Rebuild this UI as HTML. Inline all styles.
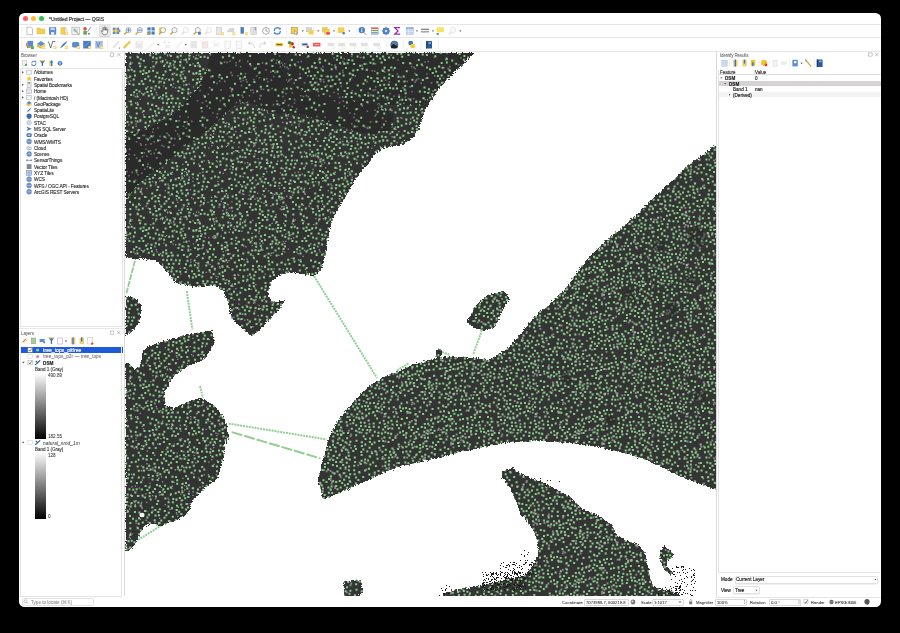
<!DOCTYPE html>
<html><head><meta charset="utf-8">
<style>
*{margin:0;padding:0;box-sizing:border-box}
html,body{width:900px;height:633px;background:#000;overflow:hidden;font-family:"Liberation Sans",sans-serif;color:#222}
.a{position:absolute}
.map,.icons{position:absolute;left:0;top:0}
.t{position:absolute;white-space:nowrap;line-height:1;-webkit-text-stroke:0.15px currentColor;will-change:transform}
</style></head><body>
<div class="a" style="left:19px;top:12.8px;width:862px;height:594.6px;background:#fff;border-radius:5.5px"></div>
<div class="a" style="left:22.7px;top:16.1px;width:5.2px;height:5.2px;background:#fe5f57;border-radius:50%"></div>
<div class="a" style="left:30.699999999999996px;top:16.1px;width:5.2px;height:5.2px;background:#febc2e;border-radius:50%"></div>
<div class="a" style="left:38.699999999999996px;top:16.1px;width:5.2px;height:5.2px;background:#28c840;border-radius:50%"></div>
<div class="t" style="left:49px;top:16.98px;font-size:5px;color:#3a3a3a;-webkit-text-stroke:0.2px #3a3a3a;letter-spacing:-0.05px">*Untitled Project — QGIS</div>
<div class="a" style="left:19px;top:24px;width:862px;height:0.8px;background:#e6e6e6;"></div>
<div class="a" style="left:19px;top:37px;width:862px;height:0.8px;background:#e6e6e6;"></div>
<div class="a" style="left:19px;top:51px;width:862px;height:0.8px;background:#e6e6e6;"></div>
<div class="a" style="left:99px;top:25.6px;width:11.3px;height:11px;background:#e8e8e8;border-radius:1.5px;border:0.5px solid #d6d6d6"></div>
<div class="a" style="left:124px;top:51px;width:0.8px;height:545px;background:#dcdcdc;"></div>
<div class="a" style="left:716px;top:51px;width:0.8px;height:546px;background:#dcdcdc;"></div>
<div class="t" style="left:21px;top:54.37px;font-size:4.5px;color:#555;letter-spacing:-0.1px;-webkit-text-stroke:0.02px #555">Browser</div>
<div class="a" style="left:20.3px;top:68.3px;width:102.7px;height:259px;background:#fff;border:0.6px solid #e4e4e4"></div>
<div class="t" style="left:34.2px;top:71.47px;font-size:4.8px;color:#262626;letter-spacing:-0.12px;-webkit-text-stroke:0.1px #262626">/Volumes</div>
<div class="t" style="left:34.2px;top:77.75px;font-size:4.8px;color:#262626;letter-spacing:-0.12px;-webkit-text-stroke:0.1px #262626">Favorites</div>
<div class="t" style="left:34.2px;top:84.04px;font-size:4.8px;color:#262626;letter-spacing:-0.12px;-webkit-text-stroke:0.1px #262626">Spatial Bookmarks</div>
<div class="t" style="left:34.2px;top:90.33px;font-size:4.8px;color:#262626;letter-spacing:-0.12px;-webkit-text-stroke:0.1px #262626">Home</div>
<div class="t" style="left:34.2px;top:96.61px;font-size:4.8px;color:#262626;letter-spacing:-0.12px;-webkit-text-stroke:0.1px #262626">/ (Macintosh HD)</div>
<div class="t" style="left:34.2px;top:102.89px;font-size:4.8px;color:#262626;letter-spacing:-0.12px;-webkit-text-stroke:0.1px #262626">GeoPackage</div>
<div class="t" style="left:34.2px;top:109.18px;font-size:4.8px;color:#262626;letter-spacing:-0.12px;-webkit-text-stroke:0.1px #262626">SpatiaLite</div>
<div class="t" style="left:34.2px;top:115.47px;font-size:4.8px;color:#262626;letter-spacing:-0.12px;-webkit-text-stroke:0.1px #262626">PostgreSQL</div>
<div class="t" style="left:34.2px;top:121.75px;font-size:4.8px;color:#262626;letter-spacing:-0.12px;-webkit-text-stroke:0.1px #262626">STAC</div>
<div class="t" style="left:34.2px;top:128.03px;font-size:4.8px;color:#262626;letter-spacing:-0.12px;-webkit-text-stroke:0.1px #262626">MS SQL Server</div>
<div class="t" style="left:34.2px;top:134.32px;font-size:4.8px;color:#262626;letter-spacing:-0.12px;-webkit-text-stroke:0.1px #262626">Oracle</div>
<div class="t" style="left:34.2px;top:140.60px;font-size:4.8px;color:#262626;letter-spacing:-0.12px;-webkit-text-stroke:0.1px #262626">WMS/WMTS</div>
<div class="t" style="left:34.2px;top:146.89px;font-size:4.8px;color:#262626;letter-spacing:-0.12px;-webkit-text-stroke:0.1px #262626">Cloud</div>
<div class="t" style="left:34.2px;top:153.17px;font-size:4.8px;color:#262626;letter-spacing:-0.12px;-webkit-text-stroke:0.1px #262626">Scenes</div>
<div class="t" style="left:34.2px;top:159.46px;font-size:4.8px;color:#262626;letter-spacing:-0.12px;-webkit-text-stroke:0.1px #262626">SensorThings</div>
<div class="t" style="left:34.2px;top:165.74px;font-size:4.8px;color:#262626;letter-spacing:-0.12px;-webkit-text-stroke:0.1px #262626">Vector Tiles</div>
<div class="t" style="left:34.2px;top:172.03px;font-size:4.8px;color:#262626;letter-spacing:-0.12px;-webkit-text-stroke:0.1px #262626">XYZ Tiles</div>
<div class="t" style="left:34.2px;top:178.31px;font-size:4.8px;color:#262626;letter-spacing:-0.12px;-webkit-text-stroke:0.1px #262626">WCS</div>
<div class="t" style="left:34.2px;top:184.60px;font-size:4.8px;color:#262626;letter-spacing:-0.12px;-webkit-text-stroke:0.1px #262626">WFS / OGC API - Features</div>
<div class="t" style="left:34.2px;top:190.88px;font-size:4.8px;color:#262626;letter-spacing:-0.12px;-webkit-text-stroke:0.1px #262626">ArcGIS REST Servers</div>
<div class="a" style="left:19px;top:327.5px;width:105px;height:0.6px;background:#e8e8e8;"></div>
<div class="t" style="left:21px;top:332.27px;font-size:4.5px;color:#555;letter-spacing:-0.1px;-webkit-text-stroke:0.02px #555">Layers</div>
<div class="a" style="left:19.6px;top:346.9px;width:103px;height:6.2px;background:#1f5bd9;"></div>
<div class="t" style="left:43.1px;top:348.38px;font-size:5.0px;color:#fff;letter-spacing:0.05px"><u>tree_tops_pitfree</u></div>
<div class="t" style="left:43.1px;top:355.27px;font-size:4.7px;color:#8a8a8a;letter-spacing:0.1px">tree_tops_p2r — tree_tops</div>
<div class="t" style="left:43.1px;top:361.87px;font-size:4.7px;color:#222;font-weight:bold">DSM</div>
<div class="t" style="left:35px;top:368.17px;font-size:4.6px;color:#2a2a2a;-webkit-text-stroke:0.08px #2a2a2a;letter-spacing:-0.05px">Band 1 (Gray)</div>
<div class="a" style="left:35px;top:372.5px;width:11px;height:66.3px;background:linear-gradient(#fff,#000);"></div>
<div class="t" style="left:48px;top:373.77px;font-size:4.6px;color:#333;-webkit-text-stroke:0.05px #333">490.89</div>
<div class="t" style="left:48px;top:435.47px;font-size:4.6px;color:#333;-webkit-text-stroke:0.05px #333">182.55</div>
<div class="t" style="left:43.1px;top:441.77px;font-size:4.8px;color:#444;font-style:italic;-webkit-text-stroke:0.05px #444;letter-spacing:0.05px">natural_nmd_1m</div>
<div class="t" style="left:35px;top:447.57px;font-size:4.6px;color:#2a2a2a;-webkit-text-stroke:0.08px #2a2a2a;letter-spacing:-0.05px">Band 1 (Gray)</div>
<div class="a" style="left:35px;top:452px;width:11px;height:66.5px;background:linear-gradient(#fff,#000);"></div>
<div class="t" style="left:48px;top:453.87px;font-size:4.6px;color:#333;-webkit-text-stroke:0.05px #333">128</div>
<div class="t" style="left:48px;top:515.47px;font-size:4.6px;color:#333;-webkit-text-stroke:0.05px #333">0</div>
<div class="a" style="left:20.2px;top:345.5px;width:102px;height:251px;background:transparent;border:0.6px solid #e4e4e4;border-top:none"></div>
<div class="a" style="left:21.7px;top:597.8px;width:72px;height:7.8px;background:#fff;border:0.6px solid #e2e2e2;border-radius:2px"></div>
<div class="t" style="left:31.3px;top:601.07px;font-size:4.6px;color:#8a8a8a;-webkit-text-stroke:0.05px #8a8a8a">Type to locate (⌘K)</div>
<div class="t" style="left:720px;top:54.37px;font-size:4.5px;color:#555;letter-spacing:-0.15px;-webkit-text-stroke:0.02px #555">Identify Results</div>
<div class="a" style="left:718.4px;top:69.5px;width:162px;height:503.3px;background:#fff;border:0.6px solid #e4e4e4;border-right:none"></div>
<div class="a" style="left:718.7px;top:69.7px;width:162px;height:4.9px;background:#fff;border-bottom:0.6px solid #dadada"></div>
<div class="a" style="left:753.5px;top:70px;width:0.6px;height:4.4px;background:#e0e0e0;"></div>
<div class="t" style="left:720px;top:71.27px;font-size:4.5px;color:#333;">Feature</div>
<div class="t" style="left:755px;top:71.27px;font-size:4.5px;color:#333;">Value</div>
<div class="a" style="left:718.7px;top:80.7px;width:162px;height:5.4px;background:#d4d4d4;"></div>
<div class="a" style="left:718.7px;top:92px;width:162px;height:5.4px;background:#f2f4f4;"></div>
<div class="t" style="left:724.7px;top:77.07px;font-size:4.6px;color:#222;font-weight:bold">DSM</div>
<div class="t" style="left:755px;top:77.07px;font-size:4.6px;color:#222;">0</div>
<div class="t" style="left:728.6px;top:82.67px;font-size:4.6px;color:#222;font-weight:bold">DSM</div>
<div class="t" style="left:733px;top:88.37px;font-size:4.6px;color:#222;">Band 1</div>
<div class="t" style="left:755px;top:88.37px;font-size:4.6px;color:#222;">nan</div>
<div class="t" style="left:733px;top:93.97px;font-size:4.6px;color:#222;">(Derived)</div>
<div class="t" style="left:720.8px;top:578.17px;font-size:4.6px;color:#222;">Mode</div>
<div class="a" style="left:734.5px;top:575.6px;width:143.5px;height:8px;background:#fff;border:0.6px solid #e0e0e0;border-radius:1.5px;box-shadow:0 0.4px 0.6px rgba(0,0,0,0.12)"></div>
<div class="t" style="left:736.3px;top:578.17px;font-size:4.65px;color:#222;">Current Layer</div>
<div class="t" style="left:720.8px;top:589.47px;font-size:4.6px;color:#222;">View</div>
<div class="a" style="left:733px;top:586px;width:27.4px;height:8.3px;background:#fff;border:0.6px solid #e0e0e0;border-radius:1.5px;box-shadow:0 0.4px 0.6px rgba(0,0,0,0.12)"></div>
<div class="t" style="left:735px;top:589.47px;font-size:4.6px;color:#222;">Tree</div>
<div class="a" style="left:716px;top:596.5px;width:165px;height:0.6px;background:#e4e4e4;"></div>
<div class="t" style="left:561.7px;top:600.67px;font-size:4.2px;color:#333;-webkit-text-stroke:0.05px #333">Coordinate</div>
<div class="a" style="left:583.6px;top:598.5px;width:45.7px;height:7px;background:#fff;border:0.6px solid #d8d8d8;border-radius:1px"></div>
<div class="t" style="left:586px;top:600.77px;font-size:4.2px;color:#333;-webkit-text-stroke:0.05px #333">7073988.7, 600219.8</div>
<div class="t" style="left:641px;top:600.67px;font-size:4.2px;color:#333;-webkit-text-stroke:0.05px #333">Scale</div>
<div class="a" style="left:652px;top:598.5px;width:32px;height:7px;background:#fff;border:0.6px solid #d8d8d8;border-radius:1px"></div>
<div class="t" style="left:653.5px;top:600.77px;font-size:4.2px;color:#333;-webkit-text-stroke:0.05px #333">1:1017</div>
<div class="t" style="left:695.8px;top:600.67px;font-size:4.2px;color:#333;-webkit-text-stroke:0.05px #333">Magnifier</div>
<div class="a" style="left:714.9px;top:598.5px;width:32.1px;height:7px;background:#fff;border:0.6px solid #d8d8d8;border-radius:1px"></div>
<div class="t" style="left:716.5px;top:600.77px;font-size:4.2px;color:#333;-webkit-text-stroke:0.05px #333">100%</div>
<div class="t" style="left:750.4px;top:600.67px;font-size:4.2px;color:#333;-webkit-text-stroke:0.05px #333">Rotation</div>
<div class="a" style="left:769px;top:598.5px;width:32px;height:7px;background:#fff;border:0.6px solid #d8d8d8;border-radius:1px"></div>
<div class="t" style="left:771px;top:600.77px;font-size:4.2px;color:#333;-webkit-text-stroke:0.05px #333">0.0 °</div>
<div class="t" style="left:810.7px;top:600.67px;font-size:4.2px;color:#333;-webkit-text-stroke:0.05px #333">Render</div>
<div class="t" style="left:835px;top:600.67px;font-size:4.3px;color:#333;-webkit-text-stroke:0.05px #333;letter-spacing:-0.15px">EPSG:3006</div>
<svg class="map" width="900" height="633" viewBox="0 0 900 633">
<defs>
<pattern id="dots" width="151" height="149" patternUnits="userSpaceOnUse">
<rect width="151" height="149" fill="#343434"/>
<path d="M68.3 83.4h1.8v1.8h-1.8zM139.6 69.4h1.8v1.8h-1.8zM76.7 87.5h1.8v1.8h-1.8zM27.9 76.3h1.8v1.8h-1.8zM95.1 118.2h1.8v1.8h-1.8zM14.2 45.2h1.8v1.8h-1.8zM13.7 120.6h1.8v1.8h-1.8zM104.7 6.2h1.8v1.8h-1.8zM148.3 143.7h1.8v1.8h-1.8zM98.7 91.7h1.8v1.8h-1.8zM23.8 2.2h1.8v1.8h-1.8zM79.8 8.9h1.8v1.8h-1.8zM28.7 36.0h1.8v1.8h-1.8zM4.5 69.1h1.8v1.8h-1.8zM66.5 125.5h1.8v1.8h-1.8zM78.4 95.4h1.8v1.8h-1.8zM75.5 98.7h1.8v1.8h-1.8zM69.1 41.4h1.8v1.8h-1.8zM150.6 148.4h1.8v1.8h-1.8zM126.9 105.5h1.8v1.8h-1.8zM47.6 34.2h1.8v1.8h-1.8zM43.6 10.5h1.8v1.8h-1.8zM115.7 59.7h1.8v1.8h-1.8zM127.8 57.6h1.8v1.8h-1.8zM144.7 126.2h1.8v1.8h-1.8zM0.1 31.2h1.8v1.8h-1.8zM137.5 70.0h1.8v1.8h-1.8zM148.0 59.2h1.8v1.8h-1.8zM11.0 93.8h1.8v1.8h-1.8zM117.6 40.2h1.8v1.8h-1.8zM13.2 49.6h1.8v1.8h-1.8zM145.6 112.9h1.8v1.8h-1.8zM17.8 36.7h1.8v1.8h-1.8zM15.3 8.9h1.8v1.8h-1.8zM120.4 26.5h1.8v1.8h-1.8zM84.5 66.7h1.8v1.8h-1.8zM28.8 109.1h1.8v1.8h-1.8zM19.8 95.9h1.8v1.8h-1.8zM17.6 62.7h1.8v1.8h-1.8zM32.1 40.2h1.8v1.8h-1.8zM146.6 119.7h1.8v1.8h-1.8zM45.9 131.8h1.8v1.8h-1.8zM31.8 58.7h1.8v1.8h-1.8zM129.0 95.6h1.8v1.8h-1.8zM15.2 147.4h1.8v1.8h-1.8zM32.2 38.5h1.8v1.8h-1.8zM116.7 49.0h1.8v1.8h-1.8zM44.7 10.9h1.8v1.8h-1.8zM13.6 86.8h1.8v1.8h-1.8zM36.7 89.6h1.8v1.8h-1.8zM56.1 67.5h1.8v1.8h-1.8zM144.8 72.1h1.8v1.8h-1.8zM86.8 129.1h1.8v1.8h-1.8zM27.6 23.0h1.8v1.8h-1.8zM137.2 121.9h1.8v1.8h-1.8zM37.7 28.3h1.8v1.8h-1.8zM111.7 140.1h1.8v1.8h-1.8zM29.7 141.6h1.8v1.8h-1.8zM133.2 89.9h1.8v1.8h-1.8zM63.6 15.5h1.8v1.8h-1.8zM5.8 143.4h1.8v1.8h-1.8zM36.0 105.0h1.8v1.8h-1.8zM38.8 122.7h1.8v1.8h-1.8zM90.1 43.7h1.8v1.8h-1.8zM26.5 107.3h1.8v1.8h-1.8zM10.4 34.0h1.8v1.8h-1.8zM84.5 127.0h1.8v1.8h-1.8zM92.8 41.8h1.8v1.8h-1.8zM138.5 30.4h1.8v1.8h-1.8zM2.5 40.1h1.8v1.8h-1.8zM67.3 9.0h1.8v1.8h-1.8zM26.6 54.9h1.8v1.8h-1.8zM86.4 19.6h1.8v1.8h-1.8zM54.7 132.8h1.8v1.8h-1.8zM148.1 97.9h1.8v1.8h-1.8zM104.4 87.1h1.8v1.8h-1.8zM21.2 5.2h1.8v1.8h-1.8zM2.7 135.6h1.8v1.8h-1.8zM105.8 143.5h1.8v1.8h-1.8zM3.2 94.8h1.8v1.8h-1.8zM72.8 108.8h1.8v1.8h-1.8zM48.2 148.9h1.8v1.8h-1.8zM11.4 81.4h1.8v1.8h-1.8zM111.3 134.1h1.8v1.8h-1.8zM111.3 104.8h1.8v1.8h-1.8zM119.8 136.3h1.8v1.8h-1.8zM53.1 102.1h1.8v1.8h-1.8zM136.0 129.8h1.8v1.8h-1.8zM63.0 117.8h1.8v1.8h-1.8zM130.4 85.3h1.8v1.8h-1.8zM94.4 57.0h1.8v1.8h-1.8zM88.0 90.7h1.8v1.8h-1.8zM12.1 95.3h1.8v1.8h-1.8zM150.0 131.1h1.8v1.8h-1.8zM110.0 57.9h1.8v1.8h-1.8zM111.0 86.6h1.8v1.8h-1.8zM66.5 124.9h1.8v1.8h-1.8zM12.7 111.8h1.8v1.8h-1.8zM4.5 89.6h1.8v1.8h-1.8zM72.6 34.3h1.8v1.8h-1.8zM105.4 74.1h1.8v1.8h-1.8zM92.8 137.1h1.8v1.8h-1.8zM38.6 1.7h1.8v1.8h-1.8zM45.5 101.0h1.8v1.8h-1.8zM30.6 25.3h1.8v1.8h-1.8zM136.8 98.3h1.8v1.8h-1.8zM66.7 132.9h1.8v1.8h-1.8zM49.4 99.2h1.8v1.8h-1.8zM30.0 64.2h1.8v1.8h-1.8zM121.7 136.2h1.8v1.8h-1.8zM132.9 57.3h1.8v1.8h-1.8zM88.0 47.2h1.8v1.8h-1.8zM20.6 74.0h1.8v1.8h-1.8zM126.4 126.5h1.8v1.8h-1.8zM107.4 141.6h1.8v1.8h-1.8zM41.8 25.2h1.8v1.8h-1.8zM68.0 41.0h1.8v1.8h-1.8zM32.3 61.7h1.8v1.8h-1.8zM94.5 73.6h1.8v1.8h-1.8zM47.6 125.0h1.8v1.8h-1.8zM148.3 67.4h1.8v1.8h-1.8zM11.3 4.7h1.8v1.8h-1.8zM131.8 6.2h1.8v1.8h-1.8zM107.0 85.0h1.8v1.8h-1.8zM46.7 117.9h1.8v1.8h-1.8zM2.9 20.2h1.8v1.8h-1.8zM68.7 3.7h1.8v1.8h-1.8zM125.3 35.4h1.8v1.8h-1.8zM21.3 7.0h1.8v1.8h-1.8zM95.0 66.5h1.8v1.8h-1.8zM95.1 97.6h1.8v1.8h-1.8zM121.9 142.8h1.8v1.8h-1.8zM103.4 29.7h1.8v1.8h-1.8zM71.7 26.6h1.8v1.8h-1.8zM1.6 70.4h1.8v1.8h-1.8zM107.8 26.7h1.8v1.8h-1.8zM41.1 51.5h1.8v1.8h-1.8zM105.3 77.5h1.8v1.8h-1.8zM92.8 112.7h1.8v1.8h-1.8zM59.4 118.0h1.8v1.8h-1.8zM136.8 13.0h1.8v1.8h-1.8zM140.8 107.6h1.8v1.8h-1.8zM19.6 67.6h1.8v1.8h-1.8zM94.5 135.6h1.8v1.8h-1.8zM56.9 84.8h1.8v1.8h-1.8zM132.8 118.7h1.8v1.8h-1.8zM142.6 69.1h1.8v1.8h-1.8zM98.3 30.5h1.8v1.8h-1.8zM109.0 121.9h1.8v1.8h-1.8zM96.9 106.9h1.8v1.8h-1.8zM32.2 134.1h1.8v1.8h-1.8zM148.1 145.6h1.8v1.8h-1.8zM81.1 117.8h1.8v1.8h-1.8zM48.4 135.6h1.8v1.8h-1.8zM129.2 51.9h1.8v1.8h-1.8zM12.5 65.7h1.8v1.8h-1.8zM83.1 114.5h1.8v1.8h-1.8zM73.6 4.2h1.8v1.8h-1.8zM122.2 9.5h1.8v1.8h-1.8zM120.8 25.8h1.8v1.8h-1.8zM50.6 117.4h1.8v1.8h-1.8zM21.2 22.2h1.8v1.8h-1.8zM78.0 107.8h1.8v1.8h-1.8zM126.8 102.7h1.8v1.8h-1.8zM142.8 73.4h1.8v1.8h-1.8zM143.3 12.8h1.8v1.8h-1.8zM33.4 78.5h1.8v1.8h-1.8zM43.8 108.6h1.8v1.8h-1.8zM96.5 77.9h1.8v1.8h-1.8zM127.4 83.4h1.8v1.8h-1.8zM47.1 56.8h1.8v1.8h-1.8zM127.6 134.2h1.8v1.8h-1.8zM31.4 126.8h1.8v1.8h-1.8zM146.2 78.1h1.8v1.8h-1.8zM86.5 29.9h1.8v1.8h-1.8zM80.9 75.0h1.8v1.8h-1.8zM91.4 4.1h1.8v1.8h-1.8zM146.4 76.9h1.8v1.8h-1.8zM60.5 119.4h1.8v1.8h-1.8zM85.0 73.2h1.8v1.8h-1.8zM104.3 9.8h1.8v1.8h-1.8zM81.3 61.7h1.8v1.8h-1.8zM144.5 137.6h1.8v1.8h-1.8zM40.7 70.5h1.8v1.8h-1.8zM19.2 64.6h1.8v1.8h-1.8zM123.2 134.2h1.8v1.8h-1.8zM72.0 47.3h1.8v1.8h-1.8zM28.9 92.1h1.8v1.8h-1.8zM139.7 19.3h1.8v1.8h-1.8zM117.7 3.4h1.8v1.8h-1.8zM29.3 33.9h1.8v1.8h-1.8zM103.7 48.0h1.8v1.8h-1.8zM53.7 92.3h1.8v1.8h-1.8zM15.8 108.9h1.8v1.8h-1.8zM18.5 76.1h1.8v1.8h-1.8zM37.8 29.5h1.8v1.8h-1.8zM80.1 65.1h1.8v1.8h-1.8zM56.7 61.6h1.8v1.8h-1.8zM79.9 23.8h1.8v1.8h-1.8zM30.8 94.1h1.8v1.8h-1.8zM96.4 78.9h1.8v1.8h-1.8zM128.5 91.1h1.8v1.8h-1.8zM129.4 34.7h1.8v1.8h-1.8zM111.9 120.8h1.8v1.8h-1.8zM136.3 47.1h1.8v1.8h-1.8zM47.6 137.5h1.8v1.8h-1.8zM32.9 148.8h1.8v1.8h-1.8zM134.0 20.0h1.8v1.8h-1.8zM36.1 108.3h1.8v1.8h-1.8zM39.2 14.5h1.8v1.8h-1.8zM125.7 62.8h1.8v1.8h-1.8zM119.3 18.8h1.8v1.8h-1.8zM60.8 102.1h1.8v1.8h-1.8zM2.7 29.9h1.8v1.8h-1.8zM103.0 135.8h1.8v1.8h-1.8zM146.2 17.2h1.8v1.8h-1.8zM76.4 113.0h1.8v1.8h-1.8zM75.9 102.2h1.8v1.8h-1.8zM28.5 10.5h1.8v1.8h-1.8zM16.0 5.6h1.8v1.8h-1.8zM83.3 76.7h1.8v1.8h-1.8zM85.9 21.8h1.8v1.8h-1.8zM27.9 30.4h1.8v1.8h-1.8zM126.9 147.6h1.8v1.8h-1.8zM140.0 14.2h1.8v1.8h-1.8zM9.4 141.8h1.8v1.8h-1.8zM69.8 113.9h1.8v1.8h-1.8zM49.4 69.6h1.8v1.8h-1.8zM77.8 64.1h1.8v1.8h-1.8zM90.7 2.0h1.8v1.8h-1.8zM105.9 125.8h1.8v1.8h-1.8zM27.4 67.6h1.8v1.8h-1.8zM111.6 60.4h1.8v1.8h-1.8zM29.5 24.6h1.8v1.8h-1.8zM77.4 2.3h1.8v1.8h-1.8zM134.9 119.5h1.8v1.8h-1.8zM106.4 128.2h1.8v1.8h-1.8zM95.0 60.3h1.8v1.8h-1.8zM90.5 75.1h1.8v1.8h-1.8zM148.4 119.9h1.8v1.8h-1.8zM39.0 135.8h1.8v1.8h-1.8zM112.4 115.9h1.8v1.8h-1.8zM123.0 60.4h1.8v1.8h-1.8zM135.4 131.1h1.8v1.8h-1.8zM104.9 114.3h1.8v1.8h-1.8zM115.5 60.5h1.8v1.8h-1.8zM109.1 10.5h1.8v1.8h-1.8zM51.6 69.9h1.8v1.8h-1.8zM1.6 53.0h1.8v1.8h-1.8zM96.4 93.0h1.8v1.8h-1.8zM35.0 140.8h1.8v1.8h-1.8zM100.6 50.3h1.8v1.8h-1.8zM99.6 84.9h1.8v1.8h-1.8zM80.5 58.0h1.8v1.8h-1.8zM151.0 95.7h1.8v1.8h-1.8zM105.9 113.5h1.8v1.8h-1.8zM148.0 3.4h1.8v1.8h-1.8zM92.9 110.1h1.8v1.8h-1.8zM38.8 59.8h1.8v1.8h-1.8zM7.6 29.1h1.8v1.8h-1.8zM56.7 14.7h1.8v1.8h-1.8zM37.9 134.9h1.8v1.8h-1.8zM83.1 75.7h1.8v1.8h-1.8zM146.0 84.6h1.8v1.8h-1.8zM150.3 95.1h1.8v1.8h-1.8zM122.2 11.4h1.8v1.8h-1.8zM90.2 113.1h1.8v1.8h-1.8zM6.8 138.6h1.8v1.8h-1.8zM24.1 70.3h1.8v1.8h-1.8zM25.5 73.8h1.8v1.8h-1.8zM92.3 8.7h1.8v1.8h-1.8zM142.7 62.7h1.8v1.8h-1.8zM79.5 89.1h1.8v1.8h-1.8zM55.2 42.6h1.8v1.8h-1.8zM98.9 83.5h1.8v1.8h-1.8zM42.8 106.8h1.8v1.8h-1.8zM44.7 2.1h1.8v1.8h-1.8zM37.0 6.4h1.8v1.8h-1.8zM23.6 112.4h1.8v1.8h-1.8zM58.9 133.7h1.8v1.8h-1.8zM113.0 7.5h1.8v1.8h-1.8zM149.3 140.7h1.8v1.8h-1.8zM11.1 134.9h1.8v1.8h-1.8zM64.9 71.2h1.8v1.8h-1.8zM146.9 36.3h1.8v1.8h-1.8zM79.0 139.7h1.8v1.8h-1.8zM109.1 69.8h1.8v1.8h-1.8zM147.8 121.7h1.8v1.8h-1.8zM91.1 17.1h1.8v1.8h-1.8zM94.3 67.9h1.8v1.8h-1.8zM30.8 7.8h1.8v1.8h-1.8zM79.7 18.5h1.8v1.8h-1.8zM66.9 99.5h1.8v1.8h-1.8zM68.8 39.1h1.8v1.8h-1.8zM87.9 62.5h1.8v1.8h-1.8zM117.5 79.1h1.8v1.8h-1.8zM150.6 141.9h1.8v1.8h-1.8zM110.9 35.5h1.8v1.8h-1.8zM17.2 133.0h1.8v1.8h-1.8zM118.4 93.1h1.8v1.8h-1.8zM54.2 40.5h1.8v1.8h-1.8zM103.4 84.2h1.8v1.8h-1.8zM89.3 94.3h1.8v1.8h-1.8zM113.8 28.3h1.8v1.8h-1.8zM37.6 146.0h1.8v1.8h-1.8zM138.3 130.9h1.8v1.8h-1.8zM6.0 9.1h1.8v1.8h-1.8zM40.9 63.4h1.8v1.8h-1.8zM94.1 15.3h1.8v1.8h-1.8zM81.8 10.8h1.8v1.8h-1.8zM13.1 100.8h1.8v1.8h-1.8zM83.1 94.0h1.8v1.8h-1.8zM56.4 71.3h1.8v1.8h-1.8zM31.8 51.2h1.8v1.8h-1.8zM112.5 124.9h1.8v1.8h-1.8zM11.2 17.8h1.8v1.8h-1.8zM122.2 92.9h1.8v1.8h-1.8zM116.1 31.8h1.8v1.8h-1.8zM64.1 38.5h1.8v1.8h-1.8zM122.3 55.0h1.8v1.8h-1.8zM98.7 147.4h1.8v1.8h-1.8zM49.1 81.7h1.8v1.8h-1.8zM112.7 137.2h1.8v1.8h-1.8zM64.6 55.0h1.8v1.8h-1.8zM14.6 130.4h1.8v1.8h-1.8zM11.9 12.4h1.8v1.8h-1.8zM85.2 72.2h1.8v1.8h-1.8zM103.5 44.5h1.8v1.8h-1.8zM117.1 11.3h1.8v1.8h-1.8zM32.2 98.7h1.8v1.8h-1.8zM12.3 45.3h1.8v1.8h-1.8zM109.5 103.4h1.8v1.8h-1.8zM42.7 21.3h1.8v1.8h-1.8zM54.0 108.2h1.8v1.8h-1.8zM55.3 17.5h1.8v1.8h-1.8zM107.1 84.8h1.8v1.8h-1.8zM138.7 140.1h1.8v1.8h-1.8zM137.9 65.3h1.8v1.8h-1.8zM121.3 45.4h1.8v1.8h-1.8zM48.0 59.5h1.8v1.8h-1.8zM141.1 133.3h1.8v1.8h-1.8zM37.5 53.9h1.8v1.8h-1.8zM55.2 54.1h1.8v1.8h-1.8zM59.7 57.7h1.8v1.8h-1.8zM29.4 84.0h1.8v1.8h-1.8zM120.4 80.5h1.8v1.8h-1.8zM126.3 83.9h1.8v1.8h-1.8zM26.7 113.1h1.8v1.8h-1.8zM133.0 41.9h1.8v1.8h-1.8zM3.4 76.8h1.8v1.8h-1.8zM82.2 84.6h1.8v1.8h-1.8zM145.9 97.0h1.8v1.8h-1.8zM121.5 9.5h1.8v1.8h-1.8zM82.6 117.4h1.8v1.8h-1.8zM12.7 12.2h1.8v1.8h-1.8zM111.3 134.0h1.8v1.8h-1.8zM12.8 94.5h1.8v1.8h-1.8zM21.7 111.1h1.8v1.8h-1.8zM98.0 36.6h1.8v1.8h-1.8zM33.3 114.0h1.8v1.8h-1.8zM78.8 113.9h1.8v1.8h-1.8zM59.6 50.3h1.8v1.8h-1.8zM146.2 100.2h1.8v1.8h-1.8zM74.5 80.1h1.8v1.8h-1.8zM108.9 105.5h1.8v1.8h-1.8zM138.2 61.2h1.8v1.8h-1.8zM124.8 99.3h1.8v1.8h-1.8zM128.9 120.1h1.8v1.8h-1.8zM125.9 132.4h1.8v1.8h-1.8zM144.6 95.4h1.8v1.8h-1.8zM79.1 105.8h1.8v1.8h-1.8zM121.1 62.8h1.8v1.8h-1.8zM63.5 21.8h1.8v1.8h-1.8zM111.9 147.7h1.8v1.8h-1.8zM56.7 25.0h1.8v1.8h-1.8zM30.9 63.3h1.8v1.8h-1.8zM44.1 144.5h1.8v1.8h-1.8zM8.9 46.0h1.8v1.8h-1.8zM17.3 96.5h1.8v1.8h-1.8zM117.2 26.7h1.8v1.8h-1.8zM9.4 68.4h1.8v1.8h-1.8zM88.2 135.5h1.8v1.8h-1.8zM5.5 16.2h1.8v1.8h-1.8zM27.9 32.4h1.8v1.8h-1.8zM35.5 106.9h1.8v1.8h-1.8zM89.8 33.4h1.8v1.8h-1.8zM27.9 41.9h1.8v1.8h-1.8zM26.0 112.9h1.8v1.8h-1.8zM47.1 81.7h1.8v1.8h-1.8zM123.4 71.4h1.8v1.8h-1.8zM39.3 132.2h1.8v1.8h-1.8zM138.1 51.0h1.8v1.8h-1.8zM82.6 142.6h1.8v1.8h-1.8zM72.9 32.9h1.8v1.8h-1.8zM7.5 141.2h1.8v1.8h-1.8zM121.0 57.4h1.8v1.8h-1.8zM79.7 76.9h1.8v1.8h-1.8zM41.5 147.5h1.8v1.8h-1.8zM99.3 35.4h1.8v1.8h-1.8zM1.6 70.4h1.8v1.8h-1.8zM56.1 118.7h1.8v1.8h-1.8zM107.7 90.3h1.8v1.8h-1.8zM23.8 23.4h1.8v1.8h-1.8zM48.6 38.7h1.8v1.8h-1.8zM131.3 76.9h1.8v1.8h-1.8zM96.2 148.0h1.8v1.8h-1.8zM40.2 79.7h1.8v1.8h-1.8zM22.7 114.8h1.8v1.8h-1.8zM0.2 122.4h1.8v1.8h-1.8zM-0.4 -0.6h1.8v1.8h-1.8zM-0.4 148.4h1.8v1.8h-1.8zM150.6 -0.6h1.8v1.8h-1.8zM15.2 -1.6h1.8v1.8h-1.8zM48.2 -0.1h1.8v1.8h-1.8zM-1.0 131.1h1.8v1.8h-1.8zM32.9 -0.2h1.8v1.8h-1.8zM126.9 -1.4h1.8v1.8h-1.8zM-0.0 95.7h1.8v1.8h-1.8zM-0.7 95.1h1.8v1.8h-1.8zM-1.7 140.7h1.8v1.8h-1.8zM-0.4 141.9h1.8v1.8h-1.8zM98.7 -1.6h1.8v1.8h-1.8zM111.9 -1.3h1.8v1.8h-1.8zM41.5 -1.5h1.8v1.8h-1.8zM96.2 -1.0h1.8v1.8h-1.8z" fill="#8a8a8a"/>
<path d="M35.9 81.1h2.0v2.0h-2.0zM55.9 90.0h2.0v2.0h-2.0zM94.5 9.8h2.0v2.0h-2.0zM2.0 124.8h2.0v2.0h-2.0zM39.2 34.9h2.0v2.0h-2.0zM150.3 70.1h2.0v2.0h-2.0zM126.3 71.0h2.0v2.0h-2.0zM96.5 22.4h2.0v2.0h-2.0zM95.9 129.3h2.0v2.0h-2.0zM79.0 110.4h2.0v2.0h-2.0zM101.4 9.5h2.0v2.0h-2.0zM114.5 88.1h2.0v2.0h-2.0zM45.5 4.6h2.0v2.0h-2.0zM130.7 70.4h2.0v2.0h-2.0zM108.5 130.9h2.0v2.0h-2.0zM107.8 137.2h2.0v2.0h-2.0zM59.6 119.3h2.0v2.0h-2.0zM67.1 139.4h2.0v2.0h-2.0zM132.7 14.5h2.0v2.0h-2.0zM20.5 32.3h2.0v2.0h-2.0zM145.8 65.0h2.0v2.0h-2.0zM94.6 44.9h2.0v2.0h-2.0zM76.6 57.5h2.0v2.0h-2.0zM53.0 87.2h2.0v2.0h-2.0zM88.2 134.7h2.0v2.0h-2.0zM103.0 138.4h2.0v2.0h-2.0zM129.3 147.7h2.0v2.0h-2.0zM101.4 24.3h2.0v2.0h-2.0zM130.0 143.7h2.0v2.0h-2.0zM136.6 84.8h2.0v2.0h-2.0zM107.8 31.5h2.0v2.0h-2.0zM125.6 85.5h2.0v2.0h-2.0zM43.0 9.5h2.0v2.0h-2.0zM13.4 119.3h2.0v2.0h-2.0zM62.0 22.5h2.0v2.0h-2.0zM44.4 114.5h2.0v2.0h-2.0zM131.8 6.6h2.0v2.0h-2.0zM92.8 6.7h2.0v2.0h-2.0zM108.5 49.3h2.0v2.0h-2.0zM133.0 146.1h2.0v2.0h-2.0zM76.3 148.8h2.0v2.0h-2.0zM46.8 11.5h2.0v2.0h-2.0zM90.6 4.7h2.0v2.0h-2.0zM29.8 60.8h2.0v2.0h-2.0zM92.2 23.3h2.0v2.0h-2.0zM6.4 129.3h2.0v2.0h-2.0zM47.4 142.8h2.0v2.0h-2.0zM135.4 56.3h2.0v2.0h-2.0zM69.5 77.5h2.0v2.0h-2.0zM97.2 88.8h2.0v2.0h-2.0zM84.4 92.4h2.0v2.0h-2.0zM142.0 75.5h2.0v2.0h-2.0zM65.1 107.3h2.0v2.0h-2.0zM35.9 44.9h2.0v2.0h-2.0zM147.6 77.6h2.0v2.0h-2.0zM82.8 1.7h2.0v2.0h-2.0zM62.7 86.4h2.0v2.0h-2.0zM3.0 91.8h2.0v2.0h-2.0zM94.7 69.5h2.0v2.0h-2.0zM102.6 52.5h2.0v2.0h-2.0zM106.7 110.0h2.0v2.0h-2.0zM3.3 9.0h2.0v2.0h-2.0zM102.1 143.5h2.0v2.0h-2.0zM37.9 68.0h2.0v2.0h-2.0zM89.5 47.7h2.0v2.0h-2.0zM55.0 46.6h2.0v2.0h-2.0zM45.4 56.2h2.0v2.0h-2.0zM116.6 4.0h2.0v2.0h-2.0zM86.0 109.5h2.0v2.0h-2.0zM46.8 33.2h2.0v2.0h-2.0zM121.4 35.6h2.0v2.0h-2.0zM28.3 64.8h2.0v2.0h-2.0zM105.4 15.2h2.0v2.0h-2.0zM48.6 49.7h2.0v2.0h-2.0zM125.9 65.3h2.0v2.0h-2.0zM129.2 25.2h2.0v2.0h-2.0zM50.8 96.9h2.0v2.0h-2.0zM133.6 67.2h2.0v2.0h-2.0zM34.0 18.0h2.0v2.0h-2.0zM80.0 28.4h2.0v2.0h-2.0zM121.8 124.9h2.0v2.0h-2.0zM27.7 41.5h2.0v2.0h-2.0zM121.9 95.6h2.0v2.0h-2.0zM121.7 51.4h2.0v2.0h-2.0zM19.6 43.5h2.0v2.0h-2.0zM119.9 40.4h2.0v2.0h-2.0zM52.3 62.1h2.0v2.0h-2.0zM63.4 61.0h2.0v2.0h-2.0zM139.0 23.2h2.0v2.0h-2.0zM0.7 140.5h2.0v2.0h-2.0zM140.0 33.1h2.0v2.0h-2.0zM112.6 124.7h2.0v2.0h-2.0zM100.1 77.3h2.0v2.0h-2.0zM43.6 50.8h2.0v2.0h-2.0zM34.3 10.1h2.0v2.0h-2.0zM88.9 42.8h2.0v2.0h-2.0zM122.3 6.7h2.0v2.0h-2.0zM136.4 103.4h2.0v2.0h-2.0zM139.5 133.6h2.0v2.0h-2.0zM2.0 111.0h2.0v2.0h-2.0zM25.9 44.7h2.0v2.0h-2.0zM62.5 139.9h2.0v2.0h-2.0zM92.4 50.9h2.0v2.0h-2.0zM38.1 128.4h2.0v2.0h-2.0zM72.1 116.6h2.0v2.0h-2.0zM53.1 29.4h2.0v2.0h-2.0zM80.7 121.7h2.0v2.0h-2.0zM25.9 118.0h2.0v2.0h-2.0zM139.2 120.1h2.0v2.0h-2.0zM124.3 1.1h2.0v2.0h-2.0zM7.5 40.4h2.0v2.0h-2.0zM40.6 78.6h2.0v2.0h-2.0zM63.9 70.5h2.0v2.0h-2.0zM117.3 0.3h2.0v2.0h-2.0zM8.3 18.9h2.0v2.0h-2.0zM18.8 10.2h2.0v2.0h-2.0zM147.2 127.3h2.0v2.0h-2.0zM13.0 74.8h2.0v2.0h-2.0zM47.7 46.9h2.0v2.0h-2.0zM88.6 53.8h2.0v2.0h-2.0zM28.9 49.0h2.0v2.0h-2.0zM18.7 82.8h2.0v2.0h-2.0zM108.1 56.7h2.0v2.0h-2.0zM12.1 26.6h2.0v2.0h-2.0zM118.2 56.7h2.0v2.0h-2.0zM65.2 55.5h2.0v2.0h-2.0zM74.9 104.7h2.0v2.0h-2.0zM63.5 103.4h2.0v2.0h-2.0zM69.6 36.5h2.0v2.0h-2.0zM80.9 103.6h2.0v2.0h-2.0zM10.8 63.3h2.0v2.0h-2.0zM64.3 131.1h2.0v2.0h-2.0zM141.4 55.8h2.0v2.0h-2.0zM135.6 117.8h2.0v2.0h-2.0zM18.6 121.2h2.0v2.0h-2.0zM100.0 132.2h2.0v2.0h-2.0zM119.7 99.5h2.0v2.0h-2.0zM110.8 84.0h2.0v2.0h-2.0zM15.6 87.6h2.0v2.0h-2.0zM0.7 21.4h2.0v2.0h-2.0zM13.9 14.8h2.0v2.0h-2.0zM133.0 26.7h2.0v2.0h-2.0zM18.3 125.7h2.0v2.0h-2.0zM101.7 124.6h2.0v2.0h-2.0zM143.8 86.3h2.0v2.0h-2.0zM115.9 76.2h2.0v2.0h-2.0zM113.1 139.2h2.0v2.0h-2.0zM9.2 48.3h2.0v2.0h-2.0zM85.2 123.4h2.0v2.0h-2.0zM36.6 26.8h2.0v2.0h-2.0zM37.7 91.8h2.0v2.0h-2.0zM113.8 58.7h2.0v2.0h-2.0zM55.5 59.1h2.0v2.0h-2.0zM146.9 61.5h2.0v2.0h-2.0zM112.9 23.9h2.0v2.0h-2.0zM104.3 112.7h2.0v2.0h-2.0zM73.0 95.8h2.0v2.0h-2.0zM135.5 22.2h2.0v2.0h-2.0zM14.5 111.5h2.0v2.0h-2.0zM138.4 77.1h2.0v2.0h-2.0zM30.1 87.3h2.0v2.0h-2.0zM44.7 105.1h2.0v2.0h-2.0zM62.4 127.2h2.0v2.0h-2.0zM88.3 39.8h2.0v2.0h-2.0zM32.9 3.4h2.0v2.0h-2.0zM72.4 57.0h2.0v2.0h-2.0zM26.0 53.7h2.0v2.0h-2.0zM48.6 115.4h2.0v2.0h-2.0zM21.7 147.7h2.0v2.0h-2.0zM72.4 89.3h2.0v2.0h-2.0zM70.7 124.4h2.0v2.0h-2.0zM72.7 107.4h2.0v2.0h-2.0zM129.4 59.6h2.0v2.0h-2.0zM110.8 143.1h2.0v2.0h-2.0zM35.5 106.9h2.0v2.0h-2.0zM128.9 36.1h2.0v2.0h-2.0zM28.6 38.5h2.0v2.0h-2.0zM28.3 105.0h2.0v2.0h-2.0zM129.6 134.1h2.0v2.0h-2.0zM47.3 63.1h2.0v2.0h-2.0zM110.1 12.8h2.0v2.0h-2.0zM14.0 124.3h2.0v2.0h-2.0zM87.6 100.7h2.0v2.0h-2.0zM1.0 49.9h2.0v2.0h-2.0zM144.3 58.2h2.0v2.0h-2.0zM82.2 17.8h2.0v2.0h-2.0zM41.5 99.1h2.0v2.0h-2.0zM17.0 132.2h2.0v2.0h-2.0zM137.2 14.4h2.0v2.0h-2.0zM116.6 112.8h2.0v2.0h-2.0zM44.6 100.7h2.0v2.0h-2.0zM98.8 120.1h2.0v2.0h-2.0zM40.1 112.4h2.0v2.0h-2.0zM145.2 100.3h2.0v2.0h-2.0zM74.6 52.5h2.0v2.0h-2.0zM108.4 101.1h2.0v2.0h-2.0zM85.5 27.1h2.0v2.0h-2.0zM97.5 94.0h2.0v2.0h-2.0zM27.0 132.6h2.0v2.0h-2.0zM99.0 18.3h2.0v2.0h-2.0zM50.1 107.4h2.0v2.0h-2.0zM90.2 82.7h2.0v2.0h-2.0zM97.8 68.2h2.0v2.0h-2.0zM47.2 26.3h2.0v2.0h-2.0zM10.4 106.7h2.0v2.0h-2.0zM113.9 80.9h2.0v2.0h-2.0zM111.7 53.5h2.0v2.0h-2.0zM40.1 57.1h2.0v2.0h-2.0zM76.2 36.8h2.0v2.0h-2.0zM116.1 52.8h2.0v2.0h-2.0zM81.8 115.0h2.0v2.0h-2.0zM53.3 126.2h2.0v2.0h-2.0zM16.9 40.3h2.0v2.0h-2.0zM117.6 108.4h2.0v2.0h-2.0zM27.9 28.2h2.0v2.0h-2.0zM62.9 110.8h2.0v2.0h-2.0zM123.2 111.6h2.0v2.0h-2.0zM89.4 21.8h2.0v2.0h-2.0zM60.2 28.9h2.0v2.0h-2.0zM79.7 84.7h2.0v2.0h-2.0zM121.3 132.8h2.0v2.0h-2.0zM83.4 86.9h2.0v2.0h-2.0zM95.7 145.6h2.0v2.0h-2.0zM103.7 44.6h2.0v2.0h-2.0zM90.8 108.3h2.0v2.0h-2.0zM0.4 114.8h2.0v2.0h-2.0zM100.0 73.3h2.0v2.0h-2.0zM79.1 68.6h2.0v2.0h-2.0zM29.2 78.9h2.0v2.0h-2.0zM5.6 74.6h2.0v2.0h-2.0zM85.5 142.9h2.0v2.0h-2.0zM119.6 92.9h2.0v2.0h-2.0zM7.6 53.6h2.0v2.0h-2.0zM81.4 138.5h2.0v2.0h-2.0zM48.8 129.7h2.0v2.0h-2.0zM104.9 20.0h2.0v2.0h-2.0zM129.6 89.6h2.0v2.0h-2.0zM140.0 106.7h2.0v2.0h-2.0zM121.8 138.8h2.0v2.0h-2.0zM130.1 65.1h2.0v2.0h-2.0zM114.3 72.3h2.0v2.0h-2.0zM16.5 6.4h2.0v2.0h-2.0zM11.8 29.8h2.0v2.0h-2.0zM24.3 74.1h2.0v2.0h-2.0zM105.6 80.1h2.0v2.0h-2.0zM63.7 96.7h2.0v2.0h-2.0zM46.0 69.2h2.0v2.0h-2.0zM56.0 78.9h2.0v2.0h-2.0zM90.1 33.4h2.0v2.0h-2.0zM0.4 31.1h2.0v2.0h-2.0zM118.3 21.4h2.0v2.0h-2.0zM69.5 29.1h2.0v2.0h-2.0zM31.6 25.4h2.0v2.0h-2.0zM4.1 16.4h2.0v2.0h-2.0zM9.0 3.3h2.0v2.0h-2.0zM67.7 60.8h2.0v2.0h-2.0zM106.2 7.6h2.0v2.0h-2.0zM60.9 59.1h2.0v2.0h-2.0zM4.0 143.9h2.0v2.0h-2.0zM33.1 14.0h2.0v2.0h-2.0zM71.7 24.5h2.0v2.0h-2.0zM109.9 41.0h2.0v2.0h-2.0zM119.0 69.3h2.0v2.0h-2.0zM140.9 44.8h2.0v2.0h-2.0zM37.7 39.6h2.0v2.0h-2.0zM52.1 14.0h2.0v2.0h-2.0zM89.4 0.5h2.0v2.0h-2.0zM25.7 5.5h2.0v2.0h-2.0zM8.1 97.5h2.0v2.0h-2.0zM135.9 29.9h2.0v2.0h-2.0zM147.1 71.1h2.0v2.0h-2.0zM142.0 5.1h2.0v2.0h-2.0zM46.0 90.4h2.0v2.0h-2.0zM142.9 13.1h2.0v2.0h-2.0zM44.3 126.6h2.0v2.0h-2.0zM17.3 58.1h2.0v2.0h-2.0zM50.5 101.3h2.0v2.0h-2.0zM140.2 26.0h2.0v2.0h-2.0zM111.7 109.4h2.0v2.0h-2.0zM126.2 82.4h2.0v2.0h-2.0zM62.6 34.2h2.0v2.0h-2.0zM40.7 25.3h2.0v2.0h-2.0zM108.8 90.2h2.0v2.0h-2.0zM107.3 3.4h2.0v2.0h-2.0zM70.5 113.0h2.0v2.0h-2.0zM102.3 14.5h2.0v2.0h-2.0zM35.8 125.7h2.0v2.0h-2.0zM135.4 109.2h2.0v2.0h-2.0zM50.4 55.1h2.0v2.0h-2.0zM10.9 59.5h2.0v2.0h-2.0zM85.9 16.4h2.0v2.0h-2.0zM12.2 96.7h2.0v2.0h-2.0zM36.3 7.3h2.0v2.0h-2.0zM23.1 96.0h2.0v2.0h-2.0zM34.7 144.1h2.0v2.0h-2.0zM33.2 83.8h2.0v2.0h-2.0zM63.4 116.4h2.0v2.0h-2.0zM91.3 117.5h2.0v2.0h-2.0zM26.8 11.8h2.0v2.0h-2.0zM124.7 16.8h2.0v2.0h-2.0zM30.1 133.1h2.0v2.0h-2.0zM13.0 69.3h2.0v2.0h-2.0zM33.6 123.6h2.0v2.0h-2.0zM92.9 95.6h2.0v2.0h-2.0zM115.0 129.9h2.0v2.0h-2.0zM67.3 16.5h2.0v2.0h-2.0zM126.1 88.6h2.0v2.0h-2.0zM123.0 30.7h2.0v2.0h-2.0zM52.3 72.2h2.0v2.0h-2.0zM10.8 82.4h2.0v2.0h-2.0zM111.0 63.0h2.0v2.0h-2.0zM32.3 52.2h2.0v2.0h-2.0zM65.1 12.5h2.0v2.0h-2.0zM92.4 138.8h2.0v2.0h-2.0zM80.9 62.4h2.0v2.0h-2.0zM143.2 134.6h2.0v2.0h-2.0zM143.4 72.1h2.0v2.0h-2.0zM116.8 60.6h2.0v2.0h-2.0zM150.6 137.1h2.0v2.0h-2.0zM44.1 139.2h2.0v2.0h-2.0zM78.4 95.2h2.0v2.0h-2.0zM6.1 111.0h2.0v2.0h-2.0zM41.7 64.4h2.0v2.0h-2.0zM52.1 110.6h2.0v2.0h-2.0zM112.8 42.8h2.0v2.0h-2.0zM15.6 44.6h2.0v2.0h-2.0zM62.1 11.6h2.0v2.0h-2.0zM23.1 113.6h2.0v2.0h-2.0zM105.8 145.5h2.0v2.0h-2.0zM147.9 130.5h2.0v2.0h-2.0zM56.3 24.0h2.0v2.0h-2.0zM79.4 80.8h2.0v2.0h-2.0zM44.9 36.1h2.0v2.0h-2.0zM19.9 79.1h2.0v2.0h-2.0zM80.9 24.7h2.0v2.0h-2.0zM7.6 30.4h2.0v2.0h-2.0zM147.9 117.0h2.0v2.0h-2.0zM147.9 5.2h2.0v2.0h-2.0zM27.9 2.0h2.0v2.0h-2.0zM65.3 50.4h2.0v2.0h-2.0zM7.7 81.4h2.0v2.0h-2.0zM37.3 119.5h2.0v2.0h-2.0zM63.2 38.8h2.0v2.0h-2.0zM6.6 64.0h2.0v2.0h-2.0zM94.8 100.6h2.0v2.0h-2.0zM37.4 20.2h2.0v2.0h-2.0zM114.5 117.6h2.0v2.0h-2.0zM76.8 123.8h2.0v2.0h-2.0zM83.3 41.7h2.0v2.0h-2.0zM97.1 133.6h2.0v2.0h-2.0zM136.8 69.7h2.0v2.0h-2.0zM122.9 89.8h2.0v2.0h-2.0zM62.6 77.2h2.0v2.0h-2.0zM103.3 147.8h2.0v2.0h-2.0zM53.1 67.8h2.0v2.0h-2.0zM144.8 23.1h2.0v2.0h-2.0zM47.6 77.8h2.0v2.0h-2.0zM125.0 138.8h2.0v2.0h-2.0zM86.8 81.9h2.0v2.0h-2.0zM73.6 41.7h2.0v2.0h-2.0zM15.5 99.6h2.0v2.0h-2.0zM135.3 143.1h2.0v2.0h-2.0zM97.2 29.1h2.0v2.0h-2.0zM57.9 123.4h2.0v2.0h-2.0zM47.7 40.4h2.0v2.0h-2.0zM143.4 140.6h2.0v2.0h-2.0zM47.9 58.5h2.0v2.0h-2.0zM42.6 19.6h2.0v2.0h-2.0zM37.8 146.0h2.0v2.0h-2.0zM12.0 34.2h2.0v2.0h-2.0zM30.2 11.9h2.0v2.0h-2.0zM126.6 94.0h2.0v2.0h-2.0zM42.6 143.2h2.0v2.0h-2.0zM82.5 7.0h2.0v2.0h-2.0zM21.8 134.9h2.0v2.0h-2.0zM26.9 147.9h2.0v2.0h-2.0zM101.9 96.4h2.0v2.0h-2.0zM21.5 8.1h2.0v2.0h-2.0zM28.6 122.6h2.0v2.0h-2.0zM145.1 79.7h2.0v2.0h-2.0zM57.7 16.0h2.0v2.0h-2.0zM58.9 147.1h2.0v2.0h-2.0zM21.9 18.9h2.0v2.0h-2.0zM53.2 136.3h2.0v2.0h-2.0zM141.8 148.5h2.0v2.0h-2.0zM148.0 36.6h2.0v2.0h-2.0zM53.5 141.7h2.0v2.0h-2.0zM118.1 84.8h2.0v2.0h-2.0zM66.8 79.6h2.0v2.0h-2.0zM25.4 39.6h2.0v2.0h-2.0zM30.6 7.9h2.0v2.0h-2.0zM2.1 129.6h2.0v2.0h-2.0zM119.9 147.7h2.0v2.0h-2.0zM115.7 13.8h2.0v2.0h-2.0zM81.6 65.7h2.0v2.0h-2.0zM22.1 89.5h2.0v2.0h-2.0zM148.1 139.5h2.0v2.0h-2.0zM130.2 124.4h2.0v2.0h-2.0zM75.6 109.1h2.0v2.0h-2.0zM68.4 71.2h2.0v2.0h-2.0zM80.2 130.4h2.0v2.0h-2.0zM66.7 92.1h2.0v2.0h-2.0zM128.0 115.8h2.0v2.0h-2.0zM9.0 127.3h2.0v2.0h-2.0zM55.4 32.0h2.0v2.0h-2.0zM45.4 75.3h2.0v2.0h-2.0zM60.3 55.5h2.0v2.0h-2.0zM33.2 55.3h2.0v2.0h-2.0zM12.3 47.8h2.0v2.0h-2.0zM125.1 124.8h2.0v2.0h-2.0zM137.9 65.8h2.0v2.0h-2.0zM71.8 132.7h2.0v2.0h-2.0zM43.3 28.3h2.0v2.0h-2.0zM12.8 4.2h2.0v2.0h-2.0zM53.0 1.1h2.0v2.0h-2.0zM125.7 27.4h2.0v2.0h-2.0zM77.3 64.4h2.0v2.0h-2.0zM147.8 103.0h2.0v2.0h-2.0zM12.6 65.8h2.0v2.0h-2.0zM113.8 147.8h2.0v2.0h-2.0zM72.5 62.9h2.0v2.0h-2.0zM135.1 123.1h2.0v2.0h-2.0zM4.0 139.3h2.0v2.0h-2.0zM70.8 127.7h2.0v2.0h-2.0zM148.3 98.6h2.0v2.0h-2.0zM45.1 134.1h2.0v2.0h-2.0zM116.1 135.6h2.0v2.0h-2.0zM129.5 110.0h2.0v2.0h-2.0zM65.4 46.5h2.0v2.0h-2.0zM29.3 129.8h2.0v2.0h-2.0zM141.6 17.8h2.0v2.0h-2.0zM138.0 59.2h2.0v2.0h-2.0zM58.0 126.9h2.0v2.0h-2.0zM125.8 8.5h2.0v2.0h-2.0zM39.8 103.4h2.0v2.0h-2.0zM33.3 65.9h2.0v2.0h-2.0zM85.3 36.6h2.0v2.0h-2.0zM101.3 90.8h2.0v2.0h-2.0zM26.5 111.9h2.0v2.0h-2.0zM59.5 80.4h2.0v2.0h-2.0zM90.3 93.6h2.0v2.0h-2.0zM66.8 8.3h2.0v2.0h-2.0zM118.8 128.1h2.0v2.0h-2.0zM74.0 86.3h2.0v2.0h-2.0zM40.5 133.9h2.0v2.0h-2.0zM103.5 33.1h2.0v2.0h-2.0zM123.4 146.9h2.0v2.0h-2.0zM16.3 78.7h2.0v2.0h-2.0zM133.6 80.7h2.0v2.0h-2.0zM149.3 124.6h2.0v2.0h-2.0zM1.6 101.1h2.0v2.0h-2.0zM84.9 57.4h2.0v2.0h-2.0zM26.1 58.8h2.0v2.0h-2.0zM8.3 71.9h2.0v2.0h-2.0zM30.4 75.3h2.0v2.0h-2.0zM25.2 15.0h2.0v2.0h-2.0zM131.1 76.8h2.0v2.0h-2.0zM41.7 46.8h2.0v2.0h-2.0zM145.3 27.7h2.0v2.0h-2.0zM86.3 76.1h2.0v2.0h-2.0zM30.1 33.2h2.0v2.0h-2.0zM110.8 134.5h2.0v2.0h-2.0zM14.9 104.8h2.0v2.0h-2.0zM113.3 33.6h2.0v2.0h-2.0zM69.0 145.2h2.0v2.0h-2.0zM25.0 99.4h2.0v2.0h-2.0zM56.2 129.7h2.0v2.0h-2.0zM112.5 75.1h2.0v2.0h-2.0zM103.8 63.7h2.0v2.0h-2.0zM58.6 6.9h2.0v2.0h-2.0zM31.9 113.0h2.0v2.0h-2.0zM76.2 142.0h2.0v2.0h-2.0zM139.1 30.2h2.0v2.0h-2.0zM82.2 99.6h2.0v2.0h-2.0zM20.7 93.1h2.0v2.0h-2.0zM1.1 12.3h2.0v2.0h-2.0zM92.3 39.2h2.0v2.0h-2.0zM78.3 48.8h2.0v2.0h-2.0zM146.7 15.1h2.0v2.0h-2.0zM121.1 57.9h2.0v2.0h-2.0zM121.6 66.3h2.0v2.0h-2.0zM100.8 48.7h2.0v2.0h-2.0zM34.7 62.0h2.0v2.0h-2.0zM3.7 3.9h2.0v2.0h-2.0zM100.0 109.6h2.0v2.0h-2.0zM120.0 74.5h2.0v2.0h-2.0zM15.1 138.1h2.0v2.0h-2.0zM150.9 25.1h2.0v2.0h-2.0zM18.4 74.4h2.0v2.0h-2.0zM139.6 61.7h2.0v2.0h-2.0zM0.7 105.6h2.0v2.0h-2.0zM7.2 100.6h2.0v2.0h-2.0zM13.4 143.7h2.0v2.0h-2.0zM145.3 0.9h2.0v2.0h-2.0zM10.3 100.8h2.0v2.0h-2.0zM107.4 83.5h2.0v2.0h-2.0zM59.0 69.3h2.0v2.0h-2.0zM46.1 110.0h2.0v2.0h-2.0zM38.8 53.3h2.0v2.0h-2.0zM8.8 35.7h2.0v2.0h-2.0zM88.3 91.1h2.0v2.0h-2.0zM133.4 84.2h2.0v2.0h-2.0zM33.1 34.0h2.0v2.0h-2.0zM29.7 90.3h2.0v2.0h-2.0zM97.0 108.4h2.0v2.0h-2.0zM20.8 115.7h2.0v2.0h-2.0zM135.8 18.2h2.0v2.0h-2.0zM89.8 141.1h2.0v2.0h-2.0zM140.2 37.8h2.0v2.0h-2.0zM147.4 42.0h2.0v2.0h-2.0zM12.9 132.3h2.0v2.0h-2.0zM36.8 33.0h2.0v2.0h-2.0zM136.1 49.6h2.0v2.0h-2.0zM141.0 112.2h2.0v2.0h-2.0zM23.4 144.3h2.0v2.0h-2.0zM136.7 136.2h2.0v2.0h-2.0zM136.6 39.6h2.0v2.0h-2.0zM30.3 137.5h2.0v2.0h-2.0zM60.2 51.4h2.0v2.0h-2.0zM86.9 3.7h2.0v2.0h-2.0zM131.6 51.2h2.0v2.0h-2.0zM25.6 48.9h2.0v2.0h-2.0zM17.2 47.2h2.0v2.0h-2.0zM50.5 43.3h2.0v2.0h-2.0zM66.1 114.4h2.0v2.0h-2.0zM72.9 17.9h2.0v2.0h-2.0zM25.7 126.3h2.0v2.0h-2.0zM56.7 53.9h2.0v2.0h-2.0zM82.3 71.4h2.0v2.0h-2.0zM74.9 67.3h2.0v2.0h-2.0zM17.3 129.1h2.0v2.0h-2.0zM39.3 11.7h2.0v2.0h-2.0zM81.6 125.0h2.0v2.0h-2.0zM127.7 130.7h2.0v2.0h-2.0zM114.0 67.3h2.0v2.0h-2.0zM125.4 41.8h2.0v2.0h-2.0zM100.0 4.3h2.0v2.0h-2.0zM31.8 106.6h2.0v2.0h-2.0zM93.6 114.2h2.0v2.0h-2.0zM146.4 32.3h2.0v2.0h-2.0zM78.8 99.7h2.0v2.0h-2.0zM20.6 108.6h2.0v2.0h-2.0zM89.7 60.3h2.0v2.0h-2.0zM93.3 73.8h2.0v2.0h-2.0zM79.0 73.2h2.0v2.0h-2.0zM118.6 44.4h2.0v2.0h-2.0zM128.2 10.8h2.0v2.0h-2.0zM30.1 142.6h2.0v2.0h-2.0zM68.7 84.3h2.0v2.0h-2.0zM122.8 100.0h2.0v2.0h-2.0zM0.2 65.5h2.0v2.0h-2.0zM73.8 6.6h2.0v2.0h-2.0zM119.3 47.5h2.0v2.0h-2.0zM44.3 93.2h2.0v2.0h-2.0zM51.8 9.6h2.0v2.0h-2.0zM83.5 54.2h2.0v2.0h-2.0zM81.0 51.8h2.0v2.0h-2.0zM1.0 5.6h2.0v2.0h-2.0zM128.6 86.5h2.0v2.0h-2.0zM8.7 137.2h2.0v2.0h-2.0zM105.5 92.0h2.0v2.0h-2.0zM46.1 18.4h2.0v2.0h-2.0zM59.8 130.8h2.0v2.0h-2.0zM114.7 102.3h2.0v2.0h-2.0zM64.8 99.9h2.0v2.0h-2.0zM53.8 75.7h2.0v2.0h-2.0zM113.0 121.4h2.0v2.0h-2.0zM71.6 143.4h2.0v2.0h-2.0zM133.6 87.4h2.0v2.0h-2.0zM131.6 131.7h2.0v2.0h-2.0zM24.9 123.3h2.0v2.0h-2.0zM31.2 97.3h2.0v2.0h-2.0zM136.6 98.7h2.0v2.0h-2.0zM57.1 83.5h2.0v2.0h-2.0zM78.0 42.6h2.0v2.0h-2.0zM29.3 108.9h2.0v2.0h-2.0zM79.0 55.6h2.0v2.0h-2.0zM88.9 66.9h2.0v2.0h-2.0zM98.0 112.0h2.0v2.0h-2.0zM99.2 86.4h2.0v2.0h-2.0zM128.8 4.7h2.0v2.0h-2.0zM93.5 18.7h2.0v2.0h-2.0zM79.3 38.4h2.0v2.0h-2.0zM1.8 84.2h2.0v2.0h-2.0zM116.4 17.2h2.0v2.0h-2.0zM82.2 128.0h2.0v2.0h-2.0zM149.8 144.8h2.0v2.0h-2.0zM34.0 118.1h2.0v2.0h-2.0zM115.6 25.2h2.0v2.0h-2.0zM147.6 67.9h2.0v2.0h-2.0zM7.0 104.8h2.0v2.0h-2.0zM84.7 45.2h2.0v2.0h-2.0zM52.9 131.8h2.0v2.0h-2.0zM75.5 22.9h2.0v2.0h-2.0zM35.7 96.0h2.0v2.0h-2.0zM93.9 122.5h2.0v2.0h-2.0zM26.0 93.4h2.0v2.0h-2.0zM64.3 3.6h2.0v2.0h-2.0zM13.5 37.2h2.0v2.0h-2.0zM34.2 132.0h2.0v2.0h-2.0zM144.7 39.9h2.0v2.0h-2.0zM61.7 89.7h2.0v2.0h-2.0zM17.2 34.9h2.0v2.0h-2.0zM123.5 142.2h2.0v2.0h-2.0zM71.0 104.1h2.0v2.0h-2.0zM89.4 9.2h2.0v2.0h-2.0zM10.3 38.6h2.0v2.0h-2.0zM4.1 41.9h2.0v2.0h-2.0zM124.2 106.5h2.0v2.0h-2.0zM58.0 37.5h2.0v2.0h-2.0zM23.6 81.5h2.0v2.0h-2.0zM48.4 86.3h2.0v2.0h-2.0zM58.8 143.3h2.0v2.0h-2.0zM103.1 29.1h2.0v2.0h-2.0zM70.0 98.3h2.0v2.0h-2.0zM122.6 21.4h2.0v2.0h-2.0zM56.2 105.1h2.0v2.0h-2.0zM70.1 14.4h2.0v2.0h-2.0zM57.3 73.9h2.0v2.0h-2.0zM107.3 44.4h2.0v2.0h-2.0zM111.3 87.0h2.0v2.0h-2.0zM11.1 88.2h2.0v2.0h-2.0zM92.5 55.9h2.0v2.0h-2.0zM140.4 116.8h2.0v2.0h-2.0zM15.8 26.5h2.0v2.0h-2.0zM105.7 26.3h2.0v2.0h-2.0zM56.3 100.9h2.0v2.0h-2.0zM143.2 118.1h2.0v2.0h-2.0zM46.7 95.4h2.0v2.0h-2.0zM74.1 112.0h2.0v2.0h-2.0zM95.1 1.1h2.0v2.0h-2.0zM128.2 45.1h2.0v2.0h-2.0zM20.6 60.0h2.0v2.0h-2.0zM14.4 11.0h2.0v2.0h-2.0zM37.3 48.1h2.0v2.0h-2.0zM124.1 55.6h2.0v2.0h-2.0zM51.7 26.3h2.0v2.0h-2.0zM94.3 77.5h2.0v2.0h-2.0zM38.0 135.9h2.0v2.0h-2.0zM51.9 147.3h2.0v2.0h-2.0zM60.4 1.6h2.0v2.0h-2.0zM7.2 67.7h2.0v2.0h-2.0zM66.6 148.7h2.0v2.0h-2.0zM129.3 127.9h2.0v2.0h-2.0zM103.7 86.2h2.0v2.0h-2.0zM46.1 29.5h2.0v2.0h-2.0zM16.0 145.5h2.0v2.0h-2.0zM51.2 22.2h2.0v2.0h-2.0zM50.2 124.2h2.0v2.0h-2.0zM19.5 22.1h2.0v2.0h-2.0zM81.2 32.2h2.0v2.0h-2.0zM150.6 16.1h2.0v2.0h-2.0zM20.7 2.5h2.0v2.0h-2.0zM66.3 128.0h2.0v2.0h-2.0zM42.6 42.5h2.0v2.0h-2.0zM120.5 11.6h2.0v2.0h-2.0zM41.3 92.9h2.0v2.0h-2.0zM36.2 56.1h2.0v2.0h-2.0zM99.4 38.1h2.0v2.0h-2.0zM133.3 62.1h2.0v2.0h-2.0zM66.9 143.0h2.0v2.0h-2.0zM146.0 114.1h2.0v2.0h-2.0zM36.4 111.7h2.0v2.0h-2.0zM103.4 3.4h2.0v2.0h-2.0zM3.7 65.1h2.0v2.0h-2.0zM12.7 41.7h2.0v2.0h-2.0zM137.2 140.1h2.0v2.0h-2.0zM56.3 95.1h2.0v2.0h-2.0zM124.8 59.1h2.0v2.0h-2.0zM68.6 94.6h2.0v2.0h-2.0zM7.9 76.6h2.0v2.0h-2.0zM75.8 27.3h2.0v2.0h-2.0zM37.6 122.8h2.0v2.0h-2.0zM76.2 89.4h2.0v2.0h-2.0zM46.5 145.8h2.0v2.0h-2.0zM31.4 81.3h2.0v2.0h-2.0zM136.4 93.2h2.0v2.0h-2.0zM66.4 110.0h2.0v2.0h-2.0zM4.7 38.1h2.0v2.0h-2.0zM117.3 30.0h2.0v2.0h-2.0zM140.6 143.5h2.0v2.0h-2.0zM98.5 104.4h2.0v2.0h-2.0zM143.4 126.9h2.0v2.0h-2.0zM107.3 113.7h2.0v2.0h-2.0zM5.0 46.6h2.0v2.0h-2.0zM37.5 14.1h2.0v2.0h-2.0zM11.6 138.6h2.0v2.0h-2.0zM94.9 60.2h2.0v2.0h-2.0zM41.9 37.2h2.0v2.0h-2.0zM109.4 67.9h2.0v2.0h-2.0zM89.5 125.6h2.0v2.0h-2.0zM142.1 78.9h2.0v2.0h-2.0zM109.4 75.7h2.0v2.0h-2.0zM128.4 96.9h2.0v2.0h-2.0zM52.9 35.4h2.0v2.0h-2.0zM56.7 112.6h2.0v2.0h-2.0zM113.6 6.4h2.0v2.0h-2.0zM148.1 55.7h2.0v2.0h-2.0zM41.1 31.7h2.0v2.0h-2.0zM121.6 87.1h2.0v2.0h-2.0zM43.6 123.2h2.0v2.0h-2.0zM1.4 28.1h2.0v2.0h-2.0zM98.3 63.3h2.0v2.0h-2.0zM138.6 95.6h2.0v2.0h-2.0zM39.9 74.8h2.0v2.0h-2.0zM106.8 123.3h2.0v2.0h-2.0zM104.0 118.9h2.0v2.0h-2.0zM106.1 128.7h2.0v2.0h-2.0zM140.8 50.1h2.0v2.0h-2.0zM79.5 10.8h2.0v2.0h-2.0zM95.9 15.1h2.0v2.0h-2.0zM58.3 3.9h2.0v2.0h-2.0zM129.1 55.0h2.0v2.0h-2.0zM104.1 103.4h2.0v2.0h-2.0zM36.6 77.3h2.0v2.0h-2.0zM90.1 72.6h2.0v2.0h-2.0zM29.9 67.8h2.0v2.0h-2.0zM68.3 55.9h2.0v2.0h-2.0zM9.8 143.0h2.0v2.0h-2.0zM45.9 22.3h2.0v2.0h-2.0zM6.1 133.7h2.0v2.0h-2.0zM128.1 121.4h2.0v2.0h-2.0zM20.0 40.4h2.0v2.0h-2.0zM68.6 87.4h2.0v2.0h-2.0zM90.0 88.1h2.0v2.0h-2.0zM104.3 40.4h2.0v2.0h-2.0zM47.5 82.2h2.0v2.0h-2.0zM34.7 135.6h2.0v2.0h-2.0zM34.5 41.3h2.0v2.0h-2.0zM103.1 109.1h2.0v2.0h-2.0zM109.4 59.5h2.0v2.0h-2.0zM99.1 52.4h2.0v2.0h-2.0zM120.4 144.6h2.0v2.0h-2.0zM95.9 38.5h2.0v2.0h-2.0zM112.6 99.1h2.0v2.0h-2.0zM137.5 112.7h2.0v2.0h-2.0zM145.9 120.2h2.0v2.0h-2.0zM54.3 115.3h2.0v2.0h-2.0zM85.7 118.4h2.0v2.0h-2.0zM83.9 68.7h2.0v2.0h-2.0zM110.5 16.0h2.0v2.0h-2.0zM141.3 122.4h2.0v2.0h-2.0zM59.0 107.6h2.0v2.0h-2.0zM113.0 28.8h2.0v2.0h-2.0zM9.0 119.9h2.0v2.0h-2.0zM109.8 34.8h2.0v2.0h-2.0zM66.3 26.4h2.0v2.0h-2.0zM36.4 139.3h2.0v2.0h-2.0zM121.0 103.6h2.0v2.0h-2.0zM17.2 118.1h2.0v2.0h-2.0zM99.6 60.4h2.0v2.0h-2.0zM7.5 26.7h2.0v2.0h-2.0zM60.7 137.2h2.0v2.0h-2.0zM67.4 130.9h2.0v2.0h-2.0zM74.5 10.8h2.0v2.0h-2.0zM74.2 76.8h2.0v2.0h-2.0zM88.8 97.6h2.0v2.0h-2.0zM1.7 88.5h2.0v2.0h-2.0zM107.5 17.8h2.0v2.0h-2.0zM123.4 13.3h2.0v2.0h-2.0zM59.3 114.6h2.0v2.0h-2.0zM133.4 137.4h2.0v2.0h-2.0zM4.2 116.3h2.0v2.0h-2.0zM122.6 27.1h2.0v2.0h-2.0zM109.0 145.6h2.0v2.0h-2.0zM109.0 22.1h2.0v2.0h-2.0zM85.7 103.2h2.0v2.0h-2.0zM40.9 70.6h2.0v2.0h-2.0zM84.5 61.2h2.0v2.0h-2.0zM55.9 40.5h2.0v2.0h-2.0zM45.8 7.8h2.0v2.0h-2.0zM100.6 136.0h2.0v2.0h-2.0zM142.2 69.1h2.0v2.0h-2.0zM123.0 48.6h2.0v2.0h-2.0zM124.8 134.8h2.0v2.0h-2.0zM115.9 36.3h2.0v2.0h-2.0zM65.6 121.6h2.0v2.0h-2.0zM140.7 129.5h2.0v2.0h-2.0zM146.9 83.5h2.0v2.0h-2.0zM88.4 121.8h2.0v2.0h-2.0zM16.3 108.1h2.0v2.0h-2.0zM124.4 131.4h2.0v2.0h-2.0zM32.8 93.2h2.0v2.0h-2.0zM26.9 84.8h2.0v2.0h-2.0zM10.6 146.8h2.0v2.0h-2.0zM61.9 65.7h2.0v2.0h-2.0zM96.1 50.1h2.0v2.0h-2.0zM60.7 95.7h2.0v2.0h-2.0zM20.1 64.8h2.0v2.0h-2.0zM85.9 9.7h2.0v2.0h-2.0zM137.5 1.7h2.0v2.0h-2.0zM27.2 71.7h2.0v2.0h-2.0zM106.5 76.9h2.0v2.0h-2.0zM120.1 114.9h2.0v2.0h-2.0zM44.3 59.6h2.0v2.0h-2.0zM114.3 55.7h2.0v2.0h-2.0zM52.9 80.0h2.0v2.0h-2.0zM144.7 44.3h2.0v2.0h-2.0zM70.4 49.6h2.0v2.0h-2.0zM116.6 96.3h2.0v2.0h-2.0zM126.3 22.1h2.0v2.0h-2.0zM17.9 13.5h2.0v2.0h-2.0zM0.2 41.8h2.0v2.0h-2.0zM22.2 126.4h2.0v2.0h-2.0zM126.5 47.7h2.0v2.0h-2.0zM58.8 46.6h2.0v2.0h-2.0zM105.1 72.7h2.0v2.0h-2.0zM53.5 118.5h2.0v2.0h-2.0zM6.6 91.4h2.0v2.0h-2.0zM7.2 115.2h2.0v2.0h-2.0zM94.1 126.1h2.0v2.0h-2.0zM56.7 133.6h2.0v2.0h-2.0zM43.8 14.8h2.0v2.0h-2.0zM1.6 59.3h2.0v2.0h-2.0zM33.2 38.0h2.0v2.0h-2.0zM58.6 12.7h2.0v2.0h-2.0zM148.1 49.5h2.0v2.0h-2.0zM141.7 89.9h2.0v2.0h-2.0zM145.8 19.2h2.0v2.0h-2.0zM143.9 34.3h2.0v2.0h-2.0zM129.2 21.6h2.0v2.0h-2.0zM127.6 102.9h2.0v2.0h-2.0zM24.6 1.6h2.0v2.0h-2.0zM98.0 126.2h2.0v2.0h-2.0zM65.9 20.7h2.0v2.0h-2.0zM2.0 76.7h2.0v2.0h-2.0zM102.5 75.2h2.0v2.0h-2.0zM47.0 121.0h2.0v2.0h-2.0zM82.6 14.2h2.0v2.0h-2.0zM48.5 72.1h2.0v2.0h-2.0zM79.4 3.8h2.0v2.0h-2.0zM120.5 24.5h2.0v2.0h-2.0zM85.2 134.2h2.0v2.0h-2.0zM93.7 87.0h2.0v2.0h-2.0zM20.5 50.1h2.0v2.0h-2.0zM23.5 34.1h2.0v2.0h-2.0zM16.1 63.2h2.0v2.0h-2.0zM69.1 5.2h2.0v2.0h-2.0zM112.7 114.9h2.0v2.0h-2.0zM49.9 92.5h2.0v2.0h-2.0zM97.2 76.2h2.0v2.0h-2.0zM118.0 64.7h2.0v2.0h-2.0zM109.9 127.9h2.0v2.0h-2.0zM44.1 39.7h2.0v2.0h-2.0zM99.8 148.5h2.0v2.0h-2.0zM117.3 72.2h2.0v2.0h-2.0zM143.1 94.8h2.0v2.0h-2.0zM9.2 131.5h2.0v2.0h-2.0zM126.7 79.0h2.0v2.0h-2.0zM21.7 104.5h2.0v2.0h-2.0zM150.6 45.8h2.0v2.0h-2.0zM9.3 56.9h2.0v2.0h-2.0zM121.9 62.4h2.0v2.0h-2.0zM113.5 132.9h2.0v2.0h-2.0zM0.5 81.3h2.0v2.0h-2.0zM123.2 71.3h2.0v2.0h-2.0zM81.8 46.0h2.0v2.0h-2.0zM143.8 131.2h2.0v2.0h-2.0zM149.4 119.9h2.0v2.0h-2.0zM148.3 21.5h2.0v2.0h-2.0zM109.2 79.8h2.0v2.0h-2.0zM24.4 65.7h2.0v2.0h-2.0zM13.1 127.9h2.0v2.0h-2.0zM38.6 87.9h2.0v2.0h-2.0zM145.7 88.8h2.0v2.0h-2.0zM61.6 123.7h2.0v2.0h-2.0zM74.1 47.2h2.0v2.0h-2.0zM75.8 128.3h2.0v2.0h-2.0zM80.3 147.0h2.0v2.0h-2.0zM31.7 148.3h2.0v2.0h-2.0zM62.6 74.2h2.0v2.0h-2.0zM25.0 138.8h2.0v2.0h-2.0zM6.1 120.8h2.0v2.0h-2.0zM63.5 134.3h2.0v2.0h-2.0zM21.7 47.0h2.0v2.0h-2.0zM142.3 9.0h2.0v2.0h-2.0zM85.2 129.8h2.0v2.0h-2.0zM61.8 14.6h2.0v2.0h-2.0zM19.0 99.2h2.0v2.0h-2.0zM149.7 90.1h2.0v2.0h-2.0zM127.5 32.0h2.0v2.0h-2.0zM109.7 148.8h2.0v2.0h-2.0zM122.1 128.7h2.0v2.0h-2.0zM30.0 145.7h2.0v2.0h-2.0zM46.6 43.3h2.0v2.0h-2.0zM34.5 23.5h2.0v2.0h-2.0zM36.5 73.4h2.0v2.0h-2.0zM29.2 45.1h2.0v2.0h-2.0zM67.9 41.7h2.0v2.0h-2.0zM143.2 107.9h2.0v2.0h-2.0zM140.2 84.6h2.0v2.0h-2.0zM1.1 36.4h2.0v2.0h-2.0zM113.0 47.5h2.0v2.0h-2.0zM139.3 7.4h2.0v2.0h-2.0zM97.3 56.1h2.0v2.0h-2.0zM80.3 142.0h2.0v2.0h-2.0zM25.2 8.6h2.0v2.0h-2.0zM88.3 36.4h2.0v2.0h-2.0zM146.9 93.4h2.0v2.0h-2.0zM124.3 120.2h2.0v2.0h-2.0zM75.0 60.1h2.0v2.0h-2.0zM75.4 44.3h2.0v2.0h-2.0zM103.4 133.9h2.0v2.0h-2.0zM62.3 145.6h2.0v2.0h-2.0zM26.1 129.4h2.0v2.0h-2.0zM87.8 6.7h2.0v2.0h-2.0zM86.7 138.8h2.0v2.0h-2.0zM145.3 105.6h2.0v2.0h-2.0zM81.4 90.4h2.0v2.0h-2.0zM43.7 87.2h2.0v2.0h-2.0zM103.8 68.0h2.0v2.0h-2.0zM38.7 84.3h2.0v2.0h-2.0zM70.8 44.2h2.0v2.0h-2.0zM141.7 20.9h2.0v2.0h-2.0zM82.3 133.3h2.0v2.0h-2.0zM14.6 0.5h2.0v2.0h-2.0zM54.8 109.2h2.0v2.0h-2.0zM62.6 45.0h2.0v2.0h-2.0zM89.3 129.4h2.0v2.0h-2.0zM29.9 16.9h2.0v2.0h-2.0zM6.6 87.1h2.0v2.0h-2.0zM40.6 50.0h2.0v2.0h-2.0zM75.5 133.7h2.0v2.0h-2.0zM17.4 135.6h2.0v2.0h-2.0zM142.3 99.0h2.0v2.0h-2.0zM74.1 119.4h2.0v2.0h-2.0zM131.8 1.0h2.0v2.0h-2.0zM51.0 121.3h2.0v2.0h-2.0zM26.0 30.9h2.0v2.0h-2.0zM131.2 93.1h2.0v2.0h-2.0zM42.9 1.5h2.0v2.0h-2.0zM22.5 131.8h2.0v2.0h-2.0zM53.3 50.1h2.0v2.0h-2.0zM71.1 68.0h2.0v2.0h-2.0zM3.9 69.8h2.0v2.0h-2.0zM118.6 79.8h2.0v2.0h-2.0zM18.6 70.2h2.0v2.0h-2.0zM59.7 86.1h2.0v2.0h-2.0zM6.4 10.2h2.0v2.0h-2.0zM25.1 21.5h2.0v2.0h-2.0zM11.3 9.3h2.0v2.0h-2.0zM102.8 82.9h2.0v2.0h-2.0zM64.9 64.8h2.0v2.0h-2.0zM6.5 21.4h2.0v2.0h-2.0zM24.8 103.5h2.0v2.0h-2.0zM135.0 34.0h2.0v2.0h-2.0zM40.2 16.9h2.0v2.0h-2.0zM130.6 32.9h2.0v2.0h-2.0zM143.1 47.0h2.0v2.0h-2.0zM81.2 108.0h2.0v2.0h-2.0zM132.0 119.4h2.0v2.0h-2.0zM6.1 50.0h2.0v2.0h-2.0zM18.8 37.5h2.0v2.0h-2.0zM75.7 83.6h2.0v2.0h-2.0zM21.9 15.9h2.0v2.0h-2.0zM132.5 23.2h2.0v2.0h-2.0zM51.3 17.8h2.0v2.0h-2.0zM36.1 51.5h2.0v2.0h-2.0zM62.1 107.1h2.0v2.0h-2.0zM44.6 118.0h2.0v2.0h-2.0zM21.0 118.7h2.0v2.0h-2.0zM69.4 63.3h2.0v2.0h-2.0zM111.5 9.3h2.0v2.0h-2.0zM4.9 146.9h2.0v2.0h-2.0zM69.7 136.6h2.0v2.0h-2.0zM72.9 71.5h2.0v2.0h-2.0zM10.0 91.7h2.0v2.0h-2.0zM52.7 104.8h2.0v2.0h-2.0zM40.4 148.7h2.0v2.0h-2.0zM56.3 119.7h2.0v2.0h-2.0zM44.6 78.4h2.0v2.0h-2.0zM72.4 3.3h2.0v2.0h-2.0zM33.7 75.4h2.0v2.0h-2.0zM71.2 81.4h2.0v2.0h-2.0zM105.4 49.0h2.0v2.0h-2.0zM19.9 54.0h2.0v2.0h-2.0zM118.5 138.1h2.0v2.0h-2.0zM85.4 23.8h2.0v2.0h-2.0zM131.1 99.3h2.0v2.0h-2.0zM137.1 46.4h2.0v2.0h-2.0zM67.1 104.2h2.0v2.0h-2.0zM86.2 12.9h2.0v2.0h-2.0zM50.3 3.0h2.0v2.0h-2.0zM79.0 134.5h2.0v2.0h-2.0zM37.2 131.6h2.0v2.0h-2.0zM75.2 137.0h2.0v2.0h-2.0zM103.0 55.7h2.0v2.0h-2.0zM121.8 80.3h2.0v2.0h-2.0zM34.7 70.3h2.0v2.0h-2.0zM83.4 20.6h2.0v2.0h-2.0zM150.0 111.7h2.0v2.0h-2.0zM109.6 94.0h2.0v2.0h-2.0zM0.1 94.8h2.0v2.0h-2.0zM39.7 141.4h2.0v2.0h-2.0zM21.7 68.5h2.0v2.0h-2.0zM117.0 146.1h2.0v2.0h-2.0zM138.1 43.0h2.0v2.0h-2.0zM119.1 8.5h2.0v2.0h-2.0zM39.0 2.8h2.0v2.0h-2.0zM-0.7 70.1h2.0v2.0h-2.0zM129.3 -1.3h2.0v2.0h-2.0zM76.3 -0.2h2.0v2.0h-2.0zM21.7 -1.3h2.0v2.0h-2.0zM-0.4 137.1h2.0v2.0h-2.0zM103.3 -1.2h2.0v2.0h-2.0zM26.9 -1.1h2.0v2.0h-2.0zM58.9 -1.9h2.0v2.0h-2.0zM141.8 -0.5h2.0v2.0h-2.0zM119.9 -1.3h2.0v2.0h-2.0zM113.8 -1.2h2.0v2.0h-2.0zM123.4 -2.1h2.0v2.0h-2.0zM-1.7 124.6h2.0v2.0h-2.0zM-0.1 25.1h2.0v2.0h-2.0zM-1.2 144.8h2.0v2.0h-2.0zM51.9 -1.7h2.0v2.0h-2.0zM66.6 -0.3h2.0v2.0h-2.0zM-0.4 16.1h2.0v2.0h-2.0zM10.6 -2.2h2.0v2.0h-2.0zM99.8 -0.5h2.0v2.0h-2.0zM-0.4 45.8h2.0v2.0h-2.0zM-1.6 119.9h2.0v2.0h-2.0zM80.3 -2.0h2.0v2.0h-2.0zM31.7 -0.7h2.0v2.0h-2.0zM-1.3 90.1h2.0v2.0h-2.0zM109.7 -0.2h2.0v2.0h-2.0zM4.9 -2.1h2.0v2.0h-2.0zM40.4 -0.3h2.0v2.0h-2.0zM-1.0 111.7h2.0v2.0h-2.0z" fill="#8acc8a"/>
</pattern>
<pattern id="sparse" width="137" height="131" patternUnits="userSpaceOnUse">
<rect width="137" height="131" fill="#2a2a2a"/>
<path d="M56.6 51.1h1.6v1.6h-1.6zM69.1 61.4h1.6v1.6h-1.6zM72.5 69.8h1.6v1.6h-1.6zM108.0 116.9h1.6v1.6h-1.6zM30.7 2.9h1.6v1.6h-1.6zM41.2 4.2h1.6v1.6h-1.6zM109.1 81.3h1.6v1.6h-1.6zM39.1 25.1h1.6v1.6h-1.6zM119.0 109.5h1.6v1.6h-1.6zM93.7 90.6h1.6v1.6h-1.6zM102.0 59.6h1.6v1.6h-1.6zM54.4 72.4h1.6v1.6h-1.6zM120.6 129.9h1.6v1.6h-1.6zM125.6 109.4h1.6v1.6h-1.6zM10.2 32.3h1.6v1.6h-1.6zM133.0 71.2h1.6v1.6h-1.6zM70.5 40.6h1.6v1.6h-1.6zM118.1 67.7h1.6v1.6h-1.6zM135.7 9.9h1.6v1.6h-1.6zM136.1 1.8h1.6v1.6h-1.6zM20.3 51.0h1.6v1.6h-1.6zM87.6 14.5h1.6v1.6h-1.6zM77.0 123.1h1.6v1.6h-1.6zM59.7 99.9h1.6v1.6h-1.6zM81.1 76.3h1.6v1.6h-1.6zM23.7 60.8h1.6v1.6h-1.6zM123.3 88.3h1.6v1.6h-1.6zM29.7 58.6h1.6v1.6h-1.6zM74.5 44.1h1.6v1.6h-1.6zM79.2 82.7h1.6v1.6h-1.6zM2.4 28.8h1.6v1.6h-1.6zM90.0 28.1h1.6v1.6h-1.6zM10.0 99.8h1.6v1.6h-1.6zM45.7 125.5h1.6v1.6h-1.6zM76.6 13.3h1.6v1.6h-1.6zM87.2 34.4h1.6v1.6h-1.6zM111.6 94.9h1.6v1.6h-1.6zM103.9 7.5h1.6v1.6h-1.6zM4.7 104.5h1.6v1.6h-1.6zM19.2 26.4h1.6v1.6h-1.6zM4.1 21.4h1.6v1.6h-1.6zM64.9 125.5h1.6v1.6h-1.6zM44.0 34.0h1.6v1.6h-1.6zM113.4 24.2h1.6v1.6h-1.6zM87.0 80.6h1.6v1.6h-1.6zM128.1 5.7h1.6v1.6h-1.6zM77.2 50.2h1.6v1.6h-1.6zM112.8 33.1h1.6v1.6h-1.6zM98.0 24.3h1.6v1.6h-1.6zM67.8 126.9h1.6v1.6h-1.6zM32.9 36.5h1.6v1.6h-1.6zM125.7 88.4h1.6v1.6h-1.6zM9.0 24.4h1.6v1.6h-1.6zM32.5 38.0h1.6v1.6h-1.6zM115.7 91.8h1.6v1.6h-1.6zM134.2 87.7h1.6v1.6h-1.6zM86.0 50.2h1.6v1.6h-1.6zM98.3 64.6h1.6v1.6h-1.6zM8.1 64.5h1.6v1.6h-1.6zM52.6 69.6h1.6v1.6h-1.6zM6.7 3.7h1.6v1.6h-1.6zM134.7 48.6h1.6v1.6h-1.6zM45.2 19.4h1.6v1.6h-1.6zM81.2 119.8h1.6v1.6h-1.6zM24.7 65.5h1.6v1.6h-1.6zM68.5 100.3h1.6v1.6h-1.6zM77.4 31.3h1.6v1.6h-1.6zM26.0 94.9h1.6v1.6h-1.6zM10.7 113.3h1.6v1.6h-1.6zM4.6 24.8h1.6v1.6h-1.6zM64.1 110.6h1.6v1.6h-1.6zM84.9 97.7h1.6v1.6h-1.6zM104.3 94.6h1.6v1.6h-1.6zM7.1 108.1h1.6v1.6h-1.6zM20.2 21.3h1.6v1.6h-1.6zM5.1 3.7h1.6v1.6h-1.6zM120.1 49.9h1.6v1.6h-1.6zM11.9 6.1h1.6v1.6h-1.6zM116.0 78.8h1.6v1.6h-1.6zM125.5 4.9h1.6v1.6h-1.6zM15.4 37.6h1.6v1.6h-1.6zM26.2 14.7h1.6v1.6h-1.6zM27.5 83.9h1.6v1.6h-1.6zM23.0 22.1h1.6v1.6h-1.6zM73.4 49.2h1.6v1.6h-1.6zM20.5 74.4h1.6v1.6h-1.6zM69.6 50.8h1.6v1.6h-1.6zM65.0 5.2h1.6v1.6h-1.6zM84.3 25.3h1.6v1.6h-1.6zM46.0 1.2h1.6v1.6h-1.6zM121.6 77.0h1.6v1.6h-1.6zM53.7 71.0h1.6v1.6h-1.6zM128.8 17.3h1.6v1.6h-1.6zM52.5 92.8h1.6v1.6h-1.6zM51.0 92.6h1.6v1.6h-1.6zM124.4 5.4h1.6v1.6h-1.6zM39.0 38.4h1.6v1.6h-1.6zM102.8 102.7h1.6v1.6h-1.6zM95.8 121.1h1.6v1.6h-1.6zM25.4 51.5h1.6v1.6h-1.6zM116.8 100.3h1.6v1.6h-1.6zM15.4 128.3h1.6v1.6h-1.6zM101.4 113.4h1.6v1.6h-1.6zM49.6 79.3h1.6v1.6h-1.6zM131.3 117.6h1.6v1.6h-1.6zM79.1 116.6h1.6v1.6h-1.6zM136.9 109.9h1.6v1.6h-1.6zM89.9 125.8h1.6v1.6h-1.6zM19.7 52.9h1.6v1.6h-1.6zM77.3 17.2h1.6v1.6h-1.6zM107.0 8.1h1.6v1.6h-1.6zM86.1 36.6h1.6v1.6h-1.6zM44.2 79.5h1.6v1.6h-1.6zM26.2 58.6h1.6v1.6h-1.6zM117.4 129.3h1.6v1.6h-1.6zM36.0 47.9h1.6v1.6h-1.6zM95.0 24.9h1.6v1.6h-1.6zM116.3 26.0h1.6v1.6h-1.6zM76.3 44.5h1.6v1.6h-1.6zM0.1 0.1h1.6v1.6h-1.6zM0.3 43.0h1.6v1.6h-1.6zM37.7 129.9h1.6v1.6h-1.6zM87.4 8.5h1.6v1.6h-1.6zM98.1 30.5h1.6v1.6h-1.6zM66.0 94.7h1.6v1.6h-1.6zM117.4 122.5h1.6v1.6h-1.6zM57.7 41.6h1.6v1.6h-1.6zM54.5 41.0h1.6v1.6h-1.6zM101.6 60.7h1.6v1.6h-1.6zM93.9 19.9h1.6v1.6h-1.6zM107.2 126.6h1.6v1.6h-1.6zM27.8 80.8h1.6v1.6h-1.6zM22.2 4.6h1.6v1.6h-1.6zM56.7 24.0h1.6v1.6h-1.6zM100.1 75.0h1.6v1.6h-1.6zM92.4 126.8h1.6v1.6h-1.6zM8.0 12.9h1.6v1.6h-1.6zM4.9 60.2h1.6v1.6h-1.6zM113.0 89.6h1.6v1.6h-1.6zM75.1 112.2h1.6v1.6h-1.6zM51.0 14.8h1.6v1.6h-1.6zM87.9 3.4h1.6v1.6h-1.6zM31.4 3.9h1.6v1.6h-1.6zM22.1 8.4h1.6v1.6h-1.6zM72.8 16.8h1.6v1.6h-1.6zM82.7 108.0h1.6v1.6h-1.6zM47.2 15.8h1.6v1.6h-1.6zM92.0 95.4h1.6v1.6h-1.6zM121.1 72.6h1.6v1.6h-1.6zM79.7 113.1h1.6v1.6h-1.6zM92.8 127.7h1.6v1.6h-1.6zM39.3 101.4h1.6v1.6h-1.6zM86.7 61.4h1.6v1.6h-1.6zM1.5 62.4h1.6v1.6h-1.6zM36.1 78.8h1.6v1.6h-1.6zM69.8 66.9h1.6v1.6h-1.6zM8.1 17.2h1.6v1.6h-1.6zM83.2 89.3h1.6v1.6h-1.6zM135.7 103.8h1.6v1.6h-1.6zM39.7 59.7h1.6v1.6h-1.6zM69.3 105.3h1.6v1.6h-1.6zM54.0 120.6h1.6v1.6h-1.6zM66.3 52.1h1.6v1.6h-1.6zM65.7 46.8h1.6v1.6h-1.6zM136.9 6.1h1.6v1.6h-1.6zM54.8 10.4h1.6v1.6h-1.6zM92.9 19.7h1.6v1.6h-1.6zM20.4 55.5h1.6v1.6h-1.6zM82.5 100.0h1.6v1.6h-1.6zM60.9 38.7h1.6v1.6h-1.6zM50.4 116.4h1.6v1.6h-1.6zM29.2 1.5h1.6v1.6h-1.6zM121.4 63.3h1.6v1.6h-1.6zM18.1 17.8h1.6v1.6h-1.6zM122.0 98.1h1.6v1.6h-1.6zM8.8 88.4h1.6v1.6h-1.6zM29.3 58.4h1.6v1.6h-1.6zM82.9 6.7h1.6v1.6h-1.6zM128.2 43.9h1.6v1.6h-1.6zM19.7 102.2h1.6v1.6h-1.6zM15.0 4.9h1.6v1.6h-1.6zM89.3 61.6h1.6v1.6h-1.6zM123.4 103.6h1.6v1.6h-1.6zM28.3 5.9h1.6v1.6h-1.6zM82.7 61.6h1.6v1.6h-1.6zM41.3 120.1h1.6v1.6h-1.6zM28.6 84.3h1.6v1.6h-1.6zM10.1 121.0h1.6v1.6h-1.6zM130.0 81.0h1.6v1.6h-1.6zM43.9 94.8h1.6v1.6h-1.6zM123.8 104.1h1.6v1.6h-1.6zM5.6 66.0h1.6v1.6h-1.6zM19.2 71.6h1.6v1.6h-1.6zM130.2 113.3h1.6v1.6h-1.6zM34.1 72.3h1.6v1.6h-1.6zM43.5 22.1h1.6v1.6h-1.6zM101.9 99.5h1.6v1.6h-1.6zM46.1 55.0h1.6v1.6h-1.6zM95.4 95.3h1.6v1.6h-1.6zM63.5 15.5h1.6v1.6h-1.6zM13.1 22.2h1.6v1.6h-1.6zM113.2 65.0h1.6v1.6h-1.6zM88.3 47.8h1.6v1.6h-1.6zM50.5 23.1h1.6v1.6h-1.6zM133.5 79.3h1.6v1.6h-1.6zM17.6 92.0h1.6v1.6h-1.6zM81.9 80.3h1.6v1.6h-1.6zM105.5 79.7h1.6v1.6h-1.6zM120.1 127.0h1.6v1.6h-1.6zM55.7 84.9h1.6v1.6h-1.6zM51.3 53.8h1.6v1.6h-1.6zM50.2 84.8h1.6v1.6h-1.6zM48.3 46.1h1.6v1.6h-1.6zM116.0 104.8h1.6v1.6h-1.6zM92.6 110.5h1.6v1.6h-1.6zM52.9 84.2h1.6v1.6h-1.6zM34.4 41.3h1.6v1.6h-1.6zM13.8 104.6h1.6v1.6h-1.6zM126.2 39.7h1.6v1.6h-1.6zM51.8 15.3h1.6v1.6h-1.6zM19.5 83.6h1.6v1.6h-1.6zM122.2 11.0h1.6v1.6h-1.6zM34.9 99.4h1.6v1.6h-1.6zM30.9 115.0h1.6v1.6h-1.6zM48.3 62.0h1.6v1.6h-1.6zM27.6 38.1h1.6v1.6h-1.6zM58.2 36.4h1.6v1.6h-1.6zM99.9 4.0h1.6v1.6h-1.6zM87.5 105.1h1.6v1.6h-1.6zM44.7 25.1h1.6v1.6h-1.6zM16.4 10.1h1.6v1.6h-1.6zM108.5 79.0h1.6v1.6h-1.6zM2.1 59.4h1.6v1.6h-1.6zM82.0 41.8h1.6v1.6h-1.6zM4.8 55.2h1.6v1.6h-1.6zM48.4 127.4h1.6v1.6h-1.6zM49.3 120.9h1.6v1.6h-1.6zM118.9 75.2h1.6v1.6h-1.6zM17.3 105.8h1.6v1.6h-1.6zM12.4 73.0h1.6v1.6h-1.6zM13.3 12.1h1.6v1.6h-1.6zM56.2 20.5h1.6v1.6h-1.6zM135.9 75.7h1.6v1.6h-1.6zM122.9 125.3h1.6v1.6h-1.6zM103.8 84.6h1.6v1.6h-1.6zM64.8 101.9h1.6v1.6h-1.6zM91.7 20.7h1.6v1.6h-1.6zM72.6 54.2h1.6v1.6h-1.6zM70.6 93.4h1.6v1.6h-1.6zM94.4 74.6h1.6v1.6h-1.6zM108.1 108.1h1.6v1.6h-1.6zM12.7 19.0h1.6v1.6h-1.6zM6.5 21.0h1.6v1.6h-1.6zM131.4 40.6h1.6v1.6h-1.6zM60.1 61.0h1.6v1.6h-1.6zM77.3 36.6h1.6v1.6h-1.6zM106.7 43.4h1.6v1.6h-1.6zM115.8 105.3h1.6v1.6h-1.6zM0.2 71.7h1.6v1.6h-1.6zM12.8 115.8h1.6v1.6h-1.6zM9.5 35.0h1.6v1.6h-1.6zM105.3 77.4h1.6v1.6h-1.6zM91.4 54.1h1.6v1.6h-1.6zM71.3 26.6h1.6v1.6h-1.6zM63.3 33.7h1.6v1.6h-1.6zM92.5 14.0h1.6v1.6h-1.6zM18.8 25.9h1.6v1.6h-1.6zM73.0 76.2h1.6v1.6h-1.6zM0.4 129.3h1.6v1.6h-1.6zM114.4 49.8h1.6v1.6h-1.6zM21.8 108.2h1.6v1.6h-1.6zM133.8 23.3h1.6v1.6h-1.6zM103.6 107.2h1.6v1.6h-1.6zM128.4 27.3h1.6v1.6h-1.6zM16.5 21.6h1.6v1.6h-1.6zM31.7 117.9h1.6v1.6h-1.6zM124.7 62.1h1.6v1.6h-1.6zM17.5 46.2h1.6v1.6h-1.6zM33.0 84.9h1.6v1.6h-1.6zM98.6 101.7h1.6v1.6h-1.6zM59.9 59.8h1.6v1.6h-1.6zM64.1 48.5h1.6v1.6h-1.6zM62.3 89.8h1.6v1.6h-1.6zM97.4 42.8h1.6v1.6h-1.6zM77.7 19.0h1.6v1.6h-1.6zM6.2 50.7h1.6v1.6h-1.6zM49.2 4.3h1.6v1.6h-1.6zM10.9 55.8h1.6v1.6h-1.6zM129.1 109.7h1.6v1.6h-1.6zM4.1 41.5h1.6v1.6h-1.6zM50.5 40.8h1.6v1.6h-1.6zM18.8 77.3h1.6v1.6h-1.6zM115.0 50.0h1.6v1.6h-1.6zM24.2 13.8h1.6v1.6h-1.6zM2.1 100.3h1.6v1.6h-1.6zM31.6 94.8h1.6v1.6h-1.6zM108.3 10.9h1.6v1.6h-1.6zM25.9 41.3h1.6v1.6h-1.6zM105.3 96.5h1.6v1.6h-1.6zM41.5 59.2h1.6v1.6h-1.6zM48.6 61.8h1.6v1.6h-1.6zM108.7 34.3h1.6v1.6h-1.6zM111.0 120.5h1.6v1.6h-1.6zM82.3 125.7h1.6v1.6h-1.6zM128.5 22.4h1.6v1.6h-1.6zM135.8 26.3h1.6v1.6h-1.6zM110.2 15.9h1.6v1.6h-1.6zM41.5 57.9h1.6v1.6h-1.6zM115.0 89.2h1.6v1.6h-1.6zM27.9 117.6h1.6v1.6h-1.6zM118.6 66.8h1.6v1.6h-1.6zM6.9 37.4h1.6v1.6h-1.6zM40.1 54.9h1.6v1.6h-1.6zM129.1 78.0h1.6v1.6h-1.6zM112.3 9.3h1.6v1.6h-1.6zM33.6 95.8h1.6v1.6h-1.6zM46.6 29.8h1.6v1.6h-1.6zM8.6 6.7h1.6v1.6h-1.6zM56.5 71.6h1.6v1.6h-1.6zM54.8 74.0h1.6v1.6h-1.6zM39.9 2.2h1.6v1.6h-1.6zM92.4 44.0h1.6v1.6h-1.6zM67.3 49.5h1.6v1.6h-1.6zM37.0 6.8h1.6v1.6h-1.6zM40.6 39.0h1.6v1.6h-1.6zM15.7 3.9h1.6v1.6h-1.6zM65.9 2.6h1.6v1.6h-1.6zM120.4 47.2h1.6v1.6h-1.6zM60.8 68.9h1.6v1.6h-1.6zM3.3 13.3h1.6v1.6h-1.6zM107.6 72.9h1.6v1.6h-1.6zM67.6 45.0h1.6v1.6h-1.6zM102.9 65.9h1.6v1.6h-1.6zM108.5 109.5h1.6v1.6h-1.6zM122.5 95.1h1.6v1.6h-1.6zM92.3 60.5h1.6v1.6h-1.6zM73.1 75.9h1.6v1.6h-1.6zM72.0 107.3h1.6v1.6h-1.6zM117.6 6.8h1.6v1.6h-1.6zM103.0 80.7h1.6v1.6h-1.6zM82.0 119.0h1.6v1.6h-1.6zM6.8 62.2h1.6v1.6h-1.6zM51.4 124.2h1.6v1.6h-1.6zM22.6 73.8h1.6v1.6h-1.6zM19.8 98.8h1.6v1.6h-1.6zM67.0 96.3h1.6v1.6h-1.6zM42.1 115.7h1.6v1.6h-1.6zM1.0 29.4h1.6v1.6h-1.6zM100.5 115.1h1.6v1.6h-1.6zM106.5 36.0h1.6v1.6h-1.6zM11.1 92.9h1.6v1.6h-1.6zM100.2 7.9h1.6v1.6h-1.6zM128.1 69.1h1.6v1.6h-1.6zM4.6 62.8h1.6v1.6h-1.6zM46.3 13.7h1.6v1.6h-1.6zM121.3 122.4h1.6v1.6h-1.6zM17.0 58.4h1.6v1.6h-1.6zM37.5 88.1h1.6v1.6h-1.6zM15.0 43.7h1.6v1.6h-1.6zM56.2 61.9h1.6v1.6h-1.6zM59.6 78.1h1.6v1.6h-1.6zM128.8 122.0h1.6v1.6h-1.6zM124.3 108.6h1.6v1.6h-1.6zM31.3 32.0h1.6v1.6h-1.6zM63.0 84.3h1.6v1.6h-1.6zM83.1 45.8h1.6v1.6h-1.6zM135.9 40.9h1.6v1.6h-1.6zM2.7 11.9h1.6v1.6h-1.6zM28.7 95.7h1.6v1.6h-1.6zM115.2 5.5h1.6v1.6h-1.6zM32.5 31.8h1.6v1.6h-1.6zM107.8 117.6h1.6v1.6h-1.6zM36.1 13.4h1.6v1.6h-1.6zM132.5 127.3h1.6v1.6h-1.6zM98.2 61.9h1.6v1.6h-1.6zM102.3 100.5h1.6v1.6h-1.6zM69.8 35.5h1.6v1.6h-1.6zM71.9 86.8h1.6v1.6h-1.6zM44.4 83.7h1.6v1.6h-1.6zM20.1 127.2h1.6v1.6h-1.6zM29.0 29.6h1.6v1.6h-1.6zM131.6 124.5h1.6v1.6h-1.6zM126.8 110.2h1.6v1.6h-1.6zM116.3 107.6h1.6v1.6h-1.6zM77.6 9.7h1.6v1.6h-1.6zM100.2 109.5h1.6v1.6h-1.6zM114.8 5.7h1.6v1.6h-1.6zM8.4 95.7h1.6v1.6h-1.6zM66.8 117.1h1.6v1.6h-1.6zM135.7 58.5h1.6v1.6h-1.6zM92.5 87.1h1.6v1.6h-1.6zM95.0 48.2h1.6v1.6h-1.6zM87.6 8.9h1.6v1.6h-1.6zM123.3 94.8h1.6v1.6h-1.6zM110.0 60.6h1.6v1.6h-1.6zM28.1 59.1h1.6v1.6h-1.6zM93.2 71.8h1.6v1.6h-1.6zM14.9 0.5h1.6v1.6h-1.6zM120.6 -1.1h1.6v1.6h-1.6zM-1.3 9.9h1.6v1.6h-1.6zM-0.9 1.8h1.6v1.6h-1.6zM-2.3 48.6h1.6v1.6h-1.6zM-0.1 109.9h1.6v1.6h-1.6zM117.4 -1.7h1.6v1.6h-1.6zM37.7 -1.1h1.6v1.6h-1.6zM-1.3 103.8h1.6v1.6h-1.6zM-0.1 6.1h1.6v1.6h-1.6zM-1.1 75.7h1.6v1.6h-1.6zM0.4 -1.7h1.6v1.6h-1.6zM-1.2 26.3h1.6v1.6h-1.6zM-1.1 40.9h1.6v1.6h-1.6zM-1.3 58.5h1.6v1.6h-1.6z" fill="#707070"/>
<path d="M85.3 97.2h2.0v2.0h-2.0zM108.9 123.5h2.0v2.0h-2.0zM101.4 120.8h2.0v2.0h-2.0zM4.0 61.0h2.0v2.0h-2.0zM129.2 85.0h2.0v2.0h-2.0zM123.4 14.8h2.0v2.0h-2.0zM64.3 32.3h2.0v2.0h-2.0zM74.5 75.2h2.0v2.0h-2.0zM1.8 28.4h2.0v2.0h-2.0zM38.3 120.0h2.0v2.0h-2.0zM104.9 20.9h2.0v2.0h-2.0zM109.2 18.2h2.0v2.0h-2.0zM84.6 16.6h2.0v2.0h-2.0zM0.2 114.2h2.0v2.0h-2.0zM28.7 28.2h2.0v2.0h-2.0zM39.6 126.0h2.0v2.0h-2.0zM73.9 88.8h2.0v2.0h-2.0zM28.1 123.3h2.0v2.0h-2.0zM94.6 126.6h2.0v2.0h-2.0zM122.4 39.1h2.0v2.0h-2.0zM49.5 21.7h2.0v2.0h-2.0zM20.0 8.5h2.0v2.0h-2.0zM41.3 79.0h2.0v2.0h-2.0zM0.5 88.8h2.0v2.0h-2.0zM46.3 40.6h2.0v2.0h-2.0zM112.1 63.0h2.0v2.0h-2.0zM43.3 63.0h2.0v2.0h-2.0zM96.5 7.5h2.0v2.0h-2.0zM133.6 3.0h2.0v2.0h-2.0zM102.7 110.7h2.0v2.0h-2.0zM2.5 103.2h2.0v2.0h-2.0zM50.2 75.8h2.0v2.0h-2.0zM1.2 6.1h2.0v2.0h-2.0zM26.9 99.0h2.0v2.0h-2.0zM127.4 123.4h2.0v2.0h-2.0zM47.2 46.5h2.0v2.0h-2.0zM71.9 101.6h2.0v2.0h-2.0zM14.8 98.0h2.0v2.0h-2.0zM109.2 112.6h2.0v2.0h-2.0zM5.0 123.9h2.0v2.0h-2.0zM12.5 44.6h2.0v2.0h-2.0zM83.7 120.3h2.0v2.0h-2.0zM46.6 121.1h2.0v2.0h-2.0zM74.7 40.9h2.0v2.0h-2.0zM43.4 23.2h2.0v2.0h-2.0zM10.7 19.5h2.0v2.0h-2.0zM135.2 69.9h2.0v2.0h-2.0zM55.6 31.1h2.0v2.0h-2.0zM81.4 108.2h2.0v2.0h-2.0zM62.4 55.3h2.0v2.0h-2.0zM7.6 120.0h2.0v2.0h-2.0zM114.9 17.1h2.0v2.0h-2.0zM86.4 103.2h2.0v2.0h-2.0zM14.6 56.9h2.0v2.0h-2.0zM20.4 110.7h2.0v2.0h-2.0zM40.4 59.4h2.0v2.0h-2.0zM133.7 59.4h2.0v2.0h-2.0zM66.9 95.6h2.0v2.0h-2.0zM65.6 38.1h2.0v2.0h-2.0zM55.3 19.2h2.0v2.0h-2.0zM51.6 129.5h2.0v2.0h-2.0zM68.4 44.3h2.0v2.0h-2.0zM12.2 35.7h2.0v2.0h-2.0zM49.5 103.0h2.0v2.0h-2.0zM106.2 91.0h2.0v2.0h-2.0zM91.0 99.5h2.0v2.0h-2.0zM49.8 92.3h2.0v2.0h-2.0zM38.5 63.6h2.0v2.0h-2.0zM89.0 76.1h2.0v2.0h-2.0zM34.3 88.0h2.0v2.0h-2.0zM63.4 107.0h2.0v2.0h-2.0zM47.7 84.4h2.0v2.0h-2.0zM48.0 110.4h2.0v2.0h-2.0zM119.2 90.2h2.0v2.0h-2.0zM133.7 125.3h2.0v2.0h-2.0zM71.0 69.3h2.0v2.0h-2.0zM128.4 62.5h2.0v2.0h-2.0zM94.7 94.3h2.0v2.0h-2.0zM100.1 22.5h2.0v2.0h-2.0zM106.9 76.1h2.0v2.0h-2.0zM91.2 55.1h2.0v2.0h-2.0zM3.8 21.0h2.0v2.0h-2.0zM60.4 85.2h2.0v2.0h-2.0zM30.0 89.9h2.0v2.0h-2.0zM86.4 5.5h2.0v2.0h-2.0zM26.5 4.7h2.0v2.0h-2.0zM63.8 49.8h2.0v2.0h-2.0zM83.8 77.3h2.0v2.0h-2.0zM32.6 118.3h2.0v2.0h-2.0zM0.1 53.1h2.0v2.0h-2.0zM38.2 53.7h2.0v2.0h-2.0zM15.8 108.9h2.0v2.0h-2.0zM51.2 4.7h2.0v2.0h-2.0zM84.1 12.4h2.0v2.0h-2.0zM79.6 125.5h2.0v2.0h-2.0zM112.1 54.9h2.0v2.0h-2.0zM111.4 84.1h2.0v2.0h-2.0zM81.6 73.9h2.0v2.0h-2.0zM83.4 46.0h2.0v2.0h-2.0zM122.4 0.1h2.0v2.0h-2.0zM14.8 74.1h2.0v2.0h-2.0zM86.2 116.8h2.0v2.0h-2.0zM51.5 56.6h2.0v2.0h-2.0zM31.0 38.2h2.0v2.0h-2.0zM133.2 49.8h2.0v2.0h-2.0zM131.7 119.7h2.0v2.0h-2.0zM81.6 34.0h2.0v2.0h-2.0zM134.4 65.0h2.0v2.0h-2.0zM56.9 41.8h2.0v2.0h-2.0zM16.7 81.4h2.0v2.0h-2.0zM60.8 38.4h2.0v2.0h-2.0zM107.1 108.3h2.0v2.0h-2.0zM107.1 32.2h2.0v2.0h-2.0zM36.7 20.3h2.0v2.0h-2.0zM135.5 38.4h2.0v2.0h-2.0zM83.3 62.2h2.0v2.0h-2.0zM101.9 15.5h2.0v2.0h-2.0zM104.2 39.4h2.0v2.0h-2.0zM40.7 69.4h2.0v2.0h-2.0zM102.1 77.4h2.0v2.0h-2.0zM5.0 33.1h2.0v2.0h-2.0zM62.4 120.1h2.0v2.0h-2.0zM121.6 71.5h2.0v2.0h-2.0zM58.6 75.4h2.0v2.0h-2.0zM97.0 82.8h2.0v2.0h-2.0zM52.8 51.3h2.0v2.0h-2.0zM116.7 25.7h2.0v2.0h-2.0zM40.6 108.7h2.0v2.0h-2.0zM9.0 109.6h2.0v2.0h-2.0zM95.2 56.7h2.0v2.0h-2.0zM39.2 102.3h2.0v2.0h-2.0zM124.8 18.7h2.0v2.0h-2.0zM65.5 71.9h2.0v2.0h-2.0zM21.0 76.7h2.0v2.0h-2.0zM111.2 9.0h2.0v2.0h-2.0zM31.5 107.4h2.0v2.0h-2.0zM108.5 86.9h2.0v2.0h-2.0zM3.5 94.7h2.0v2.0h-2.0zM88.5 124.7h2.0v2.0h-2.0zM97.6 17.6h2.0v2.0h-2.0zM14.8 49.7h2.0v2.0h-2.0zM9.9 7.5h2.0v2.0h-2.0zM78.8 97.2h2.0v2.0h-2.0zM120.3 17.6h2.0v2.0h-2.0zM128.6 49.0h2.0v2.0h-2.0zM7.6 91.3h2.0v2.0h-2.0zM20.7 82.7h2.0v2.0h-2.0zM69.3 119.3h2.0v2.0h-2.0zM76.0 81.3h2.0v2.0h-2.0zM36.1 72.3h2.0v2.0h-2.0zM34.8 98.3h2.0v2.0h-2.0zM70.8 17.5h2.0v2.0h-2.0zM32.1 48.6h2.0v2.0h-2.0zM11.7 87.5h2.0v2.0h-2.0zM120.1 62.9h2.0v2.0h-2.0zM44.3 104.3h2.0v2.0h-2.0zM130.4 89.2h2.0v2.0h-2.0zM30.6 15.2h2.0v2.0h-2.0zM32.2 43.7h2.0v2.0h-2.0zM116.7 67.8h2.0v2.0h-2.0zM101.4 51.8h2.0v2.0h-2.0zM13.3 4.3h2.0v2.0h-2.0zM104.2 0.1h2.0v2.0h-2.0zM64.4 116.6h2.0v2.0h-2.0zM84.9 56.2h2.0v2.0h-2.0zM63.8 13.1h2.0v2.0h-2.0zM21.2 20.8h2.0v2.0h-2.0zM34.8 36.3h2.0v2.0h-2.0zM22.1 37.6h2.0v2.0h-2.0zM32.2 63.1h2.0v2.0h-2.0zM50.5 122.9h2.0v2.0h-2.0zM94.2 88.3h2.0v2.0h-2.0zM64.6 123.8h2.0v2.0h-2.0zM16.2 87.6h2.0v2.0h-2.0zM39.9 88.4h2.0v2.0h-2.0zM31.6 10.2h2.0v2.0h-2.0zM100.3 94.0h2.0v2.0h-2.0zM22.4 31.5h2.0v2.0h-2.0zM8.3 102.1h2.0v2.0h-2.0zM56.2 5.9h2.0v2.0h-2.0zM75.1 129.6h2.0v2.0h-2.0zM128.2 7.0h2.0v2.0h-2.0zM33.4 6.6h2.0v2.0h-2.0zM41.9 6.7h2.0v2.0h-2.0zM24.6 66.6h2.0v2.0h-2.0zM55.1 69.6h2.0v2.0h-2.0zM126.2 78.4h2.0v2.0h-2.0zM2.4 70.7h2.0v2.0h-2.0zM51.6 81.9h2.0v2.0h-2.0zM113.2 29.3h2.0v2.0h-2.0zM15.8 40.8h2.0v2.0h-2.0zM112.3 41.0h2.0v2.0h-2.0zM51.2 12.9h2.0v2.0h-2.0zM103.1 72.8h2.0v2.0h-2.0zM122.8 85.7h2.0v2.0h-2.0zM36.7 106.4h2.0v2.0h-2.0zM17.8 46.8h2.0v2.0h-2.0zM117.8 124.3h2.0v2.0h-2.0zM83.8 30.3h2.0v2.0h-2.0zM58.8 47.5h2.0v2.0h-2.0zM45.3 1.6h2.0v2.0h-2.0zM72.7 22.4h2.0v2.0h-2.0zM128.6 104.1h2.0v2.0h-2.0zM7.2 128.1h2.0v2.0h-2.0zM4.5 75.6h2.0v2.0h-2.0zM38.0 26.4h2.0v2.0h-2.0zM77.1 46.8h2.0v2.0h-2.0zM102.9 31.6h2.0v2.0h-2.0zM48.2 32.5h2.0v2.0h-2.0zM134.6 110.1h2.0v2.0h-2.0zM116.4 81.0h2.0v2.0h-2.0zM-1.8 69.9h2.0v2.0h-2.0zM51.6 -1.5h2.0v2.0h-2.0zM-1.5 38.4h2.0v2.0h-2.0zM75.1 -1.4h2.0v2.0h-2.0zM-2.4 110.1h2.0v2.0h-2.0z" fill="#86c986"/>
</pattern>
<clipPath id="l1clip"><polygon points="125,52 473,52 463,62 452,74 442,83 435,93 429,101 423,112 420,123 414,135 402,144 390,146 378,149 369,161 362,168 354,180 348,190 340,204 332,218 328,233 326,247 323,261 319,271 312,275 297,272 281,273 271,280 267,290 269,299 276,301 284,299 278,309 264,323 255,332 251,335 241,327 230,316 228,304 222,289 215,285 192,286 175,282 164,268 154,259 139,258 125,257"/></clipPath>
<filter id="rough" x="0" y="0" width="900" height="633" filterUnits="userSpaceOnUse"><feTurbulence type="turbulence" baseFrequency="0.45" numOctaves="2" seed="4" result="n"/><feDisplacementMap in="SourceGraphic" in2="n" scale="3.5" xChannelSelector="R" yChannelSelector="G" result="d"/><feComponentTransfer in="d"><feFuncA type="discrete" tableValues="0 1"/></feComponentTransfer></filter>
<mask id="landmask" maskUnits="userSpaceOnUse" x="0" y="0" width="900" height="633"><g filter="url(#rough)" fill="#fff"><polygon points="322,499 317,478 322,459 328,437 338,418 351,403 366,387 382,376 398,370.5 410.6,364.3 429,358.8 447,355.8 465.6,356.4 478,357.6 488,359 502,351 517,336 536,313 551,302 562,290 568,284 580,266 590,254 600,244 616,231 631,218 646,203 659,191 674,178 686,165 702,154 716,143 716,489 710,487 691,480 672,472 650,461 627,453 596,446 566,442 536,440 505,442 483,446 460,451 442,456 420,461 398,466 376,475 354,485 335,494"/><polygon points="466,321 475,305 487,294 502,290 509,296 502,309 494,326 483,330 471,326"/><polygon points="501,471 512,467 520,473 541,481 557,489 571,497 581,508 600,516 611,524 616,535 635,543 640,546 644,552 646.6,563 650,580 653,586 662,588.6 671,589.7 679,594 681,597 443,597 443,592 459,588 473,586 487,583 500,580 511,577 522,575 531,566 537,554 537,540 531,527 520,513 515,500 509,487 501,476"/><polygon points="343,580 360,579 362,590 358,596 343,596"/><polygon points="663,545 668,548 673,554 671,558 666.5,559 666,566 672,571 670,574 664,570 660,562 659,552"/><polygon points="435,357 435.5,349 438,347 441,350 440,357"/></g></mask>
<mask id="landmaskb" maskUnits="userSpaceOnUse" x="0" y="0" width="900" height="633"><g filter="url(#rough)" fill="#fff"><polygon points="125,52 473,52 463,62 452,74 442,83 435,93 429,101 423,112 420,123 414,135 402,144 390,146 378,149 369,161 362,168 354,180 348,190 340,204 332,218 328,233 326,247 323,261 319,271 312,275 297,272 281,273 271,280 267,290 269,299 276,301 284,299 278,309 264,323 255,332 251,335 241,327 230,316 228,304 222,289 215,285 192,286 175,282 164,268 154,259 139,258 125,257"/><polygon points="125,295 135,297 140,304 140,316 135,327 128,333 125,335"/><polygon points="125,362 129,363 134,369 140,364 142,349 149,345 164,340 184,334 197,332 211,329 214,342 204,358 186,366 173,375 164,391 164,404 173,408 189,400 200,397 213,404 222,415 227,426 228,437 225,440 222,460 216,478 203,488 193,498 186,513 173,521 160,525 150,523 143,526 138,536 133,546 125,551"/></g></mask>
<pattern id="dotsb" width="163" height="157" patternUnits="userSpaceOnUse">
<rect width="163" height="157" fill="#333333"/>
<path d="M137.9 129.1h1.3v1.3h-1.3zM13.4 42.4h1.3v1.3h-1.3zM116.8 15.3h1.3v1.3h-1.3zM78.3 73.6h1.3v1.3h-1.3zM155.7 92.1h1.3v1.3h-1.3zM139.7 47.7h1.3v1.3h-1.3zM128.7 65.5h1.3v1.3h-1.3zM149.4 14.3h1.3v1.3h-1.3zM134.7 32.7h1.3v1.3h-1.3zM88.6 82.5h1.3v1.3h-1.3zM25.7 130.6h1.3v1.3h-1.3zM50.8 48.8h1.3v1.3h-1.3zM12.4 48.0h1.3v1.3h-1.3zM76.2 112.3h1.3v1.3h-1.3zM58.6 107.9h1.3v1.3h-1.3zM17.2 61.9h1.3v1.3h-1.3zM75.3 151.8h1.3v1.3h-1.3zM135.2 102.7h1.3v1.3h-1.3zM2.0 59.2h1.3v1.3h-1.3zM115.7 37.3h1.3v1.3h-1.3zM92.0 71.9h1.3v1.3h-1.3zM1.7 155.7h1.3v1.3h-1.3zM130.3 32.5h1.3v1.3h-1.3zM100.4 45.6h1.3v1.3h-1.3zM61.3 84.7h1.3v1.3h-1.3zM48.6 53.0h1.3v1.3h-1.3zM63.9 104.7h1.3v1.3h-1.3zM41.8 31.4h1.3v1.3h-1.3zM119.2 51.7h1.3v1.3h-1.3zM154.0 88.4h1.3v1.3h-1.3zM118.0 52.1h1.3v1.3h-1.3zM134.8 14.5h1.3v1.3h-1.3zM23.0 14.8h1.3v1.3h-1.3zM110.5 111.2h1.3v1.3h-1.3zM29.3 63.2h1.3v1.3h-1.3zM136.4 93.1h1.3v1.3h-1.3zM14.7 35.6h1.3v1.3h-1.3zM25.6 19.5h1.3v1.3h-1.3zM66.3 11.4h1.3v1.3h-1.3zM150.1 67.0h1.3v1.3h-1.3zM83.4 101.6h1.3v1.3h-1.3zM125.0 128.9h1.3v1.3h-1.3zM62.9 52.0h1.3v1.3h-1.3zM67.2 2.4h1.3v1.3h-1.3zM65.3 109.9h1.3v1.3h-1.3zM160.1 124.0h1.3v1.3h-1.3zM107.6 95.6h1.3v1.3h-1.3zM3.0 52.0h1.3v1.3h-1.3zM55.8 102.2h1.3v1.3h-1.3zM17.3 59.3h1.3v1.3h-1.3zM83.0 123.8h1.3v1.3h-1.3zM134.5 96.0h1.3v1.3h-1.3zM25.8 120.3h1.3v1.3h-1.3zM147.2 86.1h1.3v1.3h-1.3zM57.5 78.6h1.3v1.3h-1.3zM23.1 112.0h1.3v1.3h-1.3zM160.8 81.0h1.3v1.3h-1.3zM116.6 131.2h1.3v1.3h-1.3zM32.1 148.3h1.3v1.3h-1.3zM102.2 31.1h1.3v1.3h-1.3zM13.6 38.4h1.3v1.3h-1.3zM94.0 109.4h1.3v1.3h-1.3zM53.7 145.9h1.3v1.3h-1.3zM58.9 72.7h1.3v1.3h-1.3zM20.2 152.9h1.3v1.3h-1.3zM22.1 141.9h1.3v1.3h-1.3zM88.6 88.0h1.3v1.3h-1.3zM91.3 41.5h1.3v1.3h-1.3zM148.2 155.8h1.3v1.3h-1.3zM133.3 94.4h1.3v1.3h-1.3zM20.0 129.5h1.3v1.3h-1.3zM47.0 140.8h1.3v1.3h-1.3zM39.3 90.1h1.3v1.3h-1.3zM135.4 29.1h1.3v1.3h-1.3zM89.3 12.0h1.3v1.3h-1.3zM5.2 28.3h1.3v1.3h-1.3zM160.9 147.5h1.3v1.3h-1.3zM107.3 48.3h1.3v1.3h-1.3zM109.4 115.8h1.3v1.3h-1.3zM62.2 92.9h1.3v1.3h-1.3zM131.0 2.6h1.3v1.3h-1.3zM32.5 73.5h1.3v1.3h-1.3zM23.3 60.7h1.3v1.3h-1.3zM92.8 27.3h1.3v1.3h-1.3zM84.7 41.4h1.3v1.3h-1.3zM92.6 52.1h1.3v1.3h-1.3zM104.6 5.9h1.3v1.3h-1.3zM109.4 22.7h1.3v1.3h-1.3zM156.4 94.2h1.3v1.3h-1.3zM76.6 64.6h1.3v1.3h-1.3zM101.7 108.2h1.3v1.3h-1.3zM123.6 118.0h1.3v1.3h-1.3zM79.2 156.2h1.3v1.3h-1.3zM136.6 134.2h1.3v1.3h-1.3zM66.7 68.1h1.3v1.3h-1.3zM92.3 142.1h1.3v1.3h-1.3zM85.7 82.4h1.3v1.3h-1.3zM70.5 142.0h1.3v1.3h-1.3zM52.3 8.6h1.3v1.3h-1.3zM118.3 141.3h1.3v1.3h-1.3zM119.3 93.8h1.3v1.3h-1.3zM122.6 47.8h1.3v1.3h-1.3zM96.7 11.0h1.3v1.3h-1.3zM20.3 70.2h1.3v1.3h-1.3zM81.9 62.3h1.3v1.3h-1.3zM8.5 109.1h1.3v1.3h-1.3zM85.8 37.5h1.3v1.3h-1.3zM49.9 62.1h1.3v1.3h-1.3zM38.4 10.7h1.3v1.3h-1.3zM148.5 151.7h1.3v1.3h-1.3zM108.5 136.0h1.3v1.3h-1.3zM68.7 126.4h1.3v1.3h-1.3zM36.2 117.2h1.3v1.3h-1.3zM92.4 141.8h1.3v1.3h-1.3zM16.1 124.4h1.3v1.3h-1.3zM20.2 84.4h1.3v1.3h-1.3zM155.0 0.1h1.3v1.3h-1.3zM39.8 47.0h1.3v1.3h-1.3zM52.9 9.8h1.3v1.3h-1.3zM145.9 128.0h1.3v1.3h-1.3zM64.8 56.0h1.3v1.3h-1.3zM95.4 7.2h1.3v1.3h-1.3zM5.1 141.1h1.3v1.3h-1.3zM50.2 78.3h1.3v1.3h-1.3zM152.2 153.4h1.3v1.3h-1.3zM77.0 32.4h1.3v1.3h-1.3zM48.1 144.9h1.3v1.3h-1.3zM146.2 30.7h1.3v1.3h-1.3zM136.6 55.6h1.3v1.3h-1.3zM77.0 27.0h1.3v1.3h-1.3zM143.4 156.3h1.3v1.3h-1.3zM32.9 99.3h1.3v1.3h-1.3zM31.2 138.2h1.3v1.3h-1.3zM8.2 16.7h1.3v1.3h-1.3zM118.3 49.1h1.3v1.3h-1.3zM146.7 136.5h1.3v1.3h-1.3zM116.2 21.2h1.3v1.3h-1.3zM113.4 147.2h1.3v1.3h-1.3zM72.6 12.4h1.3v1.3h-1.3zM36.4 48.2h1.3v1.3h-1.3zM115.8 30.8h1.3v1.3h-1.3zM29.5 37.0h1.3v1.3h-1.3zM108.3 124.1h1.3v1.3h-1.3zM60.7 103.9h1.3v1.3h-1.3zM144.2 92.6h1.3v1.3h-1.3zM37.3 47.2h1.3v1.3h-1.3zM151.1 104.7h1.3v1.3h-1.3zM45.1 100.5h1.3v1.3h-1.3zM14.7 154.3h1.3v1.3h-1.3zM71.8 82.9h1.3v1.3h-1.3zM86.5 7.1h1.3v1.3h-1.3zM97.8 44.7h1.3v1.3h-1.3zM40.9 126.1h1.3v1.3h-1.3zM14.2 44.8h1.3v1.3h-1.3zM123.2 38.6h1.3v1.3h-1.3zM45.5 86.1h1.3v1.3h-1.3zM30.4 140.8h1.3v1.3h-1.3zM161.0 5.3h1.3v1.3h-1.3zM75.2 117.8h1.3v1.3h-1.3zM62.7 145.9h1.3v1.3h-1.3zM81.5 28.2h1.3v1.3h-1.3zM90.6 101.3h1.3v1.3h-1.3zM58.6 103.3h1.3v1.3h-1.3zM127.6 81.1h1.3v1.3h-1.3zM82.4 132.7h1.3v1.3h-1.3zM111.5 81.7h1.3v1.3h-1.3zM155.1 27.3h1.3v1.3h-1.3zM127.1 25.9h1.3v1.3h-1.3zM99.1 36.9h1.3v1.3h-1.3zM71.8 121.4h1.3v1.3h-1.3zM128.2 124.2h1.3v1.3h-1.3zM38.5 76.8h1.3v1.3h-1.3zM36.1 91.1h1.3v1.3h-1.3zM81.3 5.5h1.3v1.3h-1.3zM97.3 112.2h1.3v1.3h-1.3zM93.3 137.0h1.3v1.3h-1.3zM29.3 23.8h1.3v1.3h-1.3zM2.9 77.9h1.3v1.3h-1.3zM70.8 69.3h1.3v1.3h-1.3zM42.9 125.4h1.3v1.3h-1.3zM11.8 142.4h1.3v1.3h-1.3zM92.7 85.3h1.3v1.3h-1.3zM129.0 37.4h1.3v1.3h-1.3zM23.8 48.8h1.3v1.3h-1.3zM6.9 49.4h1.3v1.3h-1.3zM101.3 82.5h1.3v1.3h-1.3zM43.1 92.4h1.3v1.3h-1.3zM14.4 128.8h1.3v1.3h-1.3zM28.0 40.0h1.3v1.3h-1.3zM26.0 108.4h1.3v1.3h-1.3zM135.4 123.5h1.3v1.3h-1.3zM10.0 64.5h1.3v1.3h-1.3zM59.4 34.0h1.3v1.3h-1.3zM158.2 6.6h1.3v1.3h-1.3zM79.8 119.5h1.3v1.3h-1.3zM160.7 22.7h1.3v1.3h-1.3zM74.2 117.0h1.3v1.3h-1.3zM6.4 37.8h1.3v1.3h-1.3zM145.1 22.2h1.3v1.3h-1.3zM64.0 46.8h1.3v1.3h-1.3zM69.2 12.0h1.3v1.3h-1.3zM5.6 156.4h1.3v1.3h-1.3zM124.4 115.2h1.3v1.3h-1.3zM37.5 39.8h1.3v1.3h-1.3zM90.0 37.9h1.3v1.3h-1.3zM75.2 146.4h1.3v1.3h-1.3zM59.3 52.9h1.3v1.3h-1.3zM159.9 95.9h1.3v1.3h-1.3zM6.5 63.3h1.3v1.3h-1.3zM105.9 9.2h1.3v1.3h-1.3zM55.9 109.1h1.3v1.3h-1.3zM140.9 92.7h1.3v1.3h-1.3zM144.5 72.6h1.3v1.3h-1.3zM64.0 132.4h1.3v1.3h-1.3zM62.1 122.7h1.3v1.3h-1.3zM35.1 54.5h1.3v1.3h-1.3zM29.9 86.3h1.3v1.3h-1.3zM26.7 32.0h1.3v1.3h-1.3zM35.0 73.4h1.3v1.3h-1.3zM50.3 70.2h1.3v1.3h-1.3zM161.9 106.6h1.3v1.3h-1.3zM140.6 32.1h1.3v1.3h-1.3zM62.4 11.4h1.3v1.3h-1.3zM112.7 57.0h1.3v1.3h-1.3zM44.7 2.9h1.3v1.3h-1.3zM29.7 41.2h1.3v1.3h-1.3zM64.1 145.0h1.3v1.3h-1.3zM116.6 42.2h1.3v1.3h-1.3zM58.9 24.1h1.3v1.3h-1.3zM152.7 56.5h1.3v1.3h-1.3zM124.8 113.6h1.3v1.3h-1.3zM147.9 3.2h1.3v1.3h-1.3zM52.5 60.4h1.3v1.3h-1.3zM13.6 138.5h1.3v1.3h-1.3zM53.0 121.0h1.3v1.3h-1.3zM84.6 8.6h1.3v1.3h-1.3zM64.2 37.4h1.3v1.3h-1.3zM6.7 23.7h1.3v1.3h-1.3zM97.0 5.0h1.3v1.3h-1.3zM50.9 66.6h1.3v1.3h-1.3zM88.7 21.4h1.3v1.3h-1.3zM115.2 40.9h1.3v1.3h-1.3zM118.3 104.6h1.3v1.3h-1.3zM24.0 32.2h1.3v1.3h-1.3zM45.7 111.9h1.3v1.3h-1.3zM66.1 60.7h1.3v1.3h-1.3zM141.2 35.5h1.3v1.3h-1.3zM47.6 54.2h1.3v1.3h-1.3zM35.2 6.4h1.3v1.3h-1.3zM4.0 99.0h1.3v1.3h-1.3zM92.2 127.0h1.3v1.3h-1.3zM159.0 46.8h1.3v1.3h-1.3zM109.3 144.3h1.3v1.3h-1.3zM35.2 108.2h1.3v1.3h-1.3zM108.7 150.0h1.3v1.3h-1.3zM141.5 36.8h1.3v1.3h-1.3zM103.1 14.1h1.3v1.3h-1.3zM69.7 61.6h1.3v1.3h-1.3zM9.8 60.2h1.3v1.3h-1.3zM53.5 78.0h1.3v1.3h-1.3zM45.6 24.9h1.3v1.3h-1.3zM65.6 74.6h1.3v1.3h-1.3zM27.2 104.4h1.3v1.3h-1.3zM39.1 14.6h1.3v1.3h-1.3zM55.7 66.3h1.3v1.3h-1.3zM24.6 91.5h1.3v1.3h-1.3zM114.3 86.9h1.3v1.3h-1.3zM114.1 3.6h1.3v1.3h-1.3zM63.8 57.2h1.3v1.3h-1.3zM10.3 63.5h1.3v1.3h-1.3zM8.9 77.8h1.3v1.3h-1.3zM95.5 73.6h1.3v1.3h-1.3zM53.1 39.8h1.3v1.3h-1.3zM3.8 54.5h1.3v1.3h-1.3zM145.4 88.8h1.3v1.3h-1.3zM42.7 104.9h1.3v1.3h-1.3zM30.3 73.7h1.3v1.3h-1.3zM100.3 149.9h1.3v1.3h-1.3zM59.1 90.5h1.3v1.3h-1.3zM153.6 121.1h1.3v1.3h-1.3zM102.3 97.5h1.3v1.3h-1.3zM67.0 65.2h1.3v1.3h-1.3zM45.0 130.2h1.3v1.3h-1.3zM143.4 60.0h1.3v1.3h-1.3zM148.3 6.0h1.3v1.3h-1.3zM22.1 79.6h1.3v1.3h-1.3zM50.3 56.6h1.3v1.3h-1.3zM159.2 23.5h1.3v1.3h-1.3zM31.4 35.9h1.3v1.3h-1.3zM110.9 36.8h1.3v1.3h-1.3zM0.2 85.4h1.3v1.3h-1.3zM64.2 37.6h1.3v1.3h-1.3zM80.5 102.1h1.3v1.3h-1.3zM89.3 98.0h1.3v1.3h-1.3zM91.4 130.5h1.3v1.3h-1.3zM157.9 52.4h1.3v1.3h-1.3zM56.5 139.2h1.3v1.3h-1.3zM51.1 112.4h1.3v1.3h-1.3zM113.3 107.8h1.3v1.3h-1.3zM157.1 129.4h1.3v1.3h-1.3zM26.0 97.6h1.3v1.3h-1.3zM80.0 88.5h1.3v1.3h-1.3zM60.2 44.9h1.3v1.3h-1.3zM122.1 83.8h1.3v1.3h-1.3zM38.6 39.1h1.3v1.3h-1.3zM53.0 27.9h1.3v1.3h-1.3zM83.7 19.8h1.3v1.3h-1.3zM10.3 10.8h1.3v1.3h-1.3zM16.7 110.7h1.3v1.3h-1.3zM18.4 70.9h1.3v1.3h-1.3zM125.9 75.5h1.3v1.3h-1.3zM26.5 136.0h1.3v1.3h-1.3zM141.8 8.4h1.3v1.3h-1.3zM41.4 79.7h1.3v1.3h-1.3zM129.8 61.6h1.3v1.3h-1.3zM116.7 39.5h1.3v1.3h-1.3zM116.7 51.3h1.3v1.3h-1.3zM54.4 119.2h1.3v1.3h-1.3zM137.4 130.1h1.3v1.3h-1.3zM92.5 66.0h1.3v1.3h-1.3zM115.2 97.8h1.3v1.3h-1.3zM135.5 125.8h1.3v1.3h-1.3zM20.4 59.2h1.3v1.3h-1.3zM109.1 36.3h1.3v1.3h-1.3zM30.1 2.2h1.3v1.3h-1.3zM95.4 147.7h1.3v1.3h-1.3zM158.2 21.0h1.3v1.3h-1.3zM112.1 65.8h1.3v1.3h-1.3zM102.9 62.3h1.3v1.3h-1.3zM152.1 155.2h1.3v1.3h-1.3zM7.9 112.0h1.3v1.3h-1.3zM19.3 6.7h1.3v1.3h-1.3zM46.6 114.8h1.3v1.3h-1.3zM162.0 18.9h1.3v1.3h-1.3zM53.8 4.2h1.3v1.3h-1.3zM88.4 75.8h1.3v1.3h-1.3zM60.9 48.5h1.3v1.3h-1.3zM130.5 131.7h1.3v1.3h-1.3zM46.2 61.5h1.3v1.3h-1.3zM100.7 120.2h1.3v1.3h-1.3zM159.9 61.1h1.3v1.3h-1.3zM113.1 85.7h1.3v1.3h-1.3zM130.4 23.1h1.3v1.3h-1.3zM28.5 16.8h1.3v1.3h-1.3zM152.2 39.5h1.3v1.3h-1.3zM79.6 18.9h1.3v1.3h-1.3zM52.8 3.0h1.3v1.3h-1.3zM92.2 22.6h1.3v1.3h-1.3zM101.9 43.0h1.3v1.3h-1.3zM37.1 75.7h1.3v1.3h-1.3zM59.6 40.8h1.3v1.3h-1.3zM8.4 10.1h1.3v1.3h-1.3zM145.5 48.6h1.3v1.3h-1.3zM12.8 28.7h1.3v1.3h-1.3zM78.8 156.6h1.3v1.3h-1.3zM33.0 136.2h1.3v1.3h-1.3zM78.9 65.1h1.3v1.3h-1.3zM131.5 62.2h1.3v1.3h-1.3zM9.4 86.4h1.3v1.3h-1.3zM107.1 97.8h1.3v1.3h-1.3zM45.2 147.4h1.3v1.3h-1.3zM140.9 156.1h1.3v1.3h-1.3zM72.2 130.9h1.3v1.3h-1.3zM118.2 27.6h1.3v1.3h-1.3zM4.4 26.5h1.3v1.3h-1.3zM19.4 11.7h1.3v1.3h-1.3zM58.5 118.3h1.3v1.3h-1.3zM50.5 80.7h1.3v1.3h-1.3zM1.7 33.0h1.3v1.3h-1.3zM156.4 1.7h1.3v1.3h-1.3zM85.9 127.2h1.3v1.3h-1.3zM129.1 115.5h1.3v1.3h-1.3zM65.1 126.1h1.3v1.3h-1.3zM134.9 120.5h1.3v1.3h-1.3zM160.7 15.8h1.3v1.3h-1.3zM154.9 63.2h1.3v1.3h-1.3zM115.0 39.3h1.3v1.3h-1.3zM148.3 3.7h1.3v1.3h-1.3zM94.0 35.7h1.3v1.3h-1.3zM63.3 58.0h1.3v1.3h-1.3zM107.1 127.3h1.3v1.3h-1.3zM59.4 100.2h1.3v1.3h-1.3zM57.7 43.8h1.3v1.3h-1.3zM147.5 50.5h1.3v1.3h-1.3zM15.3 52.6h1.3v1.3h-1.3zM120.9 33.2h1.3v1.3h-1.3zM121.1 85.8h1.3v1.3h-1.3zM110.9 27.8h1.3v1.3h-1.3zM17.2 22.4h1.3v1.3h-1.3zM57.1 67.6h1.3v1.3h-1.3zM1.5 78.9h1.3v1.3h-1.3zM65.7 50.5h1.3v1.3h-1.3zM87.6 149.5h1.3v1.3h-1.3zM33.4 138.2h1.3v1.3h-1.3zM52.3 118.4h1.3v1.3h-1.3zM17.7 155.0h1.3v1.3h-1.3zM70.1 151.1h1.3v1.3h-1.3zM35.8 64.1h1.3v1.3h-1.3zM115.1 27.9h1.3v1.3h-1.3zM44.6 106.3h1.3v1.3h-1.3zM154.5 50.6h1.3v1.3h-1.3zM29.9 56.1h1.3v1.3h-1.3zM161.3 23.3h1.3v1.3h-1.3zM103.5 59.4h1.3v1.3h-1.3zM105.0 33.3h1.3v1.3h-1.3zM100.5 139.4h1.3v1.3h-1.3zM139.6 98.7h1.3v1.3h-1.3zM82.3 89.1h1.3v1.3h-1.3zM18.6 131.5h1.3v1.3h-1.3zM112.4 71.2h1.3v1.3h-1.3zM108.5 65.8h1.3v1.3h-1.3zM62.7 36.1h1.3v1.3h-1.3zM97.9 89.9h1.3v1.3h-1.3zM84.0 5.1h1.3v1.3h-1.3zM102.3 70.1h1.3v1.3h-1.3zM96.7 93.3h1.3v1.3h-1.3zM151.9 23.9h1.3v1.3h-1.3zM76.4 155.9h1.3v1.3h-1.3zM120.3 49.1h1.3v1.3h-1.3zM120.1 155.3h1.3v1.3h-1.3zM65.5 136.2h1.3v1.3h-1.3zM20.7 155.4h1.3v1.3h-1.3zM80.0 36.8h1.3v1.3h-1.3zM137.0 101.9h1.3v1.3h-1.3zM152.8 130.2h1.3v1.3h-1.3zM130.0 80.3h1.3v1.3h-1.3zM162.0 10.2h1.3v1.3h-1.3zM141.8 111.7h1.3v1.3h-1.3zM40.9 126.7h1.3v1.3h-1.3zM74.0 84.2h1.3v1.3h-1.3zM141.1 30.8h1.3v1.3h-1.3zM45.6 101.1h1.3v1.3h-1.3zM12.0 87.1h1.3v1.3h-1.3zM128.3 77.0h1.3v1.3h-1.3zM39.4 125.6h1.3v1.3h-1.3zM139.4 121.0h1.3v1.3h-1.3zM89.5 142.2h1.3v1.3h-1.3zM129.9 23.8h1.3v1.3h-1.3zM59.6 15.8h1.3v1.3h-1.3zM6.0 54.3h1.3v1.3h-1.3zM141.0 130.9h1.3v1.3h-1.3zM19.1 28.5h1.3v1.3h-1.3zM63.3 133.3h1.3v1.3h-1.3zM100.6 141.6h1.3v1.3h-1.3zM11.7 155.1h1.3v1.3h-1.3zM33.7 98.8h1.3v1.3h-1.3zM142.9 114.2h1.3v1.3h-1.3zM32.1 104.9h1.3v1.3h-1.3zM70.2 2.4h1.3v1.3h-1.3zM55.4 49.5h1.3v1.3h-1.3zM102.6 43.7h1.3v1.3h-1.3zM98.3 109.1h1.3v1.3h-1.3zM29.4 20.1h1.3v1.3h-1.3zM113.1 73.2h1.3v1.3h-1.3zM21.0 18.2h1.3v1.3h-1.3zM153.4 95.8h1.3v1.3h-1.3zM58.3 30.8h1.3v1.3h-1.3zM162.2 108.6h1.3v1.3h-1.3zM120.0 56.6h1.3v1.3h-1.3zM50.6 64.1h1.3v1.3h-1.3zM23.8 99.1h1.3v1.3h-1.3zM69.2 128.8h1.3v1.3h-1.3zM66.7 71.7h1.3v1.3h-1.3zM82.6 147.8h1.3v1.3h-1.3zM56.5 110.5h1.3v1.3h-1.3zM38.3 90.9h1.3v1.3h-1.3zM46.4 137.0h1.3v1.3h-1.3zM46.7 134.2h1.3v1.3h-1.3zM110.3 71.4h1.3v1.3h-1.3zM152.2 60.9h1.3v1.3h-1.3zM121.2 94.4h1.3v1.3h-1.3zM73.1 10.1h1.3v1.3h-1.3zM68.3 44.2h1.3v1.3h-1.3zM71.9 149.9h1.3v1.3h-1.3zM47.8 109.1h1.3v1.3h-1.3zM109.5 38.4h1.3v1.3h-1.3zM67.1 20.8h1.3v1.3h-1.3zM145.9 39.5h1.3v1.3h-1.3zM68.6 53.6h1.3v1.3h-1.3zM133.7 133.5h1.3v1.3h-1.3zM96.3 85.7h1.3v1.3h-1.3zM16.2 140.8h1.3v1.3h-1.3zM14.4 57.1h1.3v1.3h-1.3zM61.0 113.5h1.3v1.3h-1.3zM109.1 54.0h1.3v1.3h-1.3zM146.4 149.1h1.3v1.3h-1.3zM3.8 99.4h1.3v1.3h-1.3zM76.5 56.8h1.3v1.3h-1.3zM75.8 49.6h1.3v1.3h-1.3zM109.4 95.1h1.3v1.3h-1.3zM158.2 153.3h1.3v1.3h-1.3zM161.8 62.0h1.3v1.3h-1.3zM135.1 102.0h1.3v1.3h-1.3zM114.3 156.6h1.3v1.3h-1.3zM10.8 72.6h1.3v1.3h-1.3zM65.4 103.0h1.3v1.3h-1.3zM35.5 155.4h1.3v1.3h-1.3zM34.1 58.1h1.3v1.3h-1.3zM23.3 62.0h1.3v1.3h-1.3zM120.9 13.1h1.3v1.3h-1.3zM27.2 101.9h1.3v1.3h-1.3zM101.5 116.5h1.3v1.3h-1.3zM41.3 127.4h1.3v1.3h-1.3zM119.1 121.8h1.3v1.3h-1.3zM19.5 73.6h1.3v1.3h-1.3zM2.6 135.0h1.3v1.3h-1.3zM154.0 140.6h1.3v1.3h-1.3zM3.9 55.1h1.3v1.3h-1.3zM87.3 83.8h1.3v1.3h-1.3zM18.1 123.9h1.3v1.3h-1.3zM49.2 79.6h1.3v1.3h-1.3zM20.3 89.2h1.3v1.3h-1.3zM21.1 13.9h1.3v1.3h-1.3zM83.5 46.2h1.3v1.3h-1.3zM126.7 38.7h1.3v1.3h-1.3zM67.5 8.5h1.3v1.3h-1.3zM35.5 70.9h1.3v1.3h-1.3zM91.0 72.1h1.3v1.3h-1.3zM138.7 16.4h1.3v1.3h-1.3zM138.6 24.3h1.3v1.3h-1.3zM158.2 82.4h1.3v1.3h-1.3zM66.3 96.1h1.3v1.3h-1.3zM140.8 151.3h1.3v1.3h-1.3zM67.4 1.7h1.3v1.3h-1.3zM25.1 128.5h1.3v1.3h-1.3zM119.7 111.9h1.3v1.3h-1.3zM25.5 83.4h1.3v1.3h-1.3zM4.7 17.3h1.3v1.3h-1.3zM49.0 151.7h1.3v1.3h-1.3zM104.8 133.1h1.3v1.3h-1.3zM7.5 65.3h1.3v1.3h-1.3zM12.8 40.9h1.3v1.3h-1.3zM18.2 144.3h1.3v1.3h-1.3zM53.6 76.8h1.3v1.3h-1.3zM106.6 139.2h1.3v1.3h-1.3zM154.3 89.2h1.3v1.3h-1.3zM81.7 141.9h1.3v1.3h-1.3zM64.3 47.0h1.3v1.3h-1.3zM120.5 40.6h1.3v1.3h-1.3zM60.0 67.4h1.3v1.3h-1.3zM77.7 56.3h1.3v1.3h-1.3zM70.2 70.8h1.3v1.3h-1.3zM8.1 131.2h1.3v1.3h-1.3zM10.1 82.9h1.3v1.3h-1.3zM89.2 62.8h1.3v1.3h-1.3zM36.3 15.6h1.3v1.3h-1.3zM60.6 49.4h1.3v1.3h-1.3zM78.9 36.2h1.3v1.3h-1.3zM122.2 76.5h1.3v1.3h-1.3zM1.5 63.8h1.3v1.3h-1.3zM157.5 1.1h1.3v1.3h-1.3zM96.7 150.8h1.3v1.3h-1.3zM59.6 93.9h1.3v1.3h-1.3zM60.1 47.3h1.3v1.3h-1.3zM99.3 92.5h1.3v1.3h-1.3zM51.4 78.1h1.3v1.3h-1.3zM84.1 118.3h1.3v1.3h-1.3zM8.6 14.6h1.3v1.3h-1.3zM41.1 42.4h1.3v1.3h-1.3zM129.7 66.8h1.3v1.3h-1.3zM140.2 63.2h1.3v1.3h-1.3zM46.6 106.7h1.3v1.3h-1.3zM13.9 154.5h1.3v1.3h-1.3zM135.5 51.5h1.3v1.3h-1.3zM51.7 128.6h1.3v1.3h-1.3zM128.5 100.8h1.3v1.3h-1.3zM9.2 119.9h1.3v1.3h-1.3zM7.8 98.1h1.3v1.3h-1.3zM90.0 145.6h1.3v1.3h-1.3zM104.1 3.5h1.3v1.3h-1.3zM152.3 118.2h1.3v1.3h-1.3zM94.5 0.9h1.3v1.3h-1.3zM120.1 65.7h1.3v1.3h-1.3zM110.8 154.4h1.3v1.3h-1.3zM149.4 11.8h1.3v1.3h-1.3zM127.4 69.2h1.3v1.3h-1.3zM122.5 59.3h1.3v1.3h-1.3zM73.0 68.6h1.3v1.3h-1.3zM19.2 50.2h1.3v1.3h-1.3zM119.8 11.2h1.3v1.3h-1.3zM18.9 130.9h1.3v1.3h-1.3zM108.6 86.1h1.3v1.3h-1.3zM18.5 18.6h1.3v1.3h-1.3zM50.5 149.8h1.3v1.3h-1.3zM91.3 144.8h1.3v1.3h-1.3zM34.4 65.1h1.3v1.3h-1.3zM87.4 131.8h1.3v1.3h-1.3zM20.1 137.2h1.3v1.3h-1.3zM77.0 4.9h1.3v1.3h-1.3zM70.4 59.3h1.3v1.3h-1.3zM109.9 145.7h1.3v1.3h-1.3zM80.5 108.3h1.3v1.3h-1.3zM63.2 122.2h1.3v1.3h-1.3zM17.2 116.5h1.3v1.3h-1.3zM27.1 92.0h1.3v1.3h-1.3zM32.9 54.4h1.3v1.3h-1.3zM26.7 54.9h1.3v1.3h-1.3zM96.4 81.6h1.3v1.3h-1.3zM63.3 90.2h1.3v1.3h-1.3zM137.3 56.2h1.3v1.3h-1.3zM95.2 75.4h1.3v1.3h-1.3zM159.8 51.5h1.3v1.3h-1.3zM113.7 36.7h1.3v1.3h-1.3zM42.6 114.7h1.3v1.3h-1.3zM93.7 40.4h1.3v1.3h-1.3zM10.5 129.5h1.3v1.3h-1.3zM61.5 112.5h1.3v1.3h-1.3zM70.5 97.0h1.3v1.3h-1.3zM91.2 153.2h1.3v1.3h-1.3zM148.3 71.6h1.3v1.3h-1.3zM79.3 36.3h1.3v1.3h-1.3zM122.8 16.1h1.3v1.3h-1.3zM50.0 133.0h1.3v1.3h-1.3zM5.7 109.7h1.3v1.3h-1.3zM92.6 86.6h1.3v1.3h-1.3zM54.3 23.8h1.3v1.3h-1.3zM155.0 120.1h1.3v1.3h-1.3zM131.3 15.3h1.3v1.3h-1.3zM127.8 34.3h1.3v1.3h-1.3zM32.5 84.0h1.3v1.3h-1.3zM99.4 19.0h1.3v1.3h-1.3zM124.7 91.4h1.3v1.3h-1.3zM146.6 145.1h1.3v1.3h-1.3zM112.4 57.2h1.3v1.3h-1.3zM155.0 112.8h1.3v1.3h-1.3zM47.4 134.6h1.3v1.3h-1.3zM118.5 41.6h1.3v1.3h-1.3zM40.6 3.2h1.3v1.3h-1.3zM87.6 39.8h1.3v1.3h-1.3zM47.8 39.7h1.3v1.3h-1.3zM21.4 76.1h1.3v1.3h-1.3zM44.4 44.8h1.3v1.3h-1.3zM45.2 79.9h1.3v1.3h-1.3zM142.4 25.1h1.3v1.3h-1.3zM140.1 134.2h1.3v1.3h-1.3zM99.3 85.4h1.3v1.3h-1.3zM119.6 83.9h1.3v1.3h-1.3zM107.6 144.3h1.3v1.3h-1.3zM126.4 40.8h1.3v1.3h-1.3zM1.7 -1.3h1.3v1.3h-1.3zM-2.2 81.0h1.3v1.3h-1.3zM148.2 -1.2h1.3v1.3h-1.3zM-2.1 147.5h1.3v1.3h-1.3zM79.2 -0.8h1.3v1.3h-1.3zM143.4 -0.7h1.3v1.3h-1.3zM-2.0 5.3h1.3v1.3h-1.3zM-2.3 22.7h1.3v1.3h-1.3zM5.6 -0.6h1.3v1.3h-1.3zM-1.1 106.6h1.3v1.3h-1.3zM152.1 -1.8h1.3v1.3h-1.3zM-1.0 18.9h1.3v1.3h-1.3zM78.8 -0.4h1.3v1.3h-1.3zM140.9 -0.9h1.3v1.3h-1.3zM-2.3 15.8h1.3v1.3h-1.3zM17.7 -2.0h1.3v1.3h-1.3zM-1.7 23.3h1.3v1.3h-1.3zM76.4 -1.1h1.3v1.3h-1.3zM120.1 -1.7h1.3v1.3h-1.3zM20.7 -1.6h1.3v1.3h-1.3zM-1.0 10.2h1.3v1.3h-1.3zM11.7 -1.9h1.3v1.3h-1.3zM-0.8 108.6h1.3v1.3h-1.3zM-1.2 62.0h1.3v1.3h-1.3zM114.3 -0.4h1.3v1.3h-1.3zM35.5 -1.6h1.3v1.3h-1.3zM13.9 -2.5h1.3v1.3h-1.3z" fill="#9a9a9a"/>
<path d="M42.2 107.6h2.0v2.0h-2.0zM111.5 133.3h2.0v2.0h-2.0zM30.3 36.2h2.0v2.0h-2.0zM24.0 35.4h2.0v2.0h-2.0zM119.6 20.4h2.0v2.0h-2.0zM86.6 33.6h2.0v2.0h-2.0zM48.0 67.8h2.0v2.0h-2.0zM136.5 95.5h2.0v2.0h-2.0zM2.4 43.3h2.0v2.0h-2.0zM23.9 136.8h2.0v2.0h-2.0zM132.0 126.5h2.0v2.0h-2.0zM134.7 116.9h2.0v2.0h-2.0zM154.7 124.6h2.0v2.0h-2.0zM41.8 133.4h2.0v2.0h-2.0zM79.3 118.5h2.0v2.0h-2.0zM92.0 67.4h2.0v2.0h-2.0zM59.4 67.5h2.0v2.0h-2.0zM51.1 18.4h2.0v2.0h-2.0zM160.7 108.5h2.0v2.0h-2.0zM90.3 117.5h2.0v2.0h-2.0zM22.0 106.3h2.0v2.0h-2.0zM72.3 27.7h2.0v2.0h-2.0zM33.0 82.1h2.0v2.0h-2.0zM41.3 72.1h2.0v2.0h-2.0zM98.7 62.1h2.0v2.0h-2.0zM21.3 77.1h2.0v2.0h-2.0zM38.4 37.0h2.0v2.0h-2.0zM31.7 57.5h2.0v2.0h-2.0zM11.9 102.2h2.0v2.0h-2.0zM155.4 61.2h2.0v2.0h-2.0zM117.2 146.5h2.0v2.0h-2.0zM7.0 22.3h2.0v2.0h-2.0zM131.4 131.6h2.0v2.0h-2.0zM104.2 25.1h2.0v2.0h-2.0zM67.4 136.3h2.0v2.0h-2.0zM144.4 126.1h2.0v2.0h-2.0zM33.1 134.0h2.0v2.0h-2.0zM61.1 112.5h2.0v2.0h-2.0zM22.3 152.5h2.0v2.0h-2.0zM98.4 113.5h2.0v2.0h-2.0zM34.5 96.9h2.0v2.0h-2.0zM94.7 92.8h2.0v2.0h-2.0zM58.6 114.2h2.0v2.0h-2.0zM55.6 46.4h2.0v2.0h-2.0zM26.8 107.4h2.0v2.0h-2.0zM18.3 35.4h2.0v2.0h-2.0zM90.7 85.3h2.0v2.0h-2.0zM6.3 69.0h2.0v2.0h-2.0zM55.9 14.5h2.0v2.0h-2.0zM0.5 156.7h2.0v2.0h-2.0zM19.8 47.3h2.0v2.0h-2.0zM43.8 93.8h2.0v2.0h-2.0zM12.6 73.8h2.0v2.0h-2.0zM59.8 131.0h2.0v2.0h-2.0zM0.9 52.6h2.0v2.0h-2.0zM80.9 152.3h2.0v2.0h-2.0zM84.2 74.5h2.0v2.0h-2.0zM109.1 46.6h2.0v2.0h-2.0zM5.2 78.7h2.0v2.0h-2.0zM148.4 115.9h2.0v2.0h-2.0zM138.4 40.6h2.0v2.0h-2.0zM95.8 55.8h2.0v2.0h-2.0zM39.8 45.1h2.0v2.0h-2.0zM6.2 62.4h2.0v2.0h-2.0zM14.1 119.0h2.0v2.0h-2.0zM97.8 0.6h2.0v2.0h-2.0zM126.1 29.9h2.0v2.0h-2.0zM78.4 87.1h2.0v2.0h-2.0zM70.9 21.5h2.0v2.0h-2.0zM140.8 17.6h2.0v2.0h-2.0zM134.2 34.3h2.0v2.0h-2.0zM49.4 61.0h2.0v2.0h-2.0zM142.9 155.4h2.0v2.0h-2.0zM7.1 84.0h2.0v2.0h-2.0zM21.1 126.2h2.0v2.0h-2.0zM52.6 140.2h2.0v2.0h-2.0zM88.9 19.7h2.0v2.0h-2.0zM0.8 39.0h2.0v2.0h-2.0zM141.5 23.5h2.0v2.0h-2.0zM78.1 58.3h2.0v2.0h-2.0zM56.2 125.9h2.0v2.0h-2.0zM34.8 112.8h2.0v2.0h-2.0zM108.7 146.8h2.0v2.0h-2.0zM84.7 144.5h2.0v2.0h-2.0zM71.8 90.0h2.0v2.0h-2.0zM101.2 131.8h2.0v2.0h-2.0zM146.3 18.1h2.0v2.0h-2.0zM22.4 83.8h2.0v2.0h-2.0zM132.4 83.8h2.0v2.0h-2.0zM48.8 151.0h2.0v2.0h-2.0zM48.5 13.6h2.0v2.0h-2.0zM8.5 4.8h2.0v2.0h-2.0zM118.5 16.8h2.0v2.0h-2.0zM116.7 136.0h2.0v2.0h-2.0zM162.9 127.0h2.0v2.0h-2.0zM69.2 97.7h2.0v2.0h-2.0zM135.8 112.4h2.0v2.0h-2.0zM47.3 119.6h2.0v2.0h-2.0zM162.4 74.0h2.0v2.0h-2.0zM43.6 123.2h2.0v2.0h-2.0zM73.4 0.6h2.0v2.0h-2.0zM4.8 40.7h2.0v2.0h-2.0zM54.1 147.1h2.0v2.0h-2.0zM139.1 65.3h2.0v2.0h-2.0zM161.9 119.6h2.0v2.0h-2.0zM78.9 41.0h2.0v2.0h-2.0zM75.2 141.6h2.0v2.0h-2.0zM87.5 30.4h2.0v2.0h-2.0zM61.2 74.7h2.0v2.0h-2.0zM31.1 90.0h2.0v2.0h-2.0zM5.6 128.9h2.0v2.0h-2.0zM29.1 16.2h2.0v2.0h-2.0zM96.0 48.2h2.0v2.0h-2.0zM144.3 78.0h2.0v2.0h-2.0zM85.0 131.0h2.0v2.0h-2.0zM34.9 117.0h2.0v2.0h-2.0zM105.8 67.3h2.0v2.0h-2.0zM156.4 3.5h2.0v2.0h-2.0zM136.9 24.1h2.0v2.0h-2.0zM8.7 78.6h2.0v2.0h-2.0zM150.9 40.4h2.0v2.0h-2.0zM79.3 95.5h2.0v2.0h-2.0zM39.7 83.3h2.0v2.0h-2.0zM1.6 70.6h2.0v2.0h-2.0zM123.8 53.4h2.0v2.0h-2.0zM35.9 8.0h2.0v2.0h-2.0zM114.2 67.1h2.0v2.0h-2.0zM16.4 143.5h2.0v2.0h-2.0zM151.9 128.3h2.0v2.0h-2.0zM135.5 107.0h2.0v2.0h-2.0zM117.5 104.7h2.0v2.0h-2.0zM96.3 40.4h2.0v2.0h-2.0zM21.8 114.0h2.0v2.0h-2.0zM97.2 8.9h2.0v2.0h-2.0zM104.6 95.8h2.0v2.0h-2.0zM83.4 121.7h2.0v2.0h-2.0zM142.8 59.8h2.0v2.0h-2.0zM132.8 78.4h2.0v2.0h-2.0zM152.1 69.8h2.0v2.0h-2.0zM155.2 53.1h2.0v2.0h-2.0zM109.6 143.3h2.0v2.0h-2.0zM111.4 58.9h2.0v2.0h-2.0zM67.5 127.8h2.0v2.0h-2.0zM127.8 154.8h2.0v2.0h-2.0zM73.0 64.5h2.0v2.0h-2.0zM13.0 33.8h2.0v2.0h-2.0zM23.8 51.0h2.0v2.0h-2.0zM33.9 146.6h2.0v2.0h-2.0zM48.0 32.0h2.0v2.0h-2.0zM158.8 14.0h2.0v2.0h-2.0zM18.4 20.2h2.0v2.0h-2.0zM10.9 60.7h2.0v2.0h-2.0zM34.6 25.0h2.0v2.0h-2.0zM2.6 109.6h2.0v2.0h-2.0zM8.0 36.3h2.0v2.0h-2.0zM92.2 138.7h2.0v2.0h-2.0zM107.5 111.3h2.0v2.0h-2.0zM114.2 125.2h2.0v2.0h-2.0zM8.8 97.5h2.0v2.0h-2.0zM84.6 81.8h2.0v2.0h-2.0zM68.7 38.4h2.0v2.0h-2.0zM45.9 90.9h2.0v2.0h-2.0zM90.3 142.4h2.0v2.0h-2.0zM45.7 112.4h2.0v2.0h-2.0zM15.8 102.4h2.0v2.0h-2.0zM26.2 134.6h2.0v2.0h-2.0zM157.3 39.9h2.0v2.0h-2.0zM72.0 16.4h2.0v2.0h-2.0zM114.8 90.4h2.0v2.0h-2.0zM68.5 111.5h2.0v2.0h-2.0zM38.0 52.1h2.0v2.0h-2.0zM59.3 0.3h2.0v2.0h-2.0zM144.6 13.9h2.0v2.0h-2.0zM16.5 125.3h2.0v2.0h-2.0zM133.4 70.3h2.0v2.0h-2.0zM0.2 81.7h2.0v2.0h-2.0zM39.7 23.7h2.0v2.0h-2.0zM147.6 3.0h2.0v2.0h-2.0zM59.1 118.0h2.0v2.0h-2.0zM121.7 16.8h2.0v2.0h-2.0zM121.0 88.5h2.0v2.0h-2.0zM102.7 148.1h2.0v2.0h-2.0zM130.2 94.1h2.0v2.0h-2.0zM125.5 77.2h2.0v2.0h-2.0zM89.9 128.3h2.0v2.0h-2.0zM101.0 59.1h2.0v2.0h-2.0zM3.3 124.0h2.0v2.0h-2.0zM55.5 67.4h2.0v2.0h-2.0zM46.9 87.2h2.0v2.0h-2.0zM65.4 130.9h2.0v2.0h-2.0zM96.8 87.7h2.0v2.0h-2.0zM127.6 69.2h2.0v2.0h-2.0zM117.8 116.8h2.0v2.0h-2.0zM145.2 87.6h2.0v2.0h-2.0zM90.5 29.6h2.0v2.0h-2.0zM39.3 68.2h2.0v2.0h-2.0zM81.3 141.2h2.0v2.0h-2.0zM6.9 54.9h2.0v2.0h-2.0zM120.6 72.1h2.0v2.0h-2.0zM92.5 8.9h2.0v2.0h-2.0zM68.9 6.1h2.0v2.0h-2.0zM114.0 70.1h2.0v2.0h-2.0zM118.0 96.1h2.0v2.0h-2.0zM14.0 152.2h2.0v2.0h-2.0zM95.7 70.3h2.0v2.0h-2.0zM152.5 80.4h2.0v2.0h-2.0zM82.9 9.4h2.0v2.0h-2.0zM130.0 100.4h2.0v2.0h-2.0zM39.1 17.8h2.0v2.0h-2.0zM68.5 146.8h2.0v2.0h-2.0zM141.9 73.1h2.0v2.0h-2.0zM24.1 124.6h2.0v2.0h-2.0zM117.4 2.7h2.0v2.0h-2.0zM92.2 46.3h2.0v2.0h-2.0zM113.3 150.9h2.0v2.0h-2.0zM108.6 77.6h2.0v2.0h-2.0zM76.2 18.3h2.0v2.0h-2.0zM117.5 10.3h2.0v2.0h-2.0zM4.5 98.1h2.0v2.0h-2.0zM117.3 139.5h2.0v2.0h-2.0zM110.4 156.3h2.0v2.0h-2.0zM23.3 98.7h2.0v2.0h-2.0zM12.6 113.3h2.0v2.0h-2.0zM83.5 26.6h2.0v2.0h-2.0zM100.8 38.6h2.0v2.0h-2.0zM50.3 70.9h2.0v2.0h-2.0zM72.1 36.9h2.0v2.0h-2.0zM109.4 128.1h2.0v2.0h-2.0zM75.6 34.2h2.0v2.0h-2.0zM44.9 84.5h2.0v2.0h-2.0zM0.1 122.7h2.0v2.0h-2.0zM112.8 42.6h2.0v2.0h-2.0zM72.1 11.1h2.0v2.0h-2.0zM59.5 97.2h2.0v2.0h-2.0zM116.5 73.3h2.0v2.0h-2.0zM116.8 150.4h2.0v2.0h-2.0zM55.4 115.7h2.0v2.0h-2.0zM56.2 139.4h2.0v2.0h-2.0zM124.5 134.7h2.0v2.0h-2.0zM142.4 93.5h2.0v2.0h-2.0zM154.9 24.4h2.0v2.0h-2.0zM95.1 107.9h2.0v2.0h-2.0zM46.5 127.5h2.0v2.0h-2.0zM68.0 31.0h2.0v2.0h-2.0zM62.6 7.4h2.0v2.0h-2.0zM77.0 107.3h2.0v2.0h-2.0zM99.8 33.0h2.0v2.0h-2.0zM19.9 96.9h2.0v2.0h-2.0zM27.1 51.6h2.0v2.0h-2.0zM130.0 116.6h2.0v2.0h-2.0zM121.1 67.5h2.0v2.0h-2.0zM148.7 21.0h2.0v2.0h-2.0zM156.6 7.9h2.0v2.0h-2.0zM25.0 117.9h2.0v2.0h-2.0zM125.5 105.7h2.0v2.0h-2.0zM15.7 155.3h2.0v2.0h-2.0zM135.4 132.1h2.0v2.0h-2.0zM102.8 1.8h2.0v2.0h-2.0zM120.3 29.9h2.0v2.0h-2.0zM154.4 152.3h2.0v2.0h-2.0zM142.6 69.5h2.0v2.0h-2.0zM10.5 66.5h2.0v2.0h-2.0zM105.9 135.7h2.0v2.0h-2.0zM20.0 140.3h2.0v2.0h-2.0zM17.2 32.4h2.0v2.0h-2.0zM54.4 26.5h2.0v2.0h-2.0zM65.0 29.8h2.0v2.0h-2.0zM83.9 19.5h2.0v2.0h-2.0zM76.1 66.2h2.0v2.0h-2.0zM65.0 57.6h2.0v2.0h-2.0zM48.3 108.4h2.0v2.0h-2.0zM78.2 10.7h2.0v2.0h-2.0zM23.7 132.0h2.0v2.0h-2.0zM100.6 98.2h2.0v2.0h-2.0zM58.0 91.0h2.0v2.0h-2.0zM67.6 81.1h2.0v2.0h-2.0zM154.0 16.9h2.0v2.0h-2.0zM34.8 141.8h2.0v2.0h-2.0zM138.2 62.2h2.0v2.0h-2.0zM79.7 81.6h2.0v2.0h-2.0zM71.5 57.6h2.0v2.0h-2.0zM31.1 44.7h2.0v2.0h-2.0zM136.6 151.5h2.0v2.0h-2.0zM61.1 45.1h2.0v2.0h-2.0zM55.0 135.6h2.0v2.0h-2.0zM42.8 28.7h2.0v2.0h-2.0zM95.7 4.7h2.0v2.0h-2.0zM14.5 90.1h2.0v2.0h-2.0zM75.7 55.2h2.0v2.0h-2.0zM67.7 3.1h2.0v2.0h-2.0zM38.9 11.0h2.0v2.0h-2.0zM133.0 2.6h2.0v2.0h-2.0zM67.6 27.0h2.0v2.0h-2.0zM54.0 85.0h2.0v2.0h-2.0zM65.0 123.2h2.0v2.0h-2.0zM72.7 46.1h2.0v2.0h-2.0zM41.6 142.0h2.0v2.0h-2.0zM76.3 134.8h2.0v2.0h-2.0zM59.5 121.2h2.0v2.0h-2.0zM142.3 82.9h2.0v2.0h-2.0zM67.6 49.7h2.0v2.0h-2.0zM43.9 24.0h2.0v2.0h-2.0zM150.5 86.7h2.0v2.0h-2.0zM139.5 119.2h2.0v2.0h-2.0zM105.9 7.9h2.0v2.0h-2.0zM148.2 150.8h2.0v2.0h-2.0zM142.2 143.7h2.0v2.0h-2.0zM39.2 123.2h2.0v2.0h-2.0zM34.1 86.9h2.0v2.0h-2.0zM149.1 79.4h2.0v2.0h-2.0zM48.1 46.8h2.0v2.0h-2.0zM119.6 91.1h2.0v2.0h-2.0zM72.8 108.5h2.0v2.0h-2.0zM16.2 61.1h2.0v2.0h-2.0zM79.2 122.8h2.0v2.0h-2.0zM23.3 16.4h2.0v2.0h-2.0zM109.4 53.6h2.0v2.0h-2.0zM85.8 6.6h2.0v2.0h-2.0zM154.5 43.6h2.0v2.0h-2.0zM58.0 32.9h2.0v2.0h-2.0zM91.6 51.3h2.0v2.0h-2.0zM12.5 27.6h2.0v2.0h-2.0zM6.4 141.0h2.0v2.0h-2.0zM13.8 97.5h2.0v2.0h-2.0zM113.3 106.6h2.0v2.0h-2.0zM148.3 15.5h2.0v2.0h-2.0zM151.8 4.0h2.0v2.0h-2.0zM96.0 51.5h2.0v2.0h-2.0zM62.7 54.8h2.0v2.0h-2.0zM76.2 155.6h2.0v2.0h-2.0zM53.0 156.3h2.0v2.0h-2.0zM91.5 92.2h2.0v2.0h-2.0zM83.2 148.7h2.0v2.0h-2.0zM83.6 57.2h2.0v2.0h-2.0zM34.0 91.3h2.0v2.0h-2.0zM121.3 79.0h2.0v2.0h-2.0zM63.7 39.4h2.0v2.0h-2.0zM137.8 155.7h2.0v2.0h-2.0zM95.4 111.6h2.0v2.0h-2.0zM149.5 108.4h2.0v2.0h-2.0zM67.2 67.3h2.0v2.0h-2.0zM42.4 130.5h2.0v2.0h-2.0zM112.5 82.3h2.0v2.0h-2.0zM127.0 143.3h2.0v2.0h-2.0zM76.2 112.1h2.0v2.0h-2.0zM109.1 9.5h2.0v2.0h-2.0zM67.2 100.3h2.0v2.0h-2.0zM140.8 80.2h2.0v2.0h-2.0zM108.4 104.2h2.0v2.0h-2.0zM105.6 70.9h2.0v2.0h-2.0zM144.6 121.7h2.0v2.0h-2.0zM106.2 118.2h2.0v2.0h-2.0zM51.3 27.7h2.0v2.0h-2.0zM145.4 144.5h2.0v2.0h-2.0zM7.3 152.9h2.0v2.0h-2.0zM15.5 86.6h2.0v2.0h-2.0zM156.3 71.7h2.0v2.0h-2.0zM45.2 4.6h2.0v2.0h-2.0zM90.7 33.9h2.0v2.0h-2.0zM81.4 156.3h2.0v2.0h-2.0zM160.3 48.4h2.0v2.0h-2.0zM54.5 19.2h2.0v2.0h-2.0zM99.0 28.2h2.0v2.0h-2.0zM20.6 143.7h2.0v2.0h-2.0zM29.1 78.8h2.0v2.0h-2.0zM91.6 78.4h2.0v2.0h-2.0zM18.0 15.4h2.0v2.0h-2.0zM9.6 130.9h2.0v2.0h-2.0zM7.2 135.8h2.0v2.0h-2.0zM154.1 110.2h2.0v2.0h-2.0zM162.2 101.8h2.0v2.0h-2.0zM63.3 152.8h2.0v2.0h-2.0zM67.6 85.6h2.0v2.0h-2.0zM15.2 39.7h2.0v2.0h-2.0zM105.4 79.0h2.0v2.0h-2.0zM20.5 156.4h2.0v2.0h-2.0zM149.2 54.3h2.0v2.0h-2.0zM104.2 56.7h2.0v2.0h-2.0zM8.6 73.2h2.0v2.0h-2.0zM94.3 42.8h2.0v2.0h-2.0zM41.2 75.6h2.0v2.0h-2.0zM119.4 44.5h2.0v2.0h-2.0zM158.0 152.4h2.0v2.0h-2.0zM129.3 56.5h2.0v2.0h-2.0zM152.1 19.8h2.0v2.0h-2.0zM121.2 13.1h2.0v2.0h-2.0zM49.4 129.9h2.0v2.0h-2.0zM18.4 11.9h2.0v2.0h-2.0zM2.1 87.3h2.0v2.0h-2.0zM132.3 17.7h2.0v2.0h-2.0zM157.9 43.3h2.0v2.0h-2.0zM111.3 24.4h2.0v2.0h-2.0zM78.6 149.2h2.0v2.0h-2.0zM85.3 153.0h2.0v2.0h-2.0zM117.4 35.6h2.0v2.0h-2.0zM126.6 22.6h2.0v2.0h-2.0zM132.0 46.8h2.0v2.0h-2.0zM149.7 27.4h2.0v2.0h-2.0zM23.3 41.9h2.0v2.0h-2.0zM98.7 151.5h2.0v2.0h-2.0zM134.0 74.6h2.0v2.0h-2.0zM61.3 125.3h2.0v2.0h-2.0zM101.2 138.8h2.0v2.0h-2.0zM51.4 79.5h2.0v2.0h-2.0zM75.0 102.2h2.0v2.0h-2.0zM102.3 143.5h2.0v2.0h-2.0zM2.4 95.6h2.0v2.0h-2.0zM110.9 12.9h2.0v2.0h-2.0zM33.9 62.1h2.0v2.0h-2.0zM93.0 103.4h2.0v2.0h-2.0zM58.6 136.0h2.0v2.0h-2.0zM4.6 30.2h2.0v2.0h-2.0zM64.1 96.1h2.0v2.0h-2.0zM106.7 139.2h2.0v2.0h-2.0zM57.1 100.7h2.0v2.0h-2.0zM97.8 83.0h2.0v2.0h-2.0zM22.6 31.9h2.0v2.0h-2.0zM34.4 40.0h2.0v2.0h-2.0zM97.5 91.4h2.0v2.0h-2.0zM88.3 25.2h2.0v2.0h-2.0zM73.2 136.7h2.0v2.0h-2.0zM7.4 94.8h2.0v2.0h-2.0zM7.1 147.7h2.0v2.0h-2.0zM50.0 91.3h2.0v2.0h-2.0zM94.6 60.0h2.0v2.0h-2.0zM16.2 113.7h2.0v2.0h-2.0zM130.6 147.3h2.0v2.0h-2.0zM46.7 52.4h2.0v2.0h-2.0zM8.8 44.8h2.0v2.0h-2.0zM146.5 90.9h2.0v2.0h-2.0zM158.9 129.0h2.0v2.0h-2.0zM110.9 28.1h2.0v2.0h-2.0zM54.5 34.3h2.0v2.0h-2.0zM56.3 3.6h2.0v2.0h-2.0zM111.5 92.4h2.0v2.0h-2.0zM136.8 103.6h2.0v2.0h-2.0zM151.8 115.1h2.0v2.0h-2.0zM77.7 129.9h2.0v2.0h-2.0zM13.2 8.2h2.0v2.0h-2.0zM104.8 103.3h2.0v2.0h-2.0zM74.7 124.6h2.0v2.0h-2.0zM114.5 154.7h2.0v2.0h-2.0zM124.6 80.4h2.0v2.0h-2.0zM90.2 155.6h2.0v2.0h-2.0zM19.6 66.7h2.0v2.0h-2.0zM30.9 107.3h2.0v2.0h-2.0zM18.3 151.2h2.0v2.0h-2.0zM43.9 56.8h2.0v2.0h-2.0zM145.5 72.0h2.0v2.0h-2.0zM91.6 150.0h2.0v2.0h-2.0zM97.7 130.2h2.0v2.0h-2.0zM101.6 21.1h2.0v2.0h-2.0zM37.0 43.4h2.0v2.0h-2.0zM68.1 57.4h2.0v2.0h-2.0zM3.3 154.9h2.0v2.0h-2.0zM79.1 32.7h2.0v2.0h-2.0zM108.0 14.3h2.0v2.0h-2.0zM23.8 148.1h2.0v2.0h-2.0zM45.7 98.9h2.0v2.0h-2.0zM138.3 83.1h2.0v2.0h-2.0zM3.9 16.7h2.0v2.0h-2.0zM33.7 109.8h2.0v2.0h-2.0zM18.5 88.3h2.0v2.0h-2.0zM129.3 63.0h2.0v2.0h-2.0zM110.0 61.6h2.0v2.0h-2.0zM65.3 20.9h2.0v2.0h-2.0zM8.5 109.9h2.0v2.0h-2.0zM28.1 113.3h2.0v2.0h-2.0zM0.5 45.8h2.0v2.0h-2.0zM121.3 106.4h2.0v2.0h-2.0zM8.2 120.8h2.0v2.0h-2.0zM11.6 120.9h2.0v2.0h-2.0zM64.3 64.5h2.0v2.0h-2.0zM72.4 86.0h2.0v2.0h-2.0zM108.2 150.2h2.0v2.0h-2.0zM152.1 137.9h2.0v2.0h-2.0zM94.7 134.5h2.0v2.0h-2.0zM63.8 91.9h2.0v2.0h-2.0zM86.6 64.3h2.0v2.0h-2.0zM18.2 92.1h2.0v2.0h-2.0zM80.0 24.0h2.0v2.0h-2.0zM158.2 76.7h2.0v2.0h-2.0zM23.5 102.8h2.0v2.0h-2.0zM126.3 130.1h2.0v2.0h-2.0zM94.9 151.1h2.0v2.0h-2.0zM157.1 122.7h2.0v2.0h-2.0zM153.7 48.2h2.0v2.0h-2.0zM128.4 17.2h2.0v2.0h-2.0zM25.7 127.2h2.0v2.0h-2.0zM121.4 24.1h2.0v2.0h-2.0zM69.0 9.3h2.0v2.0h-2.0zM137.8 137.7h2.0v2.0h-2.0zM40.3 154.4h2.0v2.0h-2.0zM89.5 124.9h2.0v2.0h-2.0zM130.4 103.4h2.0v2.0h-2.0zM35.9 156.3h2.0v2.0h-2.0zM16.5 74.6h2.0v2.0h-2.0zM86.4 149.8h2.0v2.0h-2.0zM136.0 10.9h2.0v2.0h-2.0zM113.1 45.7h2.0v2.0h-2.0zM98.8 56.9h2.0v2.0h-2.0zM136.8 56.3h2.0v2.0h-2.0zM72.6 40.4h2.0v2.0h-2.0zM129.3 50.9h2.0v2.0h-2.0zM115.5 25.1h2.0v2.0h-2.0zM24.9 13.2h2.0v2.0h-2.0zM88.6 52.1h2.0v2.0h-2.0zM121.5 57.0h2.0v2.0h-2.0zM111.8 85.6h2.0v2.0h-2.0zM114.0 146.0h2.0v2.0h-2.0zM85.6 138.1h2.0v2.0h-2.0zM87.3 141.1h2.0v2.0h-2.0zM130.6 31.0h2.0v2.0h-2.0zM144.1 25.5h2.0v2.0h-2.0zM83.0 53.9h2.0v2.0h-2.0zM49.7 116.1h2.0v2.0h-2.0zM24.3 25.1h2.0v2.0h-2.0zM112.6 63.9h2.0v2.0h-2.0zM131.0 23.9h2.0v2.0h-2.0zM70.0 133.8h2.0v2.0h-2.0zM157.9 111.8h2.0v2.0h-2.0zM26.6 96.0h2.0v2.0h-2.0zM19.7 80.3h2.0v2.0h-2.0zM101.9 44.1h2.0v2.0h-2.0zM149.0 120.4h2.0v2.0h-2.0zM97.1 78.2h2.0v2.0h-2.0zM112.5 35.2h2.0v2.0h-2.0zM74.4 3.7h2.0v2.0h-2.0zM158.1 96.7h2.0v2.0h-2.0zM102.9 151.6h2.0v2.0h-2.0zM96.0 139.4h2.0v2.0h-2.0zM92.1 72.3h2.0v2.0h-2.0zM133.1 91.2h2.0v2.0h-2.0zM135.4 88.9h2.0v2.0h-2.0zM28.4 147.2h2.0v2.0h-2.0zM35.8 81.0h2.0v2.0h-2.0zM80.7 63.8h2.0v2.0h-2.0zM17.4 131.0h2.0v2.0h-2.0zM25.2 54.6h2.0v2.0h-2.0zM147.4 75.4h2.0v2.0h-2.0zM34.3 105.6h2.0v2.0h-2.0zM104.3 111.3h2.0v2.0h-2.0zM56.5 6.7h2.0v2.0h-2.0zM78.0 100.9h2.0v2.0h-2.0zM25.8 152.3h2.0v2.0h-2.0zM30.0 5.3h2.0v2.0h-2.0zM131.3 5.7h2.0v2.0h-2.0zM20.7 109.9h2.0v2.0h-2.0zM112.9 5.9h2.0v2.0h-2.0zM159.3 2.3h2.0v2.0h-2.0zM125.1 148.5h2.0v2.0h-2.0zM151.3 35.6h2.0v2.0h-2.0zM70.6 117.2h2.0v2.0h-2.0zM137.7 129.0h2.0v2.0h-2.0zM13.6 129.1h2.0v2.0h-2.0zM34.6 33.5h2.0v2.0h-2.0zM161.1 148.3h2.0v2.0h-2.0zM83.6 103.8h2.0v2.0h-2.0zM17.9 51.5h2.0v2.0h-2.0zM124.2 101.7h2.0v2.0h-2.0zM11.7 21.2h2.0v2.0h-2.0zM159.0 20.0h2.0v2.0h-2.0zM143.5 116.1h2.0v2.0h-2.0zM47.6 42.7h2.0v2.0h-2.0zM30.9 155.4h2.0v2.0h-2.0zM81.1 131.7h2.0v2.0h-2.0zM121.6 127.4h2.0v2.0h-2.0zM13.5 55.8h2.0v2.0h-2.0zM63.4 87.5h2.0v2.0h-2.0zM146.1 153.6h2.0v2.0h-2.0zM38.5 142.9h2.0v2.0h-2.0zM7.5 113.6h2.0v2.0h-2.0zM48.3 102.3h2.0v2.0h-2.0zM70.9 104.4h2.0v2.0h-2.0zM161.4 137.0h2.0v2.0h-2.0zM113.4 73.7h2.0v2.0h-2.0zM52.9 8.8h2.0v2.0h-2.0zM122.1 114.6h2.0v2.0h-2.0zM106.6 86.2h2.0v2.0h-2.0zM72.3 79.8h2.0v2.0h-2.0zM158.1 86.6h2.0v2.0h-2.0zM28.8 136.9h2.0v2.0h-2.0zM30.5 32.8h2.0v2.0h-2.0zM33.3 21.1h2.0v2.0h-2.0zM75.9 47.3h2.0v2.0h-2.0zM83.6 111.6h2.0v2.0h-2.0zM115.5 111.3h2.0v2.0h-2.0zM121.9 156.2h2.0v2.0h-2.0zM95.5 64.9h2.0v2.0h-2.0zM73.4 68.4h2.0v2.0h-2.0zM64.1 68.7h2.0v2.0h-2.0zM146.0 141.0h2.0v2.0h-2.0zM51.2 38.4h2.0v2.0h-2.0zM21.9 58.7h2.0v2.0h-2.0zM80.5 15.3h2.0v2.0h-2.0zM141.5 134.0h2.0v2.0h-2.0zM52.5 124.1h2.0v2.0h-2.0zM34.0 17.5h2.0v2.0h-2.0zM104.4 52.4h2.0v2.0h-2.0zM141.8 50.5h2.0v2.0h-2.0zM78.2 28.4h2.0v2.0h-2.0zM126.5 121.1h2.0v2.0h-2.0zM152.5 65.6h2.0v2.0h-2.0zM36.2 73.1h2.0v2.0h-2.0zM88.2 79.7h2.0v2.0h-2.0zM92.2 88.7h2.0v2.0h-2.0zM0.3 116.8h2.0v2.0h-2.0zM147.0 102.6h2.0v2.0h-2.0zM125.3 33.0h2.0v2.0h-2.0zM68.7 60.7h2.0v2.0h-2.0zM36.0 70.1h2.0v2.0h-2.0zM58.6 59.3h2.0v2.0h-2.0zM60.8 38.2h2.0v2.0h-2.0zM139.6 107.6h2.0v2.0h-2.0zM38.1 136.6h2.0v2.0h-2.0zM130.2 9.5h2.0v2.0h-2.0zM13.2 11.8h2.0v2.0h-2.0zM89.8 99.7h2.0v2.0h-2.0zM158.6 80.8h2.0v2.0h-2.0zM39.9 95.8h2.0v2.0h-2.0zM21.2 26.3h2.0v2.0h-2.0zM123.7 2.2h2.0v2.0h-2.0zM48.3 124.2h2.0v2.0h-2.0zM52.1 43.1h2.0v2.0h-2.0zM107.2 4.4h2.0v2.0h-2.0zM119.7 132.1h2.0v2.0h-2.0zM16.2 64.4h2.0v2.0h-2.0zM1.4 26.6h2.0v2.0h-2.0zM112.6 97.5h2.0v2.0h-2.0zM24.0 6.7h2.0v2.0h-2.0zM28.9 119.5h2.0v2.0h-2.0zM108.6 71.2h2.0v2.0h-2.0zM151.3 103.8h2.0v2.0h-2.0zM12.1 5.0h2.0v2.0h-2.0zM17.6 135.9h2.0v2.0h-2.0zM20.2 23.4h2.0v2.0h-2.0zM30.4 27.4h2.0v2.0h-2.0zM61.9 32.8h2.0v2.0h-2.0zM16.8 54.8h2.0v2.0h-2.0zM80.9 106.7h2.0v2.0h-2.0zM162.9 143.7h2.0v2.0h-2.0zM99.6 148.3h2.0v2.0h-2.0zM69.0 74.6h2.0v2.0h-2.0zM124.7 74.3h2.0v2.0h-2.0zM142.3 152.2h2.0v2.0h-2.0zM101.0 109.1h2.0v2.0h-2.0zM58.4 40.7h2.0v2.0h-2.0zM54.6 105.5h2.0v2.0h-2.0zM161.7 22.4h2.0v2.0h-2.0zM149.6 154.5h2.0v2.0h-2.0zM52.9 151.4h2.0v2.0h-2.0zM41.0 126.3h2.0v2.0h-2.0zM89.7 121.3h2.0v2.0h-2.0zM48.5 141.7h2.0v2.0h-2.0zM158.4 119.3h2.0v2.0h-2.0zM24.6 145.0h2.0v2.0h-2.0zM111.8 139.1h2.0v2.0h-2.0zM77.7 4.1h2.0v2.0h-2.0zM51.6 98.9h2.0v2.0h-2.0zM107.1 35.0h2.0v2.0h-2.0zM33.4 125.0h2.0v2.0h-2.0zM39.1 87.3h2.0v2.0h-2.0zM73.6 51.2h2.0v2.0h-2.0zM98.3 53.5h2.0v2.0h-2.0zM9.8 116.4h2.0v2.0h-2.0zM95.5 120.2h2.0v2.0h-2.0zM161.4 77.4h2.0v2.0h-2.0zM128.4 83.0h2.0v2.0h-2.0zM46.0 61.6h2.0v2.0h-2.0zM3.0 102.3h2.0v2.0h-2.0zM117.6 153.6h2.0v2.0h-2.0zM14.0 80.5h2.0v2.0h-2.0zM46.3 137.4h2.0v2.0h-2.0zM60.1 49.3h2.0v2.0h-2.0zM9.8 138.1h2.0v2.0h-2.0zM101.5 10.5h2.0v2.0h-2.0zM156.4 145.0h2.0v2.0h-2.0zM138.5 90.4h2.0v2.0h-2.0zM128.6 151.0h2.0v2.0h-2.0zM70.8 120.3h2.0v2.0h-2.0zM58.5 108.7h2.0v2.0h-2.0zM59.9 79.9h2.0v2.0h-2.0zM81.5 67.4h2.0v2.0h-2.0zM144.0 39.1h2.0v2.0h-2.0zM2.0 5.2h2.0v2.0h-2.0zM75.2 72.9h2.0v2.0h-2.0zM127.9 2.4h2.0v2.0h-2.0zM50.6 127.1h2.0v2.0h-2.0zM11.8 48.2h2.0v2.0h-2.0zM122.1 5.5h2.0v2.0h-2.0zM101.0 81.9h2.0v2.0h-2.0zM157.2 29.0h2.0v2.0h-2.0zM58.3 23.0h2.0v2.0h-2.0zM25.2 57.8h2.0v2.0h-2.0zM4.8 149.8h2.0v2.0h-2.0zM121.7 63.0h2.0v2.0h-2.0zM74.2 97.7h2.0v2.0h-2.0zM101.5 124.9h2.0v2.0h-2.0zM156.1 31.9h2.0v2.0h-2.0zM100.5 24.4h2.0v2.0h-2.0zM36.0 65.4h2.0v2.0h-2.0zM13.2 68.3h2.0v2.0h-2.0zM42.7 13.7h2.0v2.0h-2.0zM29.8 150.8h2.0v2.0h-2.0zM3.2 61.4h2.0v2.0h-2.0zM58.7 152.9h2.0v2.0h-2.0zM24.4 88.3h2.0v2.0h-2.0zM155.3 105.1h2.0v2.0h-2.0zM42.8 136.7h2.0v2.0h-2.0zM129.0 44.0h2.0v2.0h-2.0zM111.2 79.5h2.0v2.0h-2.0zM142.5 5.4h2.0v2.0h-2.0zM139.5 70.4h2.0v2.0h-2.0zM140.1 10.3h2.0v2.0h-2.0zM103.2 90.3h2.0v2.0h-2.0zM97.6 23.4h2.0v2.0h-2.0zM48.6 5.8h2.0v2.0h-2.0zM144.4 66.2h2.0v2.0h-2.0zM102.3 69.4h2.0v2.0h-2.0zM33.7 78.3h2.0v2.0h-2.0zM123.0 110.7h2.0v2.0h-2.0zM32.0 118.5h2.0v2.0h-2.0zM125.2 25.7h2.0v2.0h-2.0zM103.3 61.8h2.0v2.0h-2.0zM76.6 61.2h2.0v2.0h-2.0zM108.5 40.1h2.0v2.0h-2.0zM22.0 10.9h2.0v2.0h-2.0zM64.4 142.5h2.0v2.0h-2.0zM86.3 22.5h2.0v2.0h-2.0zM134.8 146.7h2.0v2.0h-2.0zM73.4 150.0h2.0v2.0h-2.0zM30.7 143.5h2.0v2.0h-2.0zM147.8 94.8h2.0v2.0h-2.0zM101.8 128.6h2.0v2.0h-2.0zM29.3 72.6h2.0v2.0h-2.0zM152.1 56.4h2.0v2.0h-2.0zM36.7 56.1h2.0v2.0h-2.0zM126.9 111.2h2.0v2.0h-2.0zM86.6 41.0h2.0v2.0h-2.0zM105.3 106.5h2.0v2.0h-2.0zM24.9 21.7h2.0v2.0h-2.0zM126.9 6.2h2.0v2.0h-2.0zM146.4 45.4h2.0v2.0h-2.0zM62.6 1.2h2.0v2.0h-2.0zM115.2 38.7h2.0v2.0h-2.0zM0.7 20.1h2.0v2.0h-2.0zM9.5 105.8h2.0v2.0h-2.0zM7.4 101.7h2.0v2.0h-2.0zM129.6 34.4h2.0v2.0h-2.0zM99.9 119.2h2.0v2.0h-2.0zM94.4 96.0h2.0v2.0h-2.0zM81.9 29.8h2.0v2.0h-2.0zM155.4 114.4h2.0v2.0h-2.0zM154.7 133.0h2.0v2.0h-2.0zM86.2 70.5h2.0v2.0h-2.0zM107.9 89.4h2.0v2.0h-2.0zM40.6 55.8h2.0v2.0h-2.0zM46.1 8.9h2.0v2.0h-2.0zM49.8 49.3h2.0v2.0h-2.0zM99.8 15.9h2.0v2.0h-2.0zM22.1 4.0h2.0v2.0h-2.0zM132.2 140.4h2.0v2.0h-2.0zM4.9 48.9h2.0v2.0h-2.0zM125.6 11.0h2.0v2.0h-2.0zM104.2 99.7h2.0v2.0h-2.0zM30.2 132.5h2.0v2.0h-2.0zM93.2 17.3h2.0v2.0h-2.0zM158.8 37.2h2.0v2.0h-2.0zM162.1 94.3h2.0v2.0h-2.0zM38.0 31.5h2.0v2.0h-2.0zM30.6 102.5h2.0v2.0h-2.0zM74.0 92.5h2.0v2.0h-2.0zM86.5 84.3h2.0v2.0h-2.0zM4.9 106.0h2.0v2.0h-2.0zM134.0 40.1h2.0v2.0h-2.0zM109.9 20.5h2.0v2.0h-2.0zM88.8 111.4h2.0v2.0h-2.0zM8.5 9.7h2.0v2.0h-2.0zM148.2 70.2h2.0v2.0h-2.0zM52.6 63.3h2.0v2.0h-2.0zM38.7 28.2h2.0v2.0h-2.0zM106.5 125.1h2.0v2.0h-2.0zM25.1 70.5h2.0v2.0h-2.0zM9.3 26.9h2.0v2.0h-2.0zM38.9 114.4h2.0v2.0h-2.0zM33.7 137.9h2.0v2.0h-2.0zM113.0 143.1h2.0v2.0h-2.0zM9.3 144.1h2.0v2.0h-2.0zM134.4 20.5h2.0v2.0h-2.0zM153.8 155.5h2.0v2.0h-2.0zM57.8 87.6h2.0v2.0h-2.0zM40.8 20.5h2.0v2.0h-2.0zM96.3 20.7h2.0v2.0h-2.0zM12.6 38.1h2.0v2.0h-2.0zM108.9 135.7h2.0v2.0h-2.0zM137.9 46.3h2.0v2.0h-2.0zM129.2 75.4h2.0v2.0h-2.0zM118.4 86.5h2.0v2.0h-2.0zM115.2 84.5h2.0v2.0h-2.0zM53.6 75.8h2.0v2.0h-2.0zM135.7 17.2h2.0v2.0h-2.0zM139.4 140.4h2.0v2.0h-2.0zM158.0 51.0h2.0v2.0h-2.0zM147.9 124.7h2.0v2.0h-2.0zM63.4 108.4h2.0v2.0h-2.0zM0.1 65.1h2.0v2.0h-2.0zM147.9 42.8h2.0v2.0h-2.0zM15.8 25.9h2.0v2.0h-2.0zM85.9 116.4h2.0v2.0h-2.0zM67.8 14.7h2.0v2.0h-2.0zM153.1 119.6h2.0v2.0h-2.0zM2.2 146.1h2.0v2.0h-2.0zM62.4 84.5h2.0v2.0h-2.0zM44.0 104.2h2.0v2.0h-2.0zM86.1 49.3h2.0v2.0h-2.0zM117.2 70.0h2.0v2.0h-2.0zM152.6 97.1h2.0v2.0h-2.0zM137.7 51.7h2.0v2.0h-2.0zM74.7 24.2h2.0v2.0h-2.0zM3.5 132.8h2.0v2.0h-2.0zM15.2 105.8h2.0v2.0h-2.0zM148.4 133.0h2.0v2.0h-2.0zM88.8 38.7h2.0v2.0h-2.0zM139.6 33.7h2.0v2.0h-2.0zM60.3 139.5h2.0v2.0h-2.0zM142.7 110.0h2.0v2.0h-2.0zM153.5 148.8h2.0v2.0h-2.0zM110.0 116.9h2.0v2.0h-2.0zM92.0 132.5h2.0v2.0h-2.0zM14.8 20.1h2.0v2.0h-2.0zM156.0 12.9h2.0v2.0h-2.0zM38.2 152.0h2.0v2.0h-2.0zM4.5 34.5h2.0v2.0h-2.0zM135.3 48.7h2.0v2.0h-2.0zM75.0 83.7h2.0v2.0h-2.0zM107.5 58.3h2.0v2.0h-2.0zM154.7 75.5h2.0v2.0h-2.0zM38.3 118.5h2.0v2.0h-2.0zM49.0 96.5h2.0v2.0h-2.0zM137.6 144.8h2.0v2.0h-2.0zM38.8 100.2h2.0v2.0h-2.0zM57.9 145.6h2.0v2.0h-2.0zM85.6 127.7h2.0v2.0h-2.0zM87.1 12.3h2.0v2.0h-2.0zM4.2 113.2h2.0v2.0h-2.0zM67.4 140.1h2.0v2.0h-2.0zM71.1 125.9h2.0v2.0h-2.0zM26.1 63.9h2.0v2.0h-2.0zM6.8 15.4h2.0v2.0h-2.0zM84.4 94.6h2.0v2.0h-2.0zM81.1 45.3h2.0v2.0h-2.0zM86.8 96.4h2.0v2.0h-2.0zM98.2 67.9h2.0v2.0h-2.0zM107.2 154.3h2.0v2.0h-2.0zM106.5 27.3h2.0v2.0h-2.0zM105.5 131.8h2.0v2.0h-2.0zM137.8 5.6h2.0v2.0h-2.0zM1.1 13.8h2.0v2.0h-2.0zM32.4 72.1h2.0v2.0h-2.0zM75.4 43.6h2.0v2.0h-2.0zM162.0 153.5h2.0v2.0h-2.0zM102.4 47.3h2.0v2.0h-2.0zM8.9 30.3h2.0v2.0h-2.0zM17.4 71.2h2.0v2.0h-2.0zM148.9 50.9h2.0v2.0h-2.0zM71.6 72.0h2.0v2.0h-2.0zM2.1 92.3h2.0v2.0h-2.0zM118.1 39.5h2.0v2.0h-2.0zM80.4 112.3h2.0v2.0h-2.0zM40.9 146.3h2.0v2.0h-2.0zM17.5 77.4h2.0v2.0h-2.0zM43.2 69.4h2.0v2.0h-2.0zM13.2 141.4h2.0v2.0h-2.0zM17.6 28.4h2.0v2.0h-2.0zM136.5 120.5h2.0v2.0h-2.0zM130.7 68.7h2.0v2.0h-2.0zM12.8 146.9h2.0v2.0h-2.0zM61.0 89.3h2.0v2.0h-2.0zM154.3 38.0h2.0v2.0h-2.0zM133.7 29.4h2.0v2.0h-2.0zM56.5 130.4h2.0v2.0h-2.0zM62.2 102.2h2.0v2.0h-2.0zM24.6 45.8h2.0v2.0h-2.0zM67.9 152.3h2.0v2.0h-2.0zM57.9 70.1h2.0v2.0h-2.0zM137.4 30.6h2.0v2.0h-2.0zM60.9 11.9h2.0v2.0h-2.0zM157.4 107.5h2.0v2.0h-2.0zM120.0 51.1h2.0v2.0h-2.0zM1.9 139.2h2.0v2.0h-2.0zM155.6 57.6h2.0v2.0h-2.0zM122.4 9.7h2.0v2.0h-2.0zM161.4 97.6h2.0v2.0h-2.0zM46.2 70.9h2.0v2.0h-2.0zM3.8 136.7h2.0v2.0h-2.0zM88.2 92.5h2.0v2.0h-2.0zM98.2 142.6h2.0v2.0h-2.0zM101.0 76.9h2.0v2.0h-2.0zM48.2 56.6h2.0v2.0h-2.0zM24.6 140.3h2.0v2.0h-2.0zM87.0 46.2h2.0v2.0h-2.0zM87.1 119.4h2.0v2.0h-2.0zM118.4 77.4h2.0v2.0h-2.0zM148.7 24.3h2.0v2.0h-2.0zM49.0 135.9h2.0v2.0h-2.0zM150.2 144.0h2.0v2.0h-2.0zM94.2 25.8h2.0v2.0h-2.0zM47.5 20.3h2.0v2.0h-2.0zM24.4 92.5h2.0v2.0h-2.0zM139.8 58.3h2.0v2.0h-2.0zM159.2 56.5h2.0v2.0h-2.0zM91.6 114.1h2.0v2.0h-2.0zM161.6 60.1h2.0v2.0h-2.0zM109.2 113.9h2.0v2.0h-2.0zM17.3 42.1h2.0v2.0h-2.0zM59.2 102.9h2.0v2.0h-2.0zM37.1 78.1h2.0v2.0h-2.0zM103.0 5.0h2.0v2.0h-2.0zM154.8 85.3h2.0v2.0h-2.0zM130.6 121.5h2.0v2.0h-2.0zM89.0 108.0h2.0v2.0h-2.0zM122.9 122.2h2.0v2.0h-2.0zM49.9 54.0h2.0v2.0h-2.0zM160.0 140.1h2.0v2.0h-2.0zM150.9 93.2h2.0v2.0h-2.0zM151.5 7.5h2.0v2.0h-2.0zM27.6 0.8h2.0v2.0h-2.0zM127.1 39.5h2.0v2.0h-2.0zM30.3 116.0h2.0v2.0h-2.0zM39.9 40.1h2.0v2.0h-2.0zM78.7 69.6h2.0v2.0h-2.0zM162.4 17.2h2.0v2.0h-2.0zM122.9 49.8h2.0v2.0h-2.0zM91.3 4.3h2.0v2.0h-2.0zM37.9 3.7h2.0v2.0h-2.0zM142.6 131.2h2.0v2.0h-2.0zM59.7 56.1h2.0v2.0h-2.0zM108.5 83.5h2.0v2.0h-2.0zM145.3 129.4h2.0v2.0h-2.0zM4.9 0.7h2.0v2.0h-2.0zM50.9 110.8h2.0v2.0h-2.0zM4.9 65.6h2.0v2.0h-2.0zM31.1 65.0h2.0v2.0h-2.0zM150.0 90.0h2.0v2.0h-2.0zM125.2 140.5h2.0v2.0h-2.0zM35.4 128.0h2.0v2.0h-2.0zM22.0 37.6h2.0v2.0h-2.0zM-2.3 108.5h2.0v2.0h-2.0zM0.5 -0.3h2.0v2.0h-2.0zM142.9 -1.6h2.0v2.0h-2.0zM-0.1 127.0h2.0v2.0h-2.0zM-0.6 74.0h2.0v2.0h-2.0zM-1.1 119.6h2.0v2.0h-2.0zM127.8 -2.2h2.0v2.0h-2.0zM110.4 -0.7h2.0v2.0h-2.0zM15.7 -1.7h2.0v2.0h-2.0zM76.2 -1.4h2.0v2.0h-2.0zM53.0 -0.7h2.0v2.0h-2.0zM137.8 -1.3h2.0v2.0h-2.0zM81.4 -0.7h2.0v2.0h-2.0zM-0.8 101.8h2.0v2.0h-2.0zM20.5 -0.6h2.0v2.0h-2.0zM114.5 -2.3h2.0v2.0h-2.0zM90.2 -1.4h2.0v2.0h-2.0zM3.3 -2.1h2.0v2.0h-2.0zM35.9 -0.7h2.0v2.0h-2.0zM-1.9 148.3h2.0v2.0h-2.0zM30.9 -1.6h2.0v2.0h-2.0zM-1.6 137.0h2.0v2.0h-2.0zM121.9 -0.8h2.0v2.0h-2.0zM-0.1 143.7h2.0v2.0h-2.0zM-1.3 22.4h2.0v2.0h-2.0zM149.6 -2.5h2.0v2.0h-2.0zM-1.6 77.4h2.0v2.0h-2.0zM-0.9 94.3h2.0v2.0h-2.0zM153.8 -1.5h2.0v2.0h-2.0zM-1.0 153.5h2.0v2.0h-2.0zM-1.6 97.6h2.0v2.0h-2.0zM-1.4 60.1h2.0v2.0h-2.0zM-0.6 17.2h2.0v2.0h-2.0z" fill="#8acc8a"/>
</pattern>
<mask id="bandmask" maskUnits="userSpaceOnUse" x="0" y="0" width="900" height="633"><g filter="url(#rough)"><g clip-path="url(#l1clip)"><polygon points="210,50 285,50 282,72 290,86 320,94 350,100 375,104 393,114 390,128 374,133 358,131 330,123 304,114 268,112 248,100 232,106 215,122 198,136 180,148 162,164 140,180 124,200 124,133 145,129 170,115 196,90 206,70" fill="#fff"/></g></g></mask>
<pattern id="medium" width="127" height="139" patternUnits="userSpaceOnUse">
<rect width="127" height="139" fill="#2c2c2c"/>
<path d="M6.9 130.2h1.6v1.6h-1.6zM46.1 109.4h1.6v1.6h-1.6zM29.6 62.9h1.6v1.6h-1.6zM47.1 101.4h1.6v1.6h-1.6zM119.8 70.3h1.6v1.6h-1.6zM71.9 48.5h1.6v1.6h-1.6zM29.5 132.0h1.6v1.6h-1.6zM14.0 130.7h1.6v1.6h-1.6zM83.5 10.0h1.6v1.6h-1.6zM114.5 14.2h1.6v1.6h-1.6zM71.8 16.6h1.6v1.6h-1.6zM125.6 43.0h1.6v1.6h-1.6zM110.8 8.5h1.6v1.6h-1.6zM84.6 9.4h1.6v1.6h-1.6zM3.8 79.4h1.6v1.6h-1.6zM124.8 95.2h1.6v1.6h-1.6zM108.6 109.1h1.6v1.6h-1.6zM66.2 10.7h1.6v1.6h-1.6zM66.9 25.7h1.6v1.6h-1.6zM66.9 49.2h1.6v1.6h-1.6zM63.4 27.5h1.6v1.6h-1.6zM89.5 58.0h1.6v1.6h-1.6zM61.7 10.9h1.6v1.6h-1.6zM61.8 77.5h1.6v1.6h-1.6zM123.5 78.0h1.6v1.6h-1.6zM17.1 41.7h1.6v1.6h-1.6zM42.6 97.6h1.6v1.6h-1.6zM119.2 135.7h1.6v1.6h-1.6zM120.6 128.6h1.6v1.6h-1.6zM109.0 130.0h1.6v1.6h-1.6zM2.6 68.1h1.6v1.6h-1.6zM75.0 95.3h1.6v1.6h-1.6zM77.8 85.2h1.6v1.6h-1.6zM118.5 12.0h1.6v1.6h-1.6zM65.9 133.4h1.6v1.6h-1.6zM4.0 15.5h1.6v1.6h-1.6zM110.4 133.0h1.6v1.6h-1.6zM3.1 4.4h1.6v1.6h-1.6zM105.4 95.7h1.6v1.6h-1.6zM66.0 80.6h1.6v1.6h-1.6zM96.2 112.3h1.6v1.6h-1.6zM0.1 9.4h1.6v1.6h-1.6zM100.9 135.6h1.6v1.6h-1.6zM105.8 56.7h1.6v1.6h-1.6zM42.6 48.2h1.6v1.6h-1.6zM1.9 107.1h1.6v1.6h-1.6zM33.3 81.4h1.6v1.6h-1.6zM66.8 46.6h1.6v1.6h-1.6zM85.7 63.2h1.6v1.6h-1.6zM29.8 122.6h1.6v1.6h-1.6zM22.3 20.8h1.6v1.6h-1.6zM32.2 66.6h1.6v1.6h-1.6zM99.5 46.3h1.6v1.6h-1.6zM30.3 91.0h1.6v1.6h-1.6zM33.1 72.7h1.6v1.6h-1.6zM32.4 121.9h1.6v1.6h-1.6zM23.4 32.3h1.6v1.6h-1.6zM38.3 45.8h1.6v1.6h-1.6zM92.3 93.7h1.6v1.6h-1.6zM100.4 75.1h1.6v1.6h-1.6zM10.0 106.1h1.6v1.6h-1.6zM31.0 30.3h1.6v1.6h-1.6zM52.6 137.6h1.6v1.6h-1.6zM47.1 49.5h1.6v1.6h-1.6zM115.7 137.7h1.6v1.6h-1.6zM49.2 18.8h1.6v1.6h-1.6zM100.3 108.7h1.6v1.6h-1.6zM42.9 109.9h1.6v1.6h-1.6zM48.2 39.9h1.6v1.6h-1.6zM75.3 103.1h1.6v1.6h-1.6zM60.4 113.7h1.6v1.6h-1.6zM1.8 69.4h1.6v1.6h-1.6zM48.3 9.0h1.6v1.6h-1.6zM116.1 19.9h1.6v1.6h-1.6zM26.1 122.1h1.6v1.6h-1.6zM122.0 129.5h1.6v1.6h-1.6zM43.4 129.4h1.6v1.6h-1.6zM18.0 99.3h1.6v1.6h-1.6zM120.1 26.8h1.6v1.6h-1.6zM17.2 94.3h1.6v1.6h-1.6zM112.1 101.0h1.6v1.6h-1.6zM120.6 63.1h1.6v1.6h-1.6zM47.3 16.7h1.6v1.6h-1.6zM34.7 130.5h1.6v1.6h-1.6zM9.1 25.7h1.6v1.6h-1.6zM44.1 6.8h1.6v1.6h-1.6zM39.0 25.4h1.6v1.6h-1.6zM15.6 73.2h1.6v1.6h-1.6zM68.6 78.9h1.6v1.6h-1.6zM96.8 73.2h1.6v1.6h-1.6zM120.3 11.3h1.6v1.6h-1.6zM28.3 10.7h1.6v1.6h-1.6zM39.3 105.7h1.6v1.6h-1.6zM117.4 70.0h1.6v1.6h-1.6zM20.4 45.9h1.6v1.6h-1.6zM72.2 40.9h1.6v1.6h-1.6zM100.7 135.2h1.6v1.6h-1.6zM58.4 83.8h1.6v1.6h-1.6zM107.4 64.6h1.6v1.6h-1.6zM24.2 131.2h1.6v1.6h-1.6zM124.2 3.4h1.6v1.6h-1.6zM96.9 55.7h1.6v1.6h-1.6zM6.6 22.6h1.6v1.6h-1.6zM22.0 102.4h1.6v1.6h-1.6zM26.9 2.7h1.6v1.6h-1.6zM27.9 111.1h1.6v1.6h-1.6zM63.4 90.7h1.6v1.6h-1.6zM59.1 25.4h1.6v1.6h-1.6zM1.9 42.3h1.6v1.6h-1.6zM5.3 36.2h1.6v1.6h-1.6zM78.6 51.3h1.6v1.6h-1.6zM60.1 86.7h1.6v1.6h-1.6zM40.3 49.6h1.6v1.6h-1.6zM112.3 80.8h1.6v1.6h-1.6zM53.0 75.1h1.6v1.6h-1.6zM58.5 46.2h1.6v1.6h-1.6zM116.0 32.4h1.6v1.6h-1.6zM118.9 118.6h1.6v1.6h-1.6zM112.0 22.6h1.6v1.6h-1.6zM64.6 136.9h1.6v1.6h-1.6zM36.7 23.8h1.6v1.6h-1.6zM91.9 32.7h1.6v1.6h-1.6zM74.1 21.9h1.6v1.6h-1.6zM120.3 39.5h1.6v1.6h-1.6zM12.3 95.5h1.6v1.6h-1.6zM44.1 77.7h1.6v1.6h-1.6zM63.1 128.2h1.6v1.6h-1.6zM65.3 52.7h1.6v1.6h-1.6zM0.2 69.0h1.6v1.6h-1.6zM34.2 79.8h1.6v1.6h-1.6zM80.2 64.3h1.6v1.6h-1.6zM11.4 69.2h1.6v1.6h-1.6zM61.2 89.1h1.6v1.6h-1.6zM123.2 38.9h1.6v1.6h-1.6zM56.2 11.8h1.6v1.6h-1.6zM101.6 32.6h1.6v1.6h-1.6zM105.3 110.9h1.6v1.6h-1.6zM32.3 125.5h1.6v1.6h-1.6zM64.0 59.2h1.6v1.6h-1.6zM70.5 131.5h1.6v1.6h-1.6zM62.2 67.0h1.6v1.6h-1.6zM36.9 116.9h1.6v1.6h-1.6zM63.9 47.6h1.6v1.6h-1.6zM25.0 29.9h1.6v1.6h-1.6zM105.9 111.7h1.6v1.6h-1.6zM124.3 127.5h1.6v1.6h-1.6zM87.0 110.8h1.6v1.6h-1.6zM90.4 112.5h1.6v1.6h-1.6zM101.8 24.5h1.6v1.6h-1.6zM103.5 42.2h1.6v1.6h-1.6zM31.0 127.8h1.6v1.6h-1.6zM2.9 71.1h1.6v1.6h-1.6zM43.6 110.1h1.6v1.6h-1.6zM77.5 126.6h1.6v1.6h-1.6zM118.4 89.6h1.6v1.6h-1.6zM8.2 92.7h1.6v1.6h-1.6zM13.9 136.5h1.6v1.6h-1.6zM110.7 43.2h1.6v1.6h-1.6zM23.6 96.5h1.6v1.6h-1.6zM96.3 136.9h1.6v1.6h-1.6zM79.1 17.4h1.6v1.6h-1.6zM92.3 8.1h1.6v1.6h-1.6zM110.2 106.8h1.6v1.6h-1.6zM99.7 121.4h1.6v1.6h-1.6zM72.3 131.1h1.6v1.6h-1.6zM81.2 68.4h1.6v1.6h-1.6zM48.8 49.1h1.6v1.6h-1.6zM2.9 22.4h1.6v1.6h-1.6zM101.0 31.8h1.6v1.6h-1.6zM83.0 107.8h1.6v1.6h-1.6zM88.2 71.7h1.6v1.6h-1.6zM40.1 37.9h1.6v1.6h-1.6zM23.8 90.0h1.6v1.6h-1.6zM87.2 131.0h1.6v1.6h-1.6zM42.0 128.9h1.6v1.6h-1.6zM115.8 40.4h1.6v1.6h-1.6zM120.9 86.1h1.6v1.6h-1.6zM122.2 107.6h1.6v1.6h-1.6zM42.3 38.8h1.6v1.6h-1.6zM66.4 67.8h1.6v1.6h-1.6zM4.5 119.9h1.6v1.6h-1.6zM68.0 65.8h1.6v1.6h-1.6zM94.6 34.7h1.6v1.6h-1.6zM25.3 80.7h1.6v1.6h-1.6zM30.6 45.5h1.6v1.6h-1.6zM8.9 7.3h1.6v1.6h-1.6zM45.1 73.2h1.6v1.6h-1.6zM120.5 88.9h1.6v1.6h-1.6zM52.6 56.5h1.6v1.6h-1.6zM29.9 65.9h1.6v1.6h-1.6zM121.8 17.0h1.6v1.6h-1.6zM55.0 95.3h1.6v1.6h-1.6zM96.8 77.2h1.6v1.6h-1.6zM81.4 130.4h1.6v1.6h-1.6zM114.6 34.9h1.6v1.6h-1.6zM68.7 138.6h1.6v1.6h-1.6zM67.0 26.3h1.6v1.6h-1.6zM97.3 7.9h1.6v1.6h-1.6zM19.1 76.6h1.6v1.6h-1.6zM34.6 100.0h1.6v1.6h-1.6zM92.3 44.4h1.6v1.6h-1.6zM97.4 90.0h1.6v1.6h-1.6zM89.7 63.5h1.6v1.6h-1.6zM54.9 14.8h1.6v1.6h-1.6zM60.3 132.7h1.6v1.6h-1.6zM112.8 7.8h1.6v1.6h-1.6zM9.0 37.4h1.6v1.6h-1.6zM88.2 60.8h1.6v1.6h-1.6zM16.2 59.2h1.6v1.6h-1.6zM72.8 103.5h1.6v1.6h-1.6zM51.2 90.3h1.6v1.6h-1.6zM86.5 85.6h1.6v1.6h-1.6zM5.9 98.8h1.6v1.6h-1.6zM16.3 7.6h1.6v1.6h-1.6zM60.2 2.3h1.6v1.6h-1.6zM9.3 54.3h1.6v1.6h-1.6zM59.5 14.7h1.6v1.6h-1.6zM121.1 118.4h1.6v1.6h-1.6zM61.8 81.7h1.6v1.6h-1.6zM40.1 136.7h1.6v1.6h-1.6zM15.2 42.3h1.6v1.6h-1.6zM28.1 120.3h1.6v1.6h-1.6zM64.6 57.1h1.6v1.6h-1.6zM50.6 123.3h1.6v1.6h-1.6zM32.7 110.0h1.6v1.6h-1.6zM89.9 62.3h1.6v1.6h-1.6zM46.5 60.7h1.6v1.6h-1.6zM57.5 43.9h1.6v1.6h-1.6zM79.2 57.1h1.6v1.6h-1.6zM38.6 107.4h1.6v1.6h-1.6zM57.8 65.8h1.6v1.6h-1.6zM111.7 63.2h1.6v1.6h-1.6zM47.8 124.8h1.6v1.6h-1.6zM124.0 109.2h1.6v1.6h-1.6zM51.0 93.3h1.6v1.6h-1.6zM94.1 41.2h1.6v1.6h-1.6zM91.9 132.0h1.6v1.6h-1.6zM83.3 93.0h1.6v1.6h-1.6zM55.3 90.8h1.6v1.6h-1.6zM28.7 107.1h1.6v1.6h-1.6zM68.5 136.2h1.6v1.6h-1.6zM43.4 98.9h1.6v1.6h-1.6zM2.1 57.8h1.6v1.6h-1.6zM97.3 36.1h1.6v1.6h-1.6zM77.9 30.7h1.6v1.6h-1.6zM50.6 138.1h1.6v1.6h-1.6zM25.0 126.9h1.6v1.6h-1.6zM7.6 81.0h1.6v1.6h-1.6zM104.3 116.4h1.6v1.6h-1.6zM49.7 82.1h1.6v1.6h-1.6zM90.4 105.9h1.6v1.6h-1.6zM94.8 80.5h1.6v1.6h-1.6zM31.9 98.0h1.6v1.6h-1.6zM71.3 75.7h1.6v1.6h-1.6zM125.4 19.0h1.6v1.6h-1.6zM99.1 45.1h1.6v1.6h-1.6zM92.3 132.1h1.6v1.6h-1.6zM34.9 78.8h1.6v1.6h-1.6zM67.1 68.8h1.6v1.6h-1.6zM21.2 86.9h1.6v1.6h-1.6zM113.5 92.2h1.6v1.6h-1.6zM36.7 112.0h1.6v1.6h-1.6zM53.3 20.2h1.6v1.6h-1.6zM76.9 64.0h1.6v1.6h-1.6zM67.3 137.8h1.6v1.6h-1.6zM72.3 132.5h1.6v1.6h-1.6zM44.8 105.5h1.6v1.6h-1.6zM9.6 41.8h1.6v1.6h-1.6zM87.9 95.9h1.6v1.6h-1.6zM105.2 52.8h1.6v1.6h-1.6zM34.8 49.8h1.6v1.6h-1.6zM68.2 3.4h1.6v1.6h-1.6zM47.6 91.4h1.6v1.6h-1.6zM18.9 43.2h1.6v1.6h-1.6zM110.8 129.8h1.6v1.6h-1.6zM31.7 24.7h1.6v1.6h-1.6zM15.0 11.9h1.6v1.6h-1.6zM100.8 102.7h1.6v1.6h-1.6zM33.6 68.0h1.6v1.6h-1.6zM88.3 3.9h1.6v1.6h-1.6zM104.0 119.5h1.6v1.6h-1.6zM26.8 97.8h1.6v1.6h-1.6zM88.8 46.9h1.6v1.6h-1.6zM111.6 30.4h1.6v1.6h-1.6zM60.2 43.6h1.6v1.6h-1.6zM56.1 112.9h1.6v1.6h-1.6zM72.4 84.7h1.6v1.6h-1.6zM125.4 31.1h1.6v1.6h-1.6zM28.3 86.1h1.6v1.6h-1.6zM19.1 134.0h1.6v1.6h-1.6zM43.3 61.2h1.6v1.6h-1.6zM54.8 115.0h1.6v1.6h-1.6zM116.2 94.1h1.6v1.6h-1.6zM21.8 49.4h1.6v1.6h-1.6zM89.7 30.0h1.6v1.6h-1.6zM112.1 121.2h1.6v1.6h-1.6zM28.8 50.6h1.6v1.6h-1.6zM29.1 99.9h1.6v1.6h-1.6zM6.0 96.7h1.6v1.6h-1.6zM8.0 116.9h1.6v1.6h-1.6zM69.0 81.1h1.6v1.6h-1.6zM12.1 6.2h1.6v1.6h-1.6zM44.8 136.9h1.6v1.6h-1.6zM76.2 119.9h1.6v1.6h-1.6zM8.0 14.2h1.6v1.6h-1.6zM2.7 96.9h1.6v1.6h-1.6zM22.4 37.9h1.6v1.6h-1.6zM84.7 96.7h1.6v1.6h-1.6zM40.9 65.0h1.6v1.6h-1.6zM36.7 78.0h1.6v1.6h-1.6zM45.2 50.0h1.6v1.6h-1.6zM31.6 40.6h1.6v1.6h-1.6zM33.1 2.3h1.6v1.6h-1.6zM39.4 82.3h1.6v1.6h-1.6zM34.1 15.7h1.6v1.6h-1.6zM107.4 65.2h1.6v1.6h-1.6zM65.0 43.4h1.6v1.6h-1.6zM112.7 104.8h1.6v1.6h-1.6zM79.1 91.7h1.6v1.6h-1.6zM87.9 69.6h1.6v1.6h-1.6zM-1.4 43.0h1.6v1.6h-1.6zM-2.2 95.2h1.6v1.6h-1.6zM52.6 -1.4h1.6v1.6h-1.6zM115.7 -1.3h1.6v1.6h-1.6zM64.6 -2.1h1.6v1.6h-1.6zM13.9 -2.5h1.6v1.6h-1.6zM96.3 -2.1h1.6v1.6h-1.6zM68.7 -0.4h1.6v1.6h-1.6zM40.1 -2.3h1.6v1.6h-1.6zM50.6 -0.9h1.6v1.6h-1.6zM-1.6 19.0h1.6v1.6h-1.6zM67.3 -1.2h1.6v1.6h-1.6zM-1.6 31.1h1.6v1.6h-1.6zM44.8 -2.1h1.6v1.6h-1.6z" fill="#707070"/>
<path d="M58.8 51.9h2.0v2.0h-2.0zM17.6 120.5h2.0v2.0h-2.0zM0.8 69.9h2.0v2.0h-2.0zM114.1 11.2h2.0v2.0h-2.0zM70.4 85.7h2.0v2.0h-2.0zM5.2 52.7h2.0v2.0h-2.0zM89.3 62.8h2.0v2.0h-2.0zM92.1 21.8h2.0v2.0h-2.0zM30.2 15.4h2.0v2.0h-2.0zM64.3 128.4h2.0v2.0h-2.0zM75.0 107.6h2.0v2.0h-2.0zM48.7 103.7h2.0v2.0h-2.0zM12.9 40.5h2.0v2.0h-2.0zM85.6 100.9h2.0v2.0h-2.0zM53.6 12.2h2.0v2.0h-2.0zM33.9 29.2h2.0v2.0h-2.0zM35.7 112.5h2.0v2.0h-2.0zM25.3 123.2h2.0v2.0h-2.0zM111.7 7.6h2.0v2.0h-2.0zM48.1 68.3h2.0v2.0h-2.0zM3.0 59.0h2.0v2.0h-2.0zM115.1 15.6h2.0v2.0h-2.0zM75.8 16.9h2.0v2.0h-2.0zM73.5 124.4h2.0v2.0h-2.0zM25.8 1.1h2.0v2.0h-2.0zM10.6 75.0h2.0v2.0h-2.0zM2.2 11.8h2.0v2.0h-2.0zM53.4 55.3h2.0v2.0h-2.0zM81.1 13.0h2.0v2.0h-2.0zM73.6 24.0h2.0v2.0h-2.0zM77.3 133.2h2.0v2.0h-2.0zM6.9 77.2h2.0v2.0h-2.0zM77.0 20.8h2.0v2.0h-2.0zM34.1 138.3h2.0v2.0h-2.0zM126.7 16.9h2.0v2.0h-2.0zM89.6 132.2h2.0v2.0h-2.0zM30.1 84.9h2.0v2.0h-2.0zM85.6 82.0h2.0v2.0h-2.0zM98.4 12.1h2.0v2.0h-2.0zM44.1 120.1h2.0v2.0h-2.0zM74.2 62.7h2.0v2.0h-2.0zM51.1 137.1h2.0v2.0h-2.0zM73.0 2.6h2.0v2.0h-2.0zM101.5 45.7h2.0v2.0h-2.0zM55.1 29.7h2.0v2.0h-2.0zM56.4 45.1h2.0v2.0h-2.0zM11.3 87.5h2.0v2.0h-2.0zM13.1 109.0h2.0v2.0h-2.0zM3.2 108.5h2.0v2.0h-2.0zM102.6 69.1h2.0v2.0h-2.0zM90.1 34.5h2.0v2.0h-2.0zM93.7 59.1h2.0v2.0h-2.0zM29.3 134.0h2.0v2.0h-2.0zM50.9 51.8h2.0v2.0h-2.0zM109.2 51.3h2.0v2.0h-2.0zM84.8 23.8h2.0v2.0h-2.0zM107.1 36.0h2.0v2.0h-2.0zM6.4 135.6h2.0v2.0h-2.0zM21.9 131.6h2.0v2.0h-2.0zM125.2 84.3h2.0v2.0h-2.0zM1.5 8.5h2.0v2.0h-2.0zM26.5 54.1h2.0v2.0h-2.0zM45.0 19.5h2.0v2.0h-2.0zM71.4 19.1h2.0v2.0h-2.0zM88.4 9.1h2.0v2.0h-2.0zM57.3 97.8h2.0v2.0h-2.0zM97.0 53.2h2.0v2.0h-2.0zM112.7 23.5h2.0v2.0h-2.0zM90.9 107.3h2.0v2.0h-2.0zM111.8 68.7h2.0v2.0h-2.0zM12.6 6.7h2.0v2.0h-2.0zM67.2 24.1h2.0v2.0h-2.0zM99.1 30.9h2.0v2.0h-2.0zM1.7 24.4h2.0v2.0h-2.0zM58.0 77.7h2.0v2.0h-2.0zM49.3 24.1h2.0v2.0h-2.0zM61.2 131.6h2.0v2.0h-2.0zM68.0 130.8h2.0v2.0h-2.0zM3.7 138.0h2.0v2.0h-2.0zM112.9 75.7h2.0v2.0h-2.0zM66.5 74.7h2.0v2.0h-2.0zM81.6 75.4h2.0v2.0h-2.0zM38.1 100.8h2.0v2.0h-2.0zM91.5 14.3h2.0v2.0h-2.0zM62.3 88.5h2.0v2.0h-2.0zM6.7 83.8h2.0v2.0h-2.0zM47.4 122.1h2.0v2.0h-2.0zM29.4 114.4h2.0v2.0h-2.0zM92.7 86.9h2.0v2.0h-2.0zM75.8 85.2h2.0v2.0h-2.0zM86.1 56.5h2.0v2.0h-2.0zM8.8 26.3h2.0v2.0h-2.0zM77.2 25.2h2.0v2.0h-2.0zM8.2 49.3h2.0v2.0h-2.0zM59.7 74.4h2.0v2.0h-2.0zM42.4 108.8h2.0v2.0h-2.0zM1.1 132.6h2.0v2.0h-2.0zM75.0 135.7h2.0v2.0h-2.0zM125.3 115.8h2.0v2.0h-2.0zM13.5 48.5h2.0v2.0h-2.0zM29.4 108.4h2.0v2.0h-2.0zM24.4 30.7h2.0v2.0h-2.0zM14.0 16.7h2.0v2.0h-2.0zM119.1 135.7h2.0v2.0h-2.0zM46.9 88.2h2.0v2.0h-2.0zM30.0 35.6h2.0v2.0h-2.0zM65.8 27.4h2.0v2.0h-2.0zM55.8 131.2h2.0v2.0h-2.0zM101.6 8.0h2.0v2.0h-2.0zM31.9 118.4h2.0v2.0h-2.0zM76.9 30.7h2.0v2.0h-2.0zM7.4 38.3h2.0v2.0h-2.0zM123.9 109.3h2.0v2.0h-2.0zM114.5 129.4h2.0v2.0h-2.0zM111.3 127.9h2.0v2.0h-2.0zM122.9 13.1h2.0v2.0h-2.0zM40.3 34.4h2.0v2.0h-2.0zM76.7 68.3h2.0v2.0h-2.0zM44.1 116.4h2.0v2.0h-2.0zM50.7 29.0h2.0v2.0h-2.0zM35.1 64.2h2.0v2.0h-2.0zM77.5 79.0h2.0v2.0h-2.0zM55.9 25.9h2.0v2.0h-2.0zM51.1 45.2h2.0v2.0h-2.0zM21.7 75.6h2.0v2.0h-2.0zM23.9 98.9h2.0v2.0h-2.0zM83.7 19.1h2.0v2.0h-2.0zM79.4 47.0h2.0v2.0h-2.0zM56.8 84.3h2.0v2.0h-2.0zM96.7 122.8h2.0v2.0h-2.0zM93.2 29.4h2.0v2.0h-2.0zM68.8 46.6h2.0v2.0h-2.0zM2.4 76.8h2.0v2.0h-2.0zM59.8 120.5h2.0v2.0h-2.0zM65.3 13.8h2.0v2.0h-2.0zM91.0 39.6h2.0v2.0h-2.0zM67.8 9.9h2.0v2.0h-2.0zM1.4 128.0h2.0v2.0h-2.0zM5.3 20.7h2.0v2.0h-2.0zM20.7 13.4h2.0v2.0h-2.0zM104.7 138.3h2.0v2.0h-2.0zM82.4 55.0h2.0v2.0h-2.0zM17.1 95.9h2.0v2.0h-2.0zM45.6 37.5h2.0v2.0h-2.0zM40.7 53.5h2.0v2.0h-2.0zM23.2 85.1h2.0v2.0h-2.0zM110.3 79.3h2.0v2.0h-2.0zM1.2 95.1h2.0v2.0h-2.0zM2.6 66.6h2.0v2.0h-2.0zM109.9 94.1h2.0v2.0h-2.0zM115.3 104.9h2.0v2.0h-2.0zM34.6 20.0h2.0v2.0h-2.0zM57.3 94.5h2.0v2.0h-2.0zM29.5 46.0h2.0v2.0h-2.0zM95.0 48.3h2.0v2.0h-2.0zM76.3 75.8h2.0v2.0h-2.0zM118.0 3.6h2.0v2.0h-2.0zM23.7 108.2h2.0v2.0h-2.0zM85.0 13.4h2.0v2.0h-2.0zM17.1 29.3h2.0v2.0h-2.0zM69.0 125.4h2.0v2.0h-2.0zM27.5 28.2h2.0v2.0h-2.0zM118.9 99.5h2.0v2.0h-2.0zM63.0 8.5h2.0v2.0h-2.0zM102.6 55.4h2.0v2.0h-2.0zM58.9 87.9h2.0v2.0h-2.0zM122.4 77.3h2.0v2.0h-2.0zM123.1 25.9h2.0v2.0h-2.0zM68.6 93.2h2.0v2.0h-2.0zM7.2 118.7h2.0v2.0h-2.0zM73.8 27.8h2.0v2.0h-2.0zM105.7 39.4h2.0v2.0h-2.0zM16.5 41.4h2.0v2.0h-2.0zM99.0 63.1h2.0v2.0h-2.0zM122.5 5.8h2.0v2.0h-2.0zM22.0 20.0h2.0v2.0h-2.0zM84.7 72.7h2.0v2.0h-2.0zM73.8 117.5h2.0v2.0h-2.0zM100.3 128.2h2.0v2.0h-2.0zM19.3 52.7h2.0v2.0h-2.0zM122.0 55.2h2.0v2.0h-2.0zM23.0 117.9h2.0v2.0h-2.0zM122.5 72.3h2.0v2.0h-2.0zM120.6 48.2h2.0v2.0h-2.0zM7.4 73.5h2.0v2.0h-2.0zM39.6 118.4h2.0v2.0h-2.0zM59.0 17.1h2.0v2.0h-2.0zM22.6 88.4h2.0v2.0h-2.0zM118.9 51.4h2.0v2.0h-2.0zM116.2 76.9h2.0v2.0h-2.0zM3.7 103.1h2.0v2.0h-2.0zM26.7 6.5h2.0v2.0h-2.0zM2.5 116.8h2.0v2.0h-2.0zM90.2 49.8h2.0v2.0h-2.0zM70.8 98.1h2.0v2.0h-2.0zM9.6 98.1h2.0v2.0h-2.0zM64.5 117.6h2.0v2.0h-2.0zM46.2 92.1h2.0v2.0h-2.0zM113.9 48.5h2.0v2.0h-2.0zM65.5 124.2h2.0v2.0h-2.0zM39.8 63.6h2.0v2.0h-2.0zM67.6 103.9h2.0v2.0h-2.0zM13.2 122.4h2.0v2.0h-2.0zM104.2 94.6h2.0v2.0h-2.0zM57.4 9.0h2.0v2.0h-2.0zM82.3 111.0h2.0v2.0h-2.0zM81.9 58.8h2.0v2.0h-2.0zM49.5 131.4h2.0v2.0h-2.0zM123.6 133.0h2.0v2.0h-2.0zM3.8 40.6h2.0v2.0h-2.0zM77.6 52.9h2.0v2.0h-2.0zM34.8 134.7h2.0v2.0h-2.0zM18.3 103.5h2.0v2.0h-2.0zM113.0 27.5h2.0v2.0h-2.0zM60.3 104.5h2.0v2.0h-2.0zM81.8 43.6h2.0v2.0h-2.0zM86.5 107.5h2.0v2.0h-2.0zM80.6 66.3h2.0v2.0h-2.0zM11.3 56.7h2.0v2.0h-2.0zM98.8 100.6h2.0v2.0h-2.0zM9.4 66.5h2.0v2.0h-2.0zM19.0 89.9h2.0v2.0h-2.0zM88.6 74.5h2.0v2.0h-2.0zM119.3 80.3h2.0v2.0h-2.0zM122.6 97.2h2.0v2.0h-2.0zM97.2 23.6h2.0v2.0h-2.0zM0.9 121.4h2.0v2.0h-2.0zM64.9 61.4h2.0v2.0h-2.0zM65.8 106.8h2.0v2.0h-2.0zM47.3 107.4h2.0v2.0h-2.0zM20.6 136.3h2.0v2.0h-2.0zM88.4 44.3h2.0v2.0h-2.0zM41.4 97.2h2.0v2.0h-2.0zM115.5 133.5h2.0v2.0h-2.0zM32.5 110.5h2.0v2.0h-2.0zM77.3 112.4h2.0v2.0h-2.0zM57.3 113.2h2.0v2.0h-2.0zM57.4 5.8h2.0v2.0h-2.0zM10.1 107.5h2.0v2.0h-2.0zM110.0 39.9h2.0v2.0h-2.0zM61.2 40.4h2.0v2.0h-2.0zM6.8 102.0h2.0v2.0h-2.0zM96.5 113.3h2.0v2.0h-2.0zM31.8 51.7h2.0v2.0h-2.0zM28.3 98.4h2.0v2.0h-2.0zM123.6 103.4h2.0v2.0h-2.0zM51.8 99.3h2.0v2.0h-2.0zM34.2 34.1h2.0v2.0h-2.0zM63.5 83.4h2.0v2.0h-2.0zM69.3 113.2h2.0v2.0h-2.0zM17.1 46.7h2.0v2.0h-2.0zM102.7 49.8h2.0v2.0h-2.0zM118.2 11.7h2.0v2.0h-2.0zM28.0 62.2h2.0v2.0h-2.0zM79.5 35.7h2.0v2.0h-2.0zM8.0 110.5h2.0v2.0h-2.0zM104.1 17.0h2.0v2.0h-2.0zM30.0 21.1h2.0v2.0h-2.0zM113.3 94.7h2.0v2.0h-2.0zM23.0 10.0h2.0v2.0h-2.0zM90.8 95.9h2.0v2.0h-2.0zM52.8 39.1h2.0v2.0h-2.0zM60.6 36.2h2.0v2.0h-2.0zM72.1 89.7h2.0v2.0h-2.0zM82.2 0.2h2.0v2.0h-2.0zM94.8 72.6h2.0v2.0h-2.0zM107.4 131.2h2.0v2.0h-2.0zM42.9 2.5h2.0v2.0h-2.0zM29.9 11.5h2.0v2.0h-2.0zM1.1 55.6h2.0v2.0h-2.0zM108.0 99.1h2.0v2.0h-2.0zM24.1 112.0h2.0v2.0h-2.0zM55.4 136.3h2.0v2.0h-2.0zM26.0 13.1h2.0v2.0h-2.0zM105.5 25.7h2.0v2.0h-2.0zM72.8 38.1h2.0v2.0h-2.0zM5.2 96.6h2.0v2.0h-2.0zM108.2 106.4h2.0v2.0h-2.0zM22.5 80.5h2.0v2.0h-2.0zM44.3 10.1h2.0v2.0h-2.0zM92.6 62.2h2.0v2.0h-2.0zM126.6 61.5h2.0v2.0h-2.0zM59.8 28.9h2.0v2.0h-2.0zM56.9 65.4h2.0v2.0h-2.0zM54.0 103.4h2.0v2.0h-2.0zM42.5 86.6h2.0v2.0h-2.0zM104.5 9.7h2.0v2.0h-2.0zM123.0 30.3h2.0v2.0h-2.0zM81.4 115.3h2.0v2.0h-2.0zM65.3 43.7h2.0v2.0h-2.0zM19.3 9.7h2.0v2.0h-2.0zM5.7 6.7h2.0v2.0h-2.0zM92.0 82.2h2.0v2.0h-2.0zM8.5 130.2h2.0v2.0h-2.0zM125.2 57.6h2.0v2.0h-2.0zM115.8 55.2h2.0v2.0h-2.0zM7.1 56.4h2.0v2.0h-2.0zM65.6 47.9h2.0v2.0h-2.0zM20.0 25.1h2.0v2.0h-2.0zM45.3 77.1h2.0v2.0h-2.0zM43.3 132.5h2.0v2.0h-2.0zM15.4 53.0h2.0v2.0h-2.0zM44.9 54.1h2.0v2.0h-2.0zM61.3 94.1h2.0v2.0h-2.0zM111.4 15.9h2.0v2.0h-2.0zM36.8 59.0h2.0v2.0h-2.0zM43.0 27.7h2.0v2.0h-2.0zM73.5 130.0h2.0v2.0h-2.0zM116.9 23.3h2.0v2.0h-2.0zM96.5 92.1h2.0v2.0h-2.0zM121.6 42.7h2.0v2.0h-2.0zM100.1 108.4h2.0v2.0h-2.0zM108.3 111.1h2.0v2.0h-2.0zM28.7 50.5h2.0v2.0h-2.0zM35.6 120.2h2.0v2.0h-2.0zM0.2 42.4h2.0v2.0h-2.0zM83.0 88.6h2.0v2.0h-2.0zM65.0 4.3h2.0v2.0h-2.0zM105.1 64.7h2.0v2.0h-2.0zM82.8 50.3h2.0v2.0h-2.0zM107.7 14.4h2.0v2.0h-2.0zM110.1 34.3h2.0v2.0h-2.0zM65.3 78.2h2.0v2.0h-2.0zM91.4 7.1h2.0v2.0h-2.0zM67.9 69.6h2.0v2.0h-2.0zM124.3 22.5h2.0v2.0h-2.0zM76.1 102.6h2.0v2.0h-2.0zM91.1 0.3h2.0v2.0h-2.0zM6.9 32.9h2.0v2.0h-2.0zM57.4 106.1h2.0v2.0h-2.0zM3.3 28.6h2.0v2.0h-2.0zM106.7 43.9h2.0v2.0h-2.0zM2.2 83.8h2.0v2.0h-2.0zM15.4 101.5h2.0v2.0h-2.0zM108.8 10.4h2.0v2.0h-2.0zM59.9 81.8h2.0v2.0h-2.0zM111.0 132.4h2.0v2.0h-2.0zM11.5 139.0h2.0v2.0h-2.0zM42.1 50.0h2.0v2.0h-2.0zM62.9 71.3h2.0v2.0h-2.0zM97.4 59.5h2.0v2.0h-2.0zM95.2 106.8h2.0v2.0h-2.0zM98.2 133.3h2.0v2.0h-2.0zM55.4 81.3h2.0v2.0h-2.0zM118.3 94.8h2.0v2.0h-2.0zM60.1 134.6h2.0v2.0h-2.0zM81.1 107.9h2.0v2.0h-2.0zM98.3 69.4h2.0v2.0h-2.0zM52.2 9.2h2.0v2.0h-2.0zM89.6 90.0h2.0v2.0h-2.0zM112.5 101.2h2.0v2.0h-2.0zM101.6 20.5h2.0v2.0h-2.0zM34.5 74.1h2.0v2.0h-2.0zM89.3 121.6h2.0v2.0h-2.0zM4.2 122.9h2.0v2.0h-2.0zM105.2 134.7h2.0v2.0h-2.0zM116.2 116.4h2.0v2.0h-2.0zM37.8 90.6h2.0v2.0h-2.0zM110.9 1.1h2.0v2.0h-2.0zM11.6 126.2h2.0v2.0h-2.0zM48.2 33.9h2.0v2.0h-2.0zM44.9 137.8h2.0v2.0h-2.0zM85.8 37.7h2.0v2.0h-2.0zM118.2 58.5h2.0v2.0h-2.0zM126.6 79.7h2.0v2.0h-2.0zM34.9 4.8h2.0v2.0h-2.0zM73.7 79.8h2.0v2.0h-2.0zM34.8 12.9h2.0v2.0h-2.0zM55.6 117.5h2.0v2.0h-2.0zM59.1 32.6h2.0v2.0h-2.0zM123.0 81.1h2.0v2.0h-2.0zM108.5 82.7h2.0v2.0h-2.0zM108.7 56.4h2.0v2.0h-2.0zM80.3 83.0h2.0v2.0h-2.0zM78.0 122.6h2.0v2.0h-2.0zM50.1 93.6h2.0v2.0h-2.0zM62.8 23.0h2.0v2.0h-2.0zM24.7 70.2h2.0v2.0h-2.0zM79.6 129.5h2.0v2.0h-2.0zM69.3 3.5h2.0v2.0h-2.0zM41.9 16.4h2.0v2.0h-2.0zM76.9 42.3h2.0v2.0h-2.0zM118.5 62.5h2.0v2.0h-2.0zM115.0 87.8h2.0v2.0h-2.0zM47.4 28.9h2.0v2.0h-2.0zM53.4 127.7h2.0v2.0h-2.0zM126.9 89.0h2.0v2.0h-2.0zM102.8 84.5h2.0v2.0h-2.0zM42.8 91.0h2.0v2.0h-2.0zM119.6 20.2h2.0v2.0h-2.0zM78.5 118.7h2.0v2.0h-2.0zM40.8 79.1h2.0v2.0h-2.0zM53.3 88.9h2.0v2.0h-2.0zM111.6 123.4h2.0v2.0h-2.0zM64.6 36.2h2.0v2.0h-2.0zM104.4 117.6h2.0v2.0h-2.0zM100.6 92.8h2.0v2.0h-2.0zM72.6 51.1h2.0v2.0h-2.0zM12.9 12.3h2.0v2.0h-2.0zM24.0 40.3h2.0v2.0h-2.0zM115.0 7.5h2.0v2.0h-2.0zM103.3 125.8h2.0v2.0h-2.0zM30.4 78.8h2.0v2.0h-2.0zM16.5 75.7h2.0v2.0h-2.0zM124.7 52.2h2.0v2.0h-2.0zM101.4 25.8h2.0v2.0h-2.0zM19.6 123.5h2.0v2.0h-2.0zM31.7 7.1h2.0v2.0h-2.0zM109.6 24.8h2.0v2.0h-2.0zM55.9 75.1h2.0v2.0h-2.0zM61.2 123.7h2.0v2.0h-2.0zM106.1 89.2h2.0v2.0h-2.0zM52.6 109.9h2.0v2.0h-2.0zM56.4 34.6h2.0v2.0h-2.0zM16.1 7.7h2.0v2.0h-2.0zM121.3 111.6h2.0v2.0h-2.0zM85.1 62.1h2.0v2.0h-2.0zM51.0 115.4h2.0v2.0h-2.0zM88.1 29.8h2.0v2.0h-2.0zM126.5 32.7h2.0v2.0h-2.0zM61.8 2.3h2.0v2.0h-2.0zM59.7 61.9h2.0v2.0h-2.0zM96.6 96.1h2.0v2.0h-2.0zM69.4 101.1h2.0v2.0h-2.0zM31.5 24.6h2.0v2.0h-2.0zM114.7 33.1h2.0v2.0h-2.0zM91.5 127.9h2.0v2.0h-2.0zM20.2 55.8h2.0v2.0h-2.0zM6.8 69.2h2.0v2.0h-2.0zM72.8 75.6h2.0v2.0h-2.0zM79.6 2.5h2.0v2.0h-2.0zM111.1 19.7h2.0v2.0h-2.0zM46.8 14.6h2.0v2.0h-2.0zM46.2 50.6h2.0v2.0h-2.0zM14.0 83.8h2.0v2.0h-2.0zM109.6 120.1h2.0v2.0h-2.0zM3.7 87.2h2.0v2.0h-2.0zM10.7 30.7h2.0v2.0h-2.0zM62.6 50.7h2.0v2.0h-2.0zM39.8 38.2h2.0v2.0h-2.0zM79.8 9.1h2.0v2.0h-2.0zM23.8 22.8h2.0v2.0h-2.0zM45.1 66.6h2.0v2.0h-2.0zM20.6 33.0h2.0v2.0h-2.0zM107.4 67.7h2.0v2.0h-2.0zM68.8 36.9h2.0v2.0h-2.0zM83.0 125.0h2.0v2.0h-2.0zM91.0 66.9h2.0v2.0h-2.0zM115.4 61.7h2.0v2.0h-2.0zM91.9 92.9h2.0v2.0h-2.0zM38.0 28.3h2.0v2.0h-2.0zM109.6 63.1h2.0v2.0h-2.0zM95.1 78.6h2.0v2.0h-2.0zM38.9 9.7h2.0v2.0h-2.0zM114.6 113.1h2.0v2.0h-2.0zM112.7 53.0h2.0v2.0h-2.0zM10.4 44.3h2.0v2.0h-2.0zM60.6 66.8h2.0v2.0h-2.0zM111.4 42.8h2.0v2.0h-2.0zM67.3 39.9h2.0v2.0h-2.0zM20.2 98.7h2.0v2.0h-2.0zM20.2 45.4h2.0v2.0h-2.0zM29.4 124.1h2.0v2.0h-2.0zM123.2 91.6h2.0v2.0h-2.0zM48.2 96.8h2.0v2.0h-2.0zM90.3 136.0h2.0v2.0h-2.0zM16.0 107.2h2.0v2.0h-2.0zM123.6 17.6h2.0v2.0h-2.0zM69.7 108.1h2.0v2.0h-2.0zM65.4 114.0h2.0v2.0h-2.0zM44.6 126.0h2.0v2.0h-2.0zM64.0 96.8h2.0v2.0h-2.0zM9.6 7.9h2.0v2.0h-2.0zM94.0 5.0h2.0v2.0h-2.0zM83.8 8.1h2.0v2.0h-2.0zM21.2 62.1h2.0v2.0h-2.0zM54.1 70.6h2.0v2.0h-2.0zM52.8 67.2h2.0v2.0h-2.0zM16.0 113.7h2.0v2.0h-2.0zM123.9 35.3h2.0v2.0h-2.0zM70.9 7.4h2.0v2.0h-2.0zM27.7 39.4h2.0v2.0h-2.0zM63.6 137.1h2.0v2.0h-2.0zM34.2 101.1h2.0v2.0h-2.0zM64.8 58.1h2.0v2.0h-2.0zM16.8 80.3h2.0v2.0h-2.0zM40.2 123.5h2.0v2.0h-2.0zM71.0 121.2h2.0v2.0h-2.0zM101.9 42.3h2.0v2.0h-2.0zM70.3 59.4h2.0v2.0h-2.0zM15.0 87.5h2.0v2.0h-2.0zM43.6 43.3h2.0v2.0h-2.0zM36.7 42.3h2.0v2.0h-2.0zM23.7 92.2h2.0v2.0h-2.0zM94.0 34.3h2.0v2.0h-2.0zM97.4 39.8h2.0v2.0h-2.0zM80.0 28.7h2.0v2.0h-2.0zM45.7 6.8h2.0v2.0h-2.0zM66.7 88.1h2.0v2.0h-2.0zM116.6 124.4h2.0v2.0h-2.0zM14.6 132.6h2.0v2.0h-2.0zM50.8 72.0h2.0v2.0h-2.0zM12.8 66.9h2.0v2.0h-2.0zM93.9 41.8h2.0v2.0h-2.0zM16.0 34.0h2.0v2.0h-2.0zM27.5 18.5h2.0v2.0h-2.0zM62.2 107.3h2.0v2.0h-2.0zM86.3 126.9h2.0v2.0h-2.0zM82.5 103.8h2.0v2.0h-2.0zM72.3 111.2h2.0v2.0h-2.0zM8.1 87.1h2.0v2.0h-2.0zM84.4 78.6h2.0v2.0h-2.0zM80.6 133.1h2.0v2.0h-2.0zM96.2 119.2h2.0v2.0h-2.0zM106.6 103.3h2.0v2.0h-2.0zM87.2 113.0h2.0v2.0h-2.0zM31.6 127.4h2.0v2.0h-2.0zM97.9 74.0h2.0v2.0h-2.0zM38.6 22.6h2.0v2.0h-2.0zM34.1 -0.7h2.0v2.0h-2.0zM-0.3 16.9h2.0v2.0h-2.0zM51.1 -1.9h2.0v2.0h-2.0zM-1.8 84.3h2.0v2.0h-2.0zM3.7 -1.0h2.0v2.0h-2.0zM-1.7 115.8h2.0v2.0h-2.0zM104.7 -0.7h2.0v2.0h-2.0zM-0.4 61.5h2.0v2.0h-2.0zM-1.8 57.6h2.0v2.0h-2.0zM11.5 -0.0h2.0v2.0h-2.0zM44.9 -1.2h2.0v2.0h-2.0zM-0.4 79.7h2.0v2.0h-2.0zM-0.1 89.0h2.0v2.0h-2.0zM-2.3 52.2h2.0v2.0h-2.0zM-0.5 32.7h2.0v2.0h-2.0zM63.6 -1.9h2.0v2.0h-2.0z" fill="#86c986"/>
</pattern>
<mask id="medmask" maskUnits="userSpaceOnUse" x="0" y="0" width="900" height="633"><g filter="url(#rough)"><g clip-path="url(#l1clip)"><polygon points="285,50 475,50 440,90 420,104 375,104 350,100 320,94 290,86 282,72" fill="#fff"/></g></g></mask>
<clipPath id="mclip"><rect x="125" y="52" width="591" height="544"/></clipPath>
</defs>
<g clip-path="url(#mclip)">
<rect x="125" y="52" width="591" height="544" fill="#fff"/>
<g stroke="#92cd92" stroke-width="2" stroke-dasharray="2 0.9"><line x1="186.8" y1="291.2" x2="192.4" y2="329.5"/><line x1="314" y1="276" x2="377" y2="378"/><line x1="200" y1="386" x2="203" y2="398"/><line x1="228.7" y1="423.6" x2="326.5" y2="439.4"/><line x1="482" y1="330" x2="473" y2="355"/><line x1="138" y1="540" x2="162" y2="525"/><line x1="397" y1="370.5" x2="409" y2="363"/><line x1="442" y1="352" x2="450" y2="355"/></g><g stroke="#92cd92" stroke-width="2" stroke-dasharray="11 2"><line x1="231.7" y1="432.1" x2="320.4" y2="458.4"/></g><g stroke="#92cd92" stroke-width="1.8" stroke-dasharray="6 1"><line x1="134.9" y1="260.7" x2="126.4" y2="293.3"/></g>
<rect x="125" y="52" width="591" height="544" fill="url(#dots)" mask="url(#landmask)"/>
<rect x="125" y="52" width="591" height="544" fill="url(#dotsb)" mask="url(#landmaskb)"/>
<path d="M492.0 585.0h1.0v1.0h-1.0zM508.0 581.0h1.0v1.0h-1.0zM512.0 578.0h1.0v1.0h-1.0zM512.0 588.0h1.0v1.0h-1.0zM493.0 588.0h1.0v1.0h-1.0zM515.0 579.0h1.0v1.0h-1.0zM482.0 572.0h1.0v1.0h-1.0zM505.0 590.0h1.0v1.0h-1.0zM509.0 574.0h1.0v1.0h-1.0zM491.0 579.0h1.0v1.0h-1.0zM496.0 573.0h1.0v1.0h-1.0zM509.0 585.0h1.0v1.0h-1.0zM521.0 586.0h1.0v1.0h-1.0zM484.0 582.0h1.0v1.0h-1.0zM516.0 587.0h1.0v1.0h-1.0zM489.0 583.0h1.0v1.0h-1.0zM483.0 576.0h1.0v1.0h-1.0zM487.0 575.0h1.0v1.0h-1.0zM483.0 586.0h1.0v1.0h-1.0zM492.0 589.0h1.0v1.0h-1.0zM503.0 584.0h1.0v1.0h-1.0zM513.0 576.0h1.0v1.0h-1.0zM493.0 573.0h1.0v1.0h-1.0zM512.0 579.0h1.0v1.0h-1.0zM486.0 578.0h1.0v1.0h-1.0zM495.0 590.0h1.0v1.0h-1.0zM486.0 575.0h1.0v1.0h-1.0zM517.0 587.0h1.0v1.0h-1.0zM517.0 584.0h1.0v1.0h-1.0zM494.0 582.0h1.0v1.0h-1.0zM491.0 589.0h1.0v1.0h-1.0zM508.0 581.0h1.0v1.0h-1.0zM505.0 586.0h1.0v1.0h-1.0zM514.0 584.0h1.0v1.0h-1.0zM502.0 587.0h1.0v1.0h-1.0zM506.0 580.0h1.0v1.0h-1.0zM483.0 574.0h1.0v1.0h-1.0zM492.0 587.0h1.0v1.0h-1.0zM482.0 587.0h1.0v1.0h-1.0zM486.0 589.0h1.0v1.0h-1.0zM520.0 588.0h1.0v1.0h-1.0zM496.0 590.0h1.0v1.0h-1.0zM520.0 582.0h1.0v1.0h-1.0zM517.0 575.0h1.0v1.0h-1.0zM493.0 577.0h1.0v1.0h-1.0zM522.0 583.0h1.0v1.0h-1.0zM503.0 583.0h1.0v1.0h-1.0zM520.0 581.0h1.0v1.0h-1.0zM497.0 575.0h1.0v1.0h-1.0zM492.0 574.0h1.0v1.0h-1.0zM493.0 585.0h1.0v1.0h-1.0zM505.0 577.0h1.0v1.0h-1.0zM525.0 573.0h1.0v1.0h-1.0zM525.0 588.0h1.0v1.0h-1.0zM524.0 579.0h1.0v1.0h-1.0zM508.0 577.0h1.0v1.0h-1.0zM519.0 572.0h1.0v1.0h-1.0zM504.0 587.0h1.0v1.0h-1.0zM514.0 584.0h1.0v1.0h-1.0zM524.0 579.0h1.0v1.0h-1.0zM497.0 577.0h1.0v1.0h-1.0zM517.0 574.0h1.0v1.0h-1.0zM510.0 585.0h1.0v1.0h-1.0zM512.0 573.0h1.0v1.0h-1.0zM500.0 573.0h1.0v1.0h-1.0zM498.0 581.0h1.0v1.0h-1.0zM484.0 585.0h1.0v1.0h-1.0zM497.0 577.0h1.0v1.0h-1.0zM507.0 574.0h1.0v1.0h-1.0zM503.0 576.0h1.0v1.0h-1.0zM491.0 587.0h1.0v1.0h-1.0zM485.0 580.0h1.0v1.0h-1.0zM490.0 588.0h1.0v1.0h-1.0zM512.0 572.0h1.0v1.0h-1.0zM495.0 583.0h1.0v1.0h-1.0zM491.0 583.0h1.0v1.0h-1.0zM520.0 585.0h1.0v1.0h-1.0zM513.0 590.0h1.0v1.0h-1.0zM512.0 581.0h1.0v1.0h-1.0zM490.0 589.0h1.0v1.0h-1.0zM519.0 580.0h1.0v1.0h-1.0zM490.0 572.0h1.0v1.0h-1.0zM506.0 576.0h1.0v1.0h-1.0zM483.0 580.0h1.0v1.0h-1.0zM519.0 582.0h1.0v1.0h-1.0zM523.0 579.0h1.0v1.0h-1.0zM519.0 585.0h1.0v1.0h-1.0zM498.0 584.0h1.0v1.0h-1.0zM490.0 576.0h1.0v1.0h-1.0zM491.0 575.0h1.0v1.0h-1.0zM507.0 575.0h1.0v1.0h-1.0zM493.0 572.0h1.0v1.0h-1.0zM523.0 586.0h1.0v1.0h-1.0zM491.0 574.0h1.0v1.0h-1.0zM489.0 581.0h1.0v1.0h-1.0zM490.0 581.0h1.0v1.0h-1.0zM516.0 582.0h1.0v1.0h-1.0zM507.0 587.0h1.0v1.0h-1.0zM496.0 577.0h1.0v1.0h-1.0zM493.0 577.0h1.0v1.0h-1.0zM506.0 578.0h1.0v1.0h-1.0zM517.0 573.0h1.0v1.0h-1.0zM520.0 588.0h1.0v1.0h-1.0zM485.0 572.0h1.0v1.0h-1.0zM506.0 586.0h1.0v1.0h-1.0zM486.0 584.0h1.0v1.0h-1.0zM518.0 577.0h1.0v1.0h-1.0zM496.0 580.0h1.0v1.0h-1.0zM520.0 582.0h1.0v1.0h-1.0zM484.0 579.0h1.0v1.0h-1.0zM506.0 576.0h1.0v1.0h-1.0zM501.0 581.0h1.0v1.0h-1.0zM514.0 589.0h1.0v1.0h-1.0zM513.0 590.0h1.0v1.0h-1.0zM488.0 589.0h1.0v1.0h-1.0zM520.0 573.0h1.0v1.0h-1.0zM514.0 582.0h1.0v1.0h-1.0zM515.0 581.0h1.0v1.0h-1.0zM500.0 588.0h1.0v1.0h-1.0zM517.0 578.0h1.0v1.0h-1.0zM486.0 582.0h1.0v1.0h-1.0zM494.0 583.0h1.0v1.0h-1.0zM486.0 582.0h1.0v1.0h-1.0zM524.0 585.0h1.0v1.0h-1.0zM488.0 574.0h1.0v1.0h-1.0zM523.0 574.0h1.0v1.0h-1.0zM522.0 586.0h1.0v1.0h-1.0zM514.0 572.0h1.0v1.0h-1.0zM525.0 586.0h1.0v1.0h-1.0zM512.0 588.0h1.0v1.0h-1.0zM514.0 584.0h1.0v1.0h-1.0zM507.0 574.0h1.0v1.0h-1.0zM496.0 572.0h1.0v1.0h-1.0zM485.0 585.0h1.0v1.0h-1.0zM484.0 579.0h1.0v1.0h-1.0zM499.0 590.0h1.0v1.0h-1.0zM507.0 585.0h1.0v1.0h-1.0zM511.0 579.0h1.0v1.0h-1.0zM507.0 584.0h1.0v1.0h-1.0zM502.0 587.0h1.0v1.0h-1.0zM496.0 574.0h1.0v1.0h-1.0zM484.0 587.0h1.0v1.0h-1.0zM493.0 587.0h1.0v1.0h-1.0zM505.0 578.0h1.0v1.0h-1.0zM510.0 580.0h1.0v1.0h-1.0zM497.0 587.0h1.0v1.0h-1.0zM513.0 584.0h1.0v1.0h-1.0zM501.0 584.0h1.0v1.0h-1.0zM515.0 572.0h1.0v1.0h-1.0zM492.0 582.0h1.0v1.0h-1.0zM494.0 581.0h1.0v1.0h-1.0zM507.0 576.0h1.0v1.0h-1.0zM487.0 589.0h1.0v1.0h-1.0zM493.0 574.0h1.0v1.0h-1.0zM515.0 581.0h1.0v1.0h-1.0zM521.0 584.0h1.0v1.0h-1.0zM511.0 575.0h1.0v1.0h-1.0zM492.0 585.0h1.0v1.0h-1.0zM495.0 582.0h1.0v1.0h-1.0zM505.0 590.0h1.0v1.0h-1.0zM525.0 578.0h1.0v1.0h-1.0zM498.0 574.0h1.0v1.0h-1.0zM483.0 582.0h1.0v1.0h-1.0zM514.0 580.0h1.0v1.0h-1.0zM491.0 588.0h1.0v1.0h-1.0zM494.0 579.0h1.0v1.0h-1.0zM520.0 580.0h1.0v1.0h-1.0zM506.0 577.0h1.0v1.0h-1.0zM507.0 586.0h1.0v1.0h-1.0zM507.0 585.0h1.0v1.0h-1.0zM511.0 580.0h1.0v1.0h-1.0zM524.0 577.0h1.0v1.0h-1.0zM524.0 584.0h1.0v1.0h-1.0zM521.0 580.0h1.0v1.0h-1.0zM488.0 578.0h1.0v1.0h-1.0zM495.0 573.0h1.0v1.0h-1.0zM504.0 583.0h1.0v1.0h-1.0zM483.0 574.0h1.0v1.0h-1.0zM514.0 590.0h1.0v1.0h-1.0zM484.0 584.0h1.0v1.0h-1.0zM520.0 586.0h1.0v1.0h-1.0zM510.0 579.0h1.0v1.0h-1.0zM482.0 589.0h1.0v1.0h-1.0zM491.0 575.0h1.0v1.0h-1.0zM501.0 578.0h1.0v1.0h-1.0zM511.0 583.0h1.0v1.0h-1.0zM482.0 583.0h1.0v1.0h-1.0zM492.0 576.0h1.0v1.0h-1.0zM518.0 585.0h1.0v1.0h-1.0zM515.0 573.0h1.0v1.0h-1.0zM501.0 578.0h1.0v1.0h-1.0zM508.0 584.0h1.0v1.0h-1.0zM517.0 579.0h1.0v1.0h-1.0zM496.0 590.0h1.0v1.0h-1.0zM519.0 586.0h1.0v1.0h-1.0zM483.0 590.0h1.0v1.0h-1.0zM486.0 574.0h1.0v1.0h-1.0zM509.0 578.0h1.0v1.0h-1.0zM491.0 573.0h1.0v1.0h-1.0zM513.0 588.0h1.0v1.0h-1.0zM520.0 589.0h1.0v1.0h-1.0zM521.0 587.0h1.0v1.0h-1.0zM512.0 582.0h1.0v1.0h-1.0zM491.0 580.0h1.0v1.0h-1.0zM491.0 583.0h1.0v1.0h-1.0zM500.0 581.0h1.0v1.0h-1.0zM522.0 572.0h1.0v1.0h-1.0zM486.0 574.0h1.0v1.0h-1.0zM493.0 588.0h1.0v1.0h-1.0zM488.0 578.0h1.0v1.0h-1.0zM505.0 580.0h1.0v1.0h-1.0zM504.0 573.0h1.0v1.0h-1.0zM492.0 573.0h1.0v1.0h-1.0zM519.0 587.0h1.0v1.0h-1.0zM499.0 584.0h1.0v1.0h-1.0zM492.0 573.0h1.0v1.0h-1.0zM488.0 579.0h1.0v1.0h-1.0zM504.0 589.0h1.0v1.0h-1.0zM498.0 585.0h1.0v1.0h-1.0zM494.0 578.0h1.0v1.0h-1.0zM515.0 585.0h1.0v1.0h-1.0zM487.0 582.0h1.0v1.0h-1.0zM496.0 578.0h1.0v1.0h-1.0zM514.0 573.0h1.0v1.0h-1.0zM504.0 589.0h1.0v1.0h-1.0zM522.0 577.0h1.0v1.0h-1.0zM483.0 583.0h1.0v1.0h-1.0zM513.0 587.0h1.0v1.0h-1.0zM492.0 586.0h1.0v1.0h-1.0zM483.0 580.0h1.0v1.0h-1.0zM525.0 573.0h1.0v1.0h-1.0zM495.0 589.0h1.0v1.0h-1.0zM520.0 575.0h1.0v1.0h-1.0zM501.0 584.0h1.0v1.0h-1.0zM495.0 586.0h1.0v1.0h-1.0zM505.0 572.0h1.0v1.0h-1.0zM504.0 577.0h1.0v1.0h-1.0zM521.0 580.0h1.0v1.0h-1.0zM520.0 572.0h1.0v1.0h-1.0zM506.0 577.0h1.0v1.0h-1.0zM493.0 589.0h1.0v1.0h-1.0zM514.0 585.0h1.0v1.0h-1.0zM495.0 579.0h1.0v1.0h-1.0zM514.0 589.0h1.0v1.0h-1.0zM500.0 586.0h1.0v1.0h-1.0zM505.0 574.0h1.0v1.0h-1.0zM497.0 584.0h1.0v1.0h-1.0zM520.0 577.0h1.0v1.0h-1.0zM504.0 589.0h1.0v1.0h-1.0zM524.0 583.0h1.0v1.0h-1.0zM518.0 576.0h1.0v1.0h-1.0zM483.0 585.0h1.0v1.0h-1.0zM519.0 572.0h1.0v1.0h-1.0zM524.0 578.0h1.0v1.0h-1.0zM488.0 578.0h1.0v1.0h-1.0zM516.0 588.0h1.0v1.0h-1.0zM505.0 588.0h1.0v1.0h-1.0zM500.0 575.0h1.0v1.0h-1.0zM492.0 579.0h1.0v1.0h-1.0zM524.0 585.0h1.0v1.0h-1.0zM521.0 586.0h1.0v1.0h-1.0zM513.0 578.0h1.0v1.0h-1.0zM523.0 578.0h1.0v1.0h-1.0zM498.0 577.0h1.0v1.0h-1.0zM509.0 584.0h1.0v1.0h-1.0zM496.0 587.0h1.0v1.0h-1.0zM512.0 580.0h1.0v1.0h-1.0zM484.0 589.0h1.0v1.0h-1.0zM511.0 578.0h1.0v1.0h-1.0zM484.0 582.0h1.0v1.0h-1.0zM528.0 574.0h1.0v1.0h-1.0zM519.0 573.0h1.0v1.0h-1.0zM508.0 573.0h1.0v1.0h-1.0zM514.0 564.0h1.0v1.0h-1.0zM524.0 564.0h1.0v1.0h-1.0zM525.0 562.0h1.0v1.0h-1.0zM500.0 574.0h1.0v1.0h-1.0zM518.0 571.0h1.0v1.0h-1.0zM529.0 565.0h1.0v1.0h-1.0zM531.0 565.0h1.0v1.0h-1.0zM535.0 574.0h1.0v1.0h-1.0zM530.0 572.0h1.0v1.0h-1.0zM503.0 562.0h1.0v1.0h-1.0zM523.0 576.0h1.0v1.0h-1.0zM508.0 569.0h1.0v1.0h-1.0zM521.0 569.0h1.0v1.0h-1.0zM522.0 568.0h1.0v1.0h-1.0zM528.0 571.0h1.0v1.0h-1.0zM504.0 575.0h1.0v1.0h-1.0zM516.0 574.0h1.0v1.0h-1.0zM506.0 567.0h1.0v1.0h-1.0zM516.0 573.0h1.0v1.0h-1.0zM529.0 574.0h1.0v1.0h-1.0zM507.0 576.0h1.0v1.0h-1.0zM512.0 571.0h1.0v1.0h-1.0zM521.0 576.0h1.0v1.0h-1.0zM504.0 573.0h1.0v1.0h-1.0zM519.0 565.0h1.0v1.0h-1.0zM508.0 564.0h1.0v1.0h-1.0zM516.0 563.0h1.0v1.0h-1.0zM518.0 572.0h1.0v1.0h-1.0zM513.0 570.0h1.0v1.0h-1.0zM513.0 564.0h1.0v1.0h-1.0zM531.0 574.0h1.0v1.0h-1.0zM531.0 565.0h1.0v1.0h-1.0zM502.0 572.0h1.0v1.0h-1.0zM521.0 576.0h1.0v1.0h-1.0zM533.0 567.0h1.0v1.0h-1.0zM500.0 565.0h1.0v1.0h-1.0zM509.0 566.0h1.0v1.0h-1.0zM503.0 566.0h1.0v1.0h-1.0zM526.0 562.0h1.0v1.0h-1.0zM507.0 574.0h1.0v1.0h-1.0zM532.0 562.0h1.0v1.0h-1.0zM514.0 571.0h1.0v1.0h-1.0zM528.0 569.0h1.0v1.0h-1.0zM532.0 570.0h1.0v1.0h-1.0zM535.0 567.0h1.0v1.0h-1.0zM527.0 572.0h1.0v1.0h-1.0zM501.0 572.0h1.0v1.0h-1.0zM523.0 564.0h1.0v1.0h-1.0zM522.0 568.0h1.0v1.0h-1.0zM528.0 572.0h1.0v1.0h-1.0zM529.0 573.0h1.0v1.0h-1.0zM532.0 571.0h1.0v1.0h-1.0zM514.0 569.0h1.0v1.0h-1.0zM514.0 562.0h1.0v1.0h-1.0zM529.0 575.0h1.0v1.0h-1.0zM514.0 574.0h1.0v1.0h-1.0zM505.0 567.0h1.0v1.0h-1.0zM531.0 564.0h1.0v1.0h-1.0zM510.0 562.0h1.0v1.0h-1.0zM517.0 567.0h1.0v1.0h-1.0zM521.0 566.0h1.0v1.0h-1.0zM513.0 562.0h1.0v1.0h-1.0zM529.0 564.0h1.0v1.0h-1.0zM512.0 564.0h1.0v1.0h-1.0zM500.0 571.0h1.0v1.0h-1.0zM510.0 575.0h1.0v1.0h-1.0zM509.0 565.0h1.0v1.0h-1.0zM535.0 563.0h1.0v1.0h-1.0zM510.0 570.0h1.0v1.0h-1.0zM507.0 572.0h1.0v1.0h-1.0zM525.0 563.0h1.0v1.0h-1.0zM507.0 565.0h1.0v1.0h-1.0zM513.0 570.0h1.0v1.0h-1.0zM501.0 563.0h1.0v1.0h-1.0zM515.0 565.0h1.0v1.0h-1.0zM506.0 565.0h1.0v1.0h-1.0zM513.0 568.0h1.0v1.0h-1.0zM533.0 573.0h1.0v1.0h-1.0zM500.0 568.0h1.0v1.0h-1.0zM519.0 567.0h1.0v1.0h-1.0zM522.0 576.0h1.0v1.0h-1.0zM526.0 562.0h1.0v1.0h-1.0zM531.0 562.0h1.0v1.0h-1.0zM525.0 574.0h1.0v1.0h-1.0zM530.0 564.0h1.0v1.0h-1.0zM520.0 560.0h1.0v1.0h-1.0zM521.0 554.0h1.0v1.0h-1.0zM527.0 554.0h1.0v1.0h-1.0zM528.0 552.0h1.0v1.0h-1.0zM524.0 555.0h1.0v1.0h-1.0zM525.0 560.0h1.0v1.0h-1.0zM527.0 560.0h1.0v1.0h-1.0zM524.0 556.0h1.0v1.0h-1.0zM524.0 550.0h1.0v1.0h-1.0zM521.0 554.0h1.0v1.0h-1.0zM689.0 568.0h1.0v1.0h-1.0zM686.0 576.0h1.0v1.0h-1.0zM675.0 590.0h1.0v1.0h-1.0zM694.0 570.0h1.0v1.0h-1.0zM680.0 575.0h1.0v1.0h-1.0zM683.0 569.0h1.0v1.0h-1.0zM679.0 587.0h1.0v1.0h-1.0zM692.0 580.0h1.0v1.0h-1.0zM678.0 567.0h1.0v1.0h-1.0zM682.0 589.0h1.0v1.0h-1.0zM684.0 582.0h1.0v1.0h-1.0zM693.0 569.0h1.0v1.0h-1.0zM691.0 581.0h1.0v1.0h-1.0zM677.0 583.0h1.0v1.0h-1.0zM682.0 589.0h1.0v1.0h-1.0zM677.0 567.0h1.0v1.0h-1.0zM686.0 586.0h1.0v1.0h-1.0zM680.0 585.0h1.0v1.0h-1.0zM681.0 579.0h1.0v1.0h-1.0zM676.0 590.0h1.0v1.0h-1.0zM671.0 579.0h1.0v1.0h-1.0zM687.0 572.0h1.0v1.0h-1.0zM676.0 567.0h1.0v1.0h-1.0zM677.0 572.0h1.0v1.0h-1.0zM676.0 593.0h1.0v1.0h-1.0zM681.0 566.0h1.0v1.0h-1.0zM692.0 590.0h1.0v1.0h-1.0zM678.0 593.0h1.0v1.0h-1.0zM691.0 596.0h1.0v1.0h-1.0zM685.0 573.0h1.0v1.0h-1.0zM694.0 577.0h1.0v1.0h-1.0zM687.0 593.0h1.0v1.0h-1.0zM683.0 572.0h1.0v1.0h-1.0zM679.0 588.0h1.0v1.0h-1.0zM690.0 594.0h1.0v1.0h-1.0zM676.0 588.0h1.0v1.0h-1.0zM682.0 581.0h1.0v1.0h-1.0zM675.0 576.0h1.0v1.0h-1.0zM682.0 594.0h1.0v1.0h-1.0zM691.0 570.0h1.0v1.0h-1.0zM680.0 587.0h1.0v1.0h-1.0zM695.0 590.0h1.0v1.0h-1.0zM693.0 587.0h1.0v1.0h-1.0zM694.0 596.0h1.0v1.0h-1.0zM673.0 594.0h1.0v1.0h-1.0zM672.0 573.0h1.0v1.0h-1.0zM694.0 575.0h1.0v1.0h-1.0zM681.0 583.0h1.0v1.0h-1.0zM683.0 592.0h1.0v1.0h-1.0zM676.0 589.0h1.0v1.0h-1.0zM683.0 566.0h1.0v1.0h-1.0zM691.0 584.0h1.0v1.0h-1.0zM679.0 595.0h1.0v1.0h-1.0zM679.0 572.0h1.0v1.0h-1.0zM690.0 590.0h1.0v1.0h-1.0zM694.0 573.0h1.0v1.0h-1.0zM674.0 593.0h1.0v1.0h-1.0zM671.0 594.0h1.0v1.0h-1.0zM677.0 592.0h1.0v1.0h-1.0zM683.0 572.0h1.0v1.0h-1.0zM686.0 586.0h1.0v1.0h-1.0zM693.0 587.0h1.0v1.0h-1.0zM687.0 572.0h1.0v1.0h-1.0zM676.0 586.0h1.0v1.0h-1.0zM684.0 578.0h1.0v1.0h-1.0zM692.0 595.0h1.0v1.0h-1.0zM680.0 590.0h1.0v1.0h-1.0zM675.0 582.0h1.0v1.0h-1.0zM683.0 567.0h1.0v1.0h-1.0zM675.0 588.0h1.0v1.0h-1.0zM671.0 590.0h1.0v1.0h-1.0zM673.0 571.0h1.0v1.0h-1.0zM685.0 569.0h1.0v1.0h-1.0zM695.0 581.0h1.0v1.0h-1.0zM672.0 568.0h1.0v1.0h-1.0zM691.0 576.0h1.0v1.0h-1.0zM674.0 571.0h1.0v1.0h-1.0zM687.0 584.0h1.0v1.0h-1.0zM680.0 586.0h1.0v1.0h-1.0zM685.0 593.0h1.0v1.0h-1.0zM693.0 575.0h1.0v1.0h-1.0zM684.0 590.0h1.0v1.0h-1.0zM683.0 596.0h1.0v1.0h-1.0zM694.0 583.0h1.0v1.0h-1.0zM674.0 574.0h1.0v1.0h-1.0zM682.0 566.0h1.0v1.0h-1.0zM693.0 579.0h1.0v1.0h-1.0zM679.0 580.0h1.0v1.0h-1.0zM691.0 595.0h1.0v1.0h-1.0zM681.0 594.0h1.0v1.0h-1.0zM693.0 574.0h1.0v1.0h-1.0zM682.0 570.0h1.0v1.0h-1.0zM687.0 577.0h1.0v1.0h-1.0zM691.0 595.0h1.0v1.0h-1.0zM691.0 577.0h1.0v1.0h-1.0zM677.0 586.0h1.0v1.0h-1.0zM676.0 592.0h1.0v1.0h-1.0zM673.0 574.0h1.0v1.0h-1.0zM676.0 566.0h1.0v1.0h-1.0zM681.0 567.0h1.0v1.0h-1.0zM545.0 483.0h1.0v1.0h-1.0zM546.0 486.0h1.0v1.0h-1.0zM540.0 478.0h1.0v1.0h-1.0zM540.0 480.0h1.0v1.0h-1.0zM550.0 486.0h1.0v1.0h-1.0zM547.0 480.0h1.0v1.0h-1.0zM550.0 480.0h1.0v1.0h-1.0zM559.0 481.0h1.0v1.0h-1.0zM659.0 588.0h1.0v1.0h-1.0zM679.0 590.0h1.0v1.0h-1.0zM669.0 590.0h1.0v1.0h-1.0zM666.0 589.0h1.0v1.0h-1.0zM679.0 592.0h1.0v1.0h-1.0zM668.0 590.0h1.0v1.0h-1.0zM679.0 586.0h1.0v1.0h-1.0zM663.0 590.0h1.0v1.0h-1.0zM666.0 589.0h1.0v1.0h-1.0zM665.0 592.0h1.0v1.0h-1.0zM680.0 589.0h1.0v1.0h-1.0zM658.0 595.0h1.0v1.0h-1.0zM670.0 593.0h1.0v1.0h-1.0zM678.0 588.0h1.0v1.0h-1.0zM661.0 595.0h1.0v1.0h-1.0zM670.0 586.0h1.0v1.0h-1.0zM668.0 593.0h1.0v1.0h-1.0zM658.0 594.0h1.0v1.0h-1.0zM671.0 588.0h1.0v1.0h-1.0zM673.0 587.0h1.0v1.0h-1.0zM675.0 586.0h1.0v1.0h-1.0zM679.0 586.0h1.0v1.0h-1.0zM665.0 594.0h1.0v1.0h-1.0zM660.0 596.0h1.0v1.0h-1.0zM656.0 596.0h1.0v1.0h-1.0zM658.0 593.0h1.0v1.0h-1.0zM658.0 595.0h1.0v1.0h-1.0zM669.0 591.0h1.0v1.0h-1.0zM675.0 592.0h1.0v1.0h-1.0zM670.0 593.0h1.0v1.0h-1.0zM679.0 590.0h1.0v1.0h-1.0zM661.0 595.0h1.0v1.0h-1.0zM665.0 596.0h1.0v1.0h-1.0zM680.0 589.0h1.0v1.0h-1.0zM665.0 587.0h1.0v1.0h-1.0zM660.0 588.0h1.0v1.0h-1.0zM444.0 595.0h1.0v1.0h-1.0zM443.0 593.0h1.0v1.0h-1.0zM442.0 590.0h1.0v1.0h-1.0zM444.0 593.0h1.0v1.0h-1.0zM449.0 586.0h1.0v1.0h-1.0zM443.0 593.0h1.0v1.0h-1.0zM446.0 585.0h1.0v1.0h-1.0zM439.0 595.0h1.0v1.0h-1.0zM441.0 588.0h1.0v1.0h-1.0zM445.0 590.0h1.0v1.0h-1.0zM445.0 589.0h1.0v1.0h-1.0zM446.0 588.0h1.0v1.0h-1.0zM448.0 593.0h1.0v1.0h-1.0z" fill="#1a1a1a"/>
<ellipse cx="142" cy="515" rx="2.6" ry="2.2" fill="#fff"/>
<g fill="url(#sparse)" opacity="0.6"><ellipse cx="697" cy="237" rx="9" ry="11"/><ellipse cx="659" cy="246" rx="6" ry="6"/><ellipse cx="630" cy="295" rx="5" ry="7"/><ellipse cx="672" cy="310" rx="7" ry="8"/><ellipse cx="566" cy="377" rx="6" ry="8"/><ellipse cx="690" cy="280" rx="6" ry="6"/><ellipse cx="610" cy="420" rx="6" ry="5"/><ellipse cx="700" cy="395" rx="6" ry="7"/></g>
<rect x="125" y="52" width="591" height="544" fill="url(#medium)" mask="url(#medmask)"/>
<rect x="125" y="52" width="591" height="544" fill="url(#sparse)" mask="url(#bandmask)"/>
</g>
</svg>
<svg class="icons" width="900" height="633" viewBox="0 0 900 633"><rect x="21.60" y="26.90" width="0.70" height="8.00" rx="0" fill="#e0e0e0"/><polygon points="26.90,27.10 30.90,27.10 32.50,28.70 32.50,34.70 26.90,34.70" fill="#fff" stroke="#8a8a8a" stroke-width="0.5"/><polygon points="37.00,28.10 40.00,28.10 41.00,28.90 45.00,28.90 45.00,33.90 37.00,33.90" fill="#f4cf4f" stroke="#d9b23a" stroke-width="0.4"/><rect x="49.00" y="27.10" width="7.20" height="7.60" rx="0.8" fill="#5a8ad0"/><rect x="50.40" y="27.50" width="4.40" height="2.60" rx="0" fill="#c9d6e8"/><rect x="51.00" y="32.10" width="3.20" height="2.60" rx="0" fill="#eef2f6"/><rect x="60.50" y="27.10" width="4.50" height="7.60" rx="0" fill="#f4cf4f"/><polygon points="65.00,27.10 66.80,28.90 66.80,34.70 65.00,34.70" fill="#fff" stroke="#999" stroke-width="0.4"/><rect x="65.00" y="32.00" width="3.00" height="3.00" rx="0.6" fill="#f4cf4f"/><line x1="66.50" y1="32.70" x2="66.50" y2="34.30" stroke="#fff" stroke-width="0.5" stroke-linecap="round"/><line x1="65.70" y1="33.50" x2="67.30" y2="33.50" stroke="#fff" stroke-width="0.5" stroke-linecap="round"/><rect x="71.90" y="27.10" width="7.40" height="7.60" rx="0" fill="#f4f6fa" stroke="#8a94a6" stroke-width="0.5"/><rect x="73.10" y="28.50" width="4.60" height="3.60" rx="0" fill="#c5d3e8"/><line x1="74.20" y1="29.40" x2="78.70" y2="34.40" stroke="#b08d2a" stroke-width="0.9" stroke-linecap="round"/><circle cx="85.00" cy="28.90" r="1.8" fill="#d9552b"/><rect x="83.40" y="31.10" width="3.40" height="3.60" rx="0" fill="#5da05d"/><line x1="87.80" y1="31.40" x2="90.60" y2="27.50" stroke="#4a7cc2" stroke-width="0.8" stroke-linecap="round"/><circle cx="89.00" cy="33.70" r="0.9" fill="#666"/><rect x="96.00" y="26.90" width="0.60" height="8.00" rx="0" fill="#e4e4e4"/><rect x="99.30" y="25.60" width="11.30" height="11.00" rx="1.5" fill="#e9e9e9" stroke="#d2d2d2" stroke-width="0.5"/><path d="M103.0,34.699999999999996 L101.39999999999999,31.5 Q101.0,30.5 102.0,30.7 L102.8,31.7 L102.8,27.9 Q103.39999999999999,27.099999999999998 104.0,27.9 L104.0,30.299999999999997 L104.19999999999999,27.099999999999998 Q104.89999999999999,26.5 105.39999999999999,27.299999999999997 L105.39999999999999,30.299999999999997 L105.8,27.9 Q106.39999999999999,27.299999999999997 106.8,28.099999999999998 L106.6,30.5 L107.19999999999999,29.099999999999998 Q107.89999999999999,28.9 107.8,29.7 L107.39999999999999,32.9 Q107.0,34.3 106.19999999999999,34.699999999999996 Z" fill="#fdfdfd" stroke="#444" stroke-width="0.55" stroke-linejoin="round"/><polygon points="116.00,27.10 119.80,30.90 116.00,34.70 112.20,30.90" fill="#f4cf4f"/><circle cx="114.00" cy="28.90" r="1.4" fill="#5a8ad0"/><circle cx="118.00" cy="28.90" r="1.4" fill="#5a8ad0"/><circle cx="114.00" cy="32.90" r="1.4" fill="#5a8ad0"/><circle cx="118.00" cy="32.90" r="1.4" fill="#5a8ad0"/><circle cx="119.50" cy="30.90" r="1.1" fill="#5a8ad0"/><g opacity="1"><line x1="124.70" y1="34.10" x2="126.90" y2="31.90" stroke="#c9a227" stroke-width="1.4" stroke-linecap="round"/><circle cx="128.50" cy="30.10" r="2.6" fill="#eaf0f8" stroke="#7d8a99" stroke-width="0.6"/><line x1="127.10" y1="30.10" x2="129.90" y2="30.10" stroke="#4a7cc2" stroke-width="0.8" stroke-linecap="round"/><line x1="128.50" y1="28.70" x2="128.50" y2="31.50" stroke="#4a7cc2" stroke-width="0.8" stroke-linecap="round"/></g><g opacity="1"><line x1="136.00" y1="34.10" x2="138.20" y2="31.90" stroke="#c9a227" stroke-width="1.4" stroke-linecap="round"/><circle cx="139.80" cy="30.10" r="2.6" fill="#eaf0f8" stroke="#7d8a99" stroke-width="0.6"/><line x1="138.20" y1="30.10" x2="141.40" y2="30.10" stroke="#4a7cc2" stroke-width="0.9" stroke-linecap="round"/></g><rect x="147.40" y="27.30" width="3.20" height="3.20" rx="0" fill="#4a7cc2"/><rect x="151.50" y="27.30" width="3.20" height="3.20" rx="0" fill="#4a7cc2"/><rect x="147.40" y="31.40" width="3.20" height="3.20" rx="0" fill="#4a7cc2"/><rect x="151.50" y="31.40" width="3.20" height="3.20" rx="0" fill="#4a7cc2"/><line x1="147.60" y1="34.50" x2="150.20" y2="31.90" stroke="#c9a227" stroke-width="1.1" stroke-linecap="round"/><rect x="158.90" y="27.30" width="2.60" height="5.50" rx="0" fill="#f4cf4f"/><g opacity="1"><line x1="159.30" y1="34.10" x2="161.50" y2="31.90" stroke="#c9a227" stroke-width="1.4" stroke-linecap="round"/><circle cx="163.10" cy="30.10" r="2.6" fill="#fdf6d8" stroke="#7d8a99" stroke-width="0.6"/></g><g opacity="1"><line x1="170.70" y1="34.10" x2="172.90" y2="31.90" stroke="#c9a227" stroke-width="1.4" stroke-linecap="round"/><circle cx="174.50" cy="30.10" r="2.6" fill="#f6f6f6" stroke="#7d8a99" stroke-width="0.6"/></g><g opacity="1"><line x1="182.00" y1="34.10" x2="184.20" y2="31.90" stroke="#dddddd" stroke-width="1.4" stroke-linecap="round"/><circle cx="185.80" cy="30.10" r="2.6" fill="#fbfbfb" stroke="#d8d8d8" stroke-width="0.6"/></g><g opacity="1"><line x1="194.00" y1="34.10" x2="196.20" y2="31.90" stroke="#c9a227" stroke-width="1.4" stroke-linecap="round"/><circle cx="197.80" cy="30.10" r="2.6" fill="#f6f6f6" stroke="#7d8a99" stroke-width="0.6"/></g><rect x="198.00" y="31.90" width="2.80" height="2.80" rx="0" fill="#4a7cc2"/><g opacity="1"><line x1="205.30" y1="34.10" x2="207.50" y2="31.90" stroke="#dddddd" stroke-width="1.4" stroke-linecap="round"/><circle cx="209.10" cy="30.10" r="2.6" fill="#fbfbfb" stroke="#d8d8d8" stroke-width="0.6"/></g><rect x="216.30" y="27.10" width="5.50" height="7.40" rx="0" fill="#e6e6e6" stroke="#b5b5b5" stroke-width="0.4"/><rect x="220.90" y="32.20" width="3.00" height="3.00" rx="0.6" fill="#f4cf4f"/><line x1="222.40" y1="32.90" x2="222.40" y2="34.50" stroke="#fff" stroke-width="0.5" stroke-linecap="round"/><line x1="221.60" y1="33.70" x2="223.20" y2="33.70" stroke="#fff" stroke-width="0.5" stroke-linecap="round"/><polygon points="227.20,30.40 230.00,27.90 234.20,27.90 234.20,31.90 227.20,32.40" fill="#d6d6d6"/><rect x="232.20" y="32.20" width="3.00" height="3.00" rx="0.6" fill="#f4cf4f"/><line x1="233.70" y1="32.90" x2="233.70" y2="34.50" stroke="#fff" stroke-width="0.5" stroke-linecap="round"/><line x1="232.90" y1="33.70" x2="234.50" y2="33.70" stroke="#fff" stroke-width="0.5" stroke-linecap="round"/><rect x="240.50" y="27.10" width="3.40" height="6.60" rx="0" fill="#4a7cc2"/><rect x="244.90" y="32.20" width="3.00" height="3.00" rx="0.6" fill="#f4cf4f"/><line x1="246.40" y1="32.90" x2="246.40" y2="34.50" stroke="#fff" stroke-width="0.5" stroke-linecap="round"/><line x1="245.60" y1="33.70" x2="247.20" y2="33.70" stroke="#fff" stroke-width="0.5" stroke-linecap="round"/><rect x="250.80" y="27.10" width="6.00" height="7.60" rx="0" fill="#e0e0e0" stroke="#bdbdbd" stroke-width="0.4"/><rect x="254.50" y="27.10" width="1.50" height="3.20" rx="0" fill="#9aa7b8"/><circle cx="266.00" cy="30.90" r="3.4" fill="#fff" stroke="#888" stroke-width="0.7"/><line x1="266.00" y1="28.90" x2="266.00" y2="30.90" stroke="#777" stroke-width="0.6" stroke-linecap="round"/><line x1="266.00" y1="30.90" x2="267.50" y2="31.70" stroke="#777" stroke-width="0.6" stroke-linecap="round"/><path d="M274.3,30.9 A3,3 0 0 1 279.90000000000003,29.299999999999997" fill="none" stroke="#5a8ad0" stroke-width="1.4"/><path d="M280.3,30.9 A3,3 0 0 1 274.7,32.5" fill="none" stroke="#5a8ad0" stroke-width="1.4"/><polygon points="278.80,27.40 281.10,28.10 280.10,30.50" fill="#5a8ad0"/><polygon points="275.80,34.40 273.50,33.70 274.50,31.30" fill="#5a8ad0"/><rect x="286.40" y="26.90" width="0.60" height="8.00" rx="0" fill="#e4e4e4"/><rect x="291.10" y="27.30" width="6.60" height="6.60" rx="0" fill="#f4cf4f" stroke="#8a7a3a" stroke-width="0.4"/><polygon points="294.70,30.40 297.70,33.40 296.20,33.40 297.00,34.90 296.40,35.10 295.60,33.70 294.70,34.50" fill="#fff" stroke="#333" stroke-width="0.3"/><polygon points="301.50,30.40 303.90,30.40 302.70,31.80" fill="#444"/><rect x="306.40" y="27.70" width="5.00" height="4.20" rx="0" fill="#d6d6d6" stroke="#999" stroke-width="0.3"/><rect x="308.60" y="30.10" width="5.00" height="4.40" rx="0" fill="#f4cf4f"/><polygon points="317.10,30.40 319.50,30.40 318.30,31.80" fill="#444"/><rect x="322.20" y="27.30" width="5.00" height="4.80" rx="0" fill="#f4cf4f" stroke="#c8a435" stroke-width="0.3"/><rect x="324.40" y="29.50" width="5.00" height="4.60" rx="0" fill="#f4cf4f" stroke="#c8a435" stroke-width="0.3"/><rect x="326.40" y="32.10" width="3.40" height="2.60" rx="0" fill="#e05050"/><polygon points="332.80,30.40 335.20,30.40 334.00,31.80" fill="#444"/><rect x="337.70" y="27.30" width="6.60" height="5.60" rx="0" fill="#f4cf4f"/><circle cx="343.70" cy="33.30" r="1.2" fill="#4a7cc2"/><polygon points="348.10,30.40 350.50,30.40 349.30,31.80" fill="#444"/><rect x="356.40" y="26.90" width="0.60" height="8.00" rx="0" fill="#e4e4e4"/><circle cx="361.80" cy="30.10" r="3.2" fill="#4a7cc2"/><rect x="361.40" y="29.30" width="0.90" height="3.00" rx="0" fill="#fff"/><circle cx="361.90" cy="28.30" r="0.5" fill="#fff"/><line x1="364.30" y1="32.90" x2="365.90" y2="34.50" stroke="#666" stroke-width="0.8" stroke-linecap="round"/><rect x="371.10" y="27.30" width="7.20" height="7.20" rx="0" fill="#f0f0f0" stroke="#888" stroke-width="0.4"/><rect x="371.40" y="27.60" width="6.60" height="1.40" rx="0" fill="#d66"/><rect x="371.40" y="29.90" width="6.60" height="1.20" rx="0" fill="#6a6"/><rect x="371.40" y="32.10" width="6.60" height="1.20" rx="0" fill="#69c"/><line x1="371.40" y1="33.90" x2="378.00" y2="33.90" stroke="#999" stroke-width="0.4" stroke-linecap="round"/><circle cx="386.00" cy="30.90" r="2.8" fill="#5a8ad0" stroke="#4a7cc0" stroke-width="1.4"/><circle cx="386.00" cy="30.90" r="1" fill="#fff"/><line x1="388.60" y1="30.90" x2="389.80" y2="30.90" stroke="#5a8ad0" stroke-width="1" stroke-linecap="round"/><line x1="386.00" y1="33.50" x2="386.00" y2="34.70" stroke="#5a8ad0" stroke-width="1" stroke-linecap="round"/><line x1="383.40" y1="30.90" x2="382.20" y2="30.90" stroke="#5a8ad0" stroke-width="1" stroke-linecap="round"/><line x1="386.00" y1="28.30" x2="386.00" y2="27.10" stroke="#5a8ad0" stroke-width="1" stroke-linecap="round"/><line x1="387.82" y1="32.72" x2="388.66" y2="33.56" stroke="#5a8ad0" stroke-width="1" stroke-linecap="round"/><line x1="384.18" y1="32.72" x2="383.34" y2="33.56" stroke="#5a8ad0" stroke-width="1" stroke-linecap="round"/><line x1="387.82" y1="29.08" x2="388.66" y2="28.24" stroke="#5a8ad0" stroke-width="1" stroke-linecap="round"/><line x1="384.18" y1="29.08" x2="383.34" y2="28.24" stroke="#5a8ad0" stroke-width="1" stroke-linecap="round"/><path d="M400.0,27.7 L394.79999999999995,27.7 L398.0,30.9 L394.79999999999995,34.1 L400.2,34.1" fill="none" stroke="#9c27b0" stroke-width="1.3"/><rect x="406.10" y="27.30" width="7.20" height="7.20" rx="0" fill="#c4d6ee" stroke="#8fb0d8" stroke-width="0.4"/><rect x="406.10" y="27.30" width="7.20" height="1.60" rx="0" fill="#8fb0d8"/><line x1="408.70" y1="28.90" x2="408.70" y2="34.50" stroke="#fff" stroke-width="0.4" stroke-linecap="round"/><line x1="406.10" y1="31.40" x2="413.30" y2="31.40" stroke="#fff" stroke-width="0.4" stroke-linecap="round"/><polygon points="415.80,30.40 418.20,30.40 417.00,31.80" fill="#444"/><rect x="421.00" y="28.70" width="8.00" height="1.20" rx="0" fill="#777"/><rect x="421.00" y="31.10" width="8.00" height="1.40" rx="0" fill="#999"/><polygon points="431.80,30.40 434.20,30.40 433.00,31.80" fill="#444"/><rect x="436.50" y="27.30" width="7.60" height="5.00" rx="1.4" fill="#f5e36a"/><circle cx="437.70" cy="33.90" r="1.2" fill="#5da05d"/><g opacity="1"><line x1="449.30" y1="34.10" x2="451.50" y2="31.90" stroke="#e0e0e0" stroke-width="1.4" stroke-linecap="round"/><circle cx="453.10" cy="30.10" r="2.6" fill="#fbfbfb" stroke="#dcdcdc" stroke-width="0.6"/></g><polygon points="459.10,30.40 461.50,30.40 460.30,31.80" fill="#444"/><rect x="21.60" y="40.70" width="0.70" height="8.00" rx="0" fill="#e0e0e0"/><polygon points="25.70,43.70 28.70,41.70 30.70,47.70 27.20,48.20" fill="#e06a2a"/><polygon points="26.20,42.70 29.20,41.20 31.70,46.70 28.20,47.50" fill="#f4cf4f"/><rect x="27.50" y="40.90" width="5.60" height="5.80" rx="0" fill="#5a8ad0"/><rect x="30.90" y="46.20" width="3.00" height="3.00" rx="0.5" fill="#4caf50"/><polygon points="37.00,43.70 41.00,41.10 45.00,43.70 41.00,46.30" fill="#5b8ed6"/><polygon points="37.00,43.70 41.00,46.30 41.00,48.70 37.00,46.50" fill="#e6b83a"/><polygon points="45.00,43.70 41.00,46.30 41.00,48.70 45.00,46.50" fill="#f4cf4f"/><rect x="42.20" y="46.00" width="3.00" height="3.00" rx="0.6" fill="#f4cf4f"/><line x1="43.70" y1="46.70" x2="43.70" y2="48.30" stroke="#fff" stroke-width="0.5" stroke-linecap="round"/><line x1="42.90" y1="47.50" x2="44.50" y2="47.50" stroke="#fff" stroke-width="0.5" stroke-linecap="round"/><path d="M48.5,41.5 L50.699999999999996,48.1 L52.699999999999996,41.5 M52.5,41.5 L55.3,41.5" fill="none" stroke="#4a5560" stroke-width="0.8"/><rect x="53.50" y="46.00" width="3.00" height="3.00" rx="0.6" fill="#f4cf4f"/><line x1="55.00" y1="46.70" x2="55.00" y2="48.30" stroke="#fff" stroke-width="0.5" stroke-linecap="round"/><line x1="54.20" y1="47.50" x2="55.80" y2="47.50" stroke="#fff" stroke-width="0.5" stroke-linecap="round"/><path d="M59.900000000000006,48.5 Q62.7,42.7 67.5,40.900000000000006 Q65.2,45.7 59.900000000000006,48.5Z" fill="#4a7cc2"/><rect x="64.90" y="46.00" width="3.00" height="3.00" rx="0.6" fill="#f4cf4f"/><line x1="66.40" y1="46.70" x2="66.40" y2="48.30" stroke="#fff" stroke-width="0.5" stroke-linecap="round"/><line x1="65.60" y1="47.50" x2="67.20" y2="47.50" stroke="#fff" stroke-width="0.5" stroke-linecap="round"/><rect x="72.10" y="42.10" width="7.20" height="5.40" rx="1.6" fill="#5a8ad0"/><rect x="76.90" y="46.00" width="3.00" height="3.00" rx="0.6" fill="#f4cf4f"/><line x1="78.40" y1="46.70" x2="78.40" y2="48.30" stroke="#fff" stroke-width="0.5" stroke-linecap="round"/><line x1="77.60" y1="47.50" x2="79.20" y2="47.50" stroke="#fff" stroke-width="0.5" stroke-linecap="round"/><rect x="83.20" y="40.90" width="7.60" height="7.60" rx="0" fill="#4a7cc2"/><line x1="84.00" y1="46.70" x2="89.50" y2="41.70" stroke="#a9c4e8" stroke-width="0.5" stroke-linecap="round"/><rect x="88.20" y="46.00" width="3.00" height="3.00" rx="0.6" fill="#f4cf4f"/><line x1="89.70" y1="46.70" x2="89.70" y2="48.30" stroke="#fff" stroke-width="0.5" stroke-linecap="round"/><line x1="88.90" y1="47.50" x2="90.50" y2="47.50" stroke="#fff" stroke-width="0.5" stroke-linecap="round"/><rect x="95.20" y="40.90" width="7.60" height="7.60" rx="0" fill="#a9c0e0"/><path d="M96.5,41.900000000000006 L98.2,46.7 L99.8,41.900000000000006" fill="none" stroke="#4a6a98" stroke-width="0.6"/><rect x="100.20" y="46.00" width="3.00" height="3.00" rx="0.6" fill="#f4cf4f"/><line x1="101.70" y1="46.70" x2="101.70" y2="48.30" stroke="#fff" stroke-width="0.5" stroke-linecap="round"/><line x1="100.90" y1="47.50" x2="102.50" y2="47.50" stroke="#fff" stroke-width="0.5" stroke-linecap="round"/><rect x="107.40" y="40.70" width="0.60" height="8.00" rx="0" fill="#e4e4e4"/><polygon points="113.80,48.20 119.80,41.70 118.30,40.90 112.50,47.20" fill="#e2e2e2"/><rect x="118.80" y="47.70" width="1.20" height="0.80" rx="0" fill="#555"/><polygon points="124.00,48.50 123.50,46.70 129.50,40.90 130.80,42.10 125.00,48.10" fill="#e7cf45" stroke="#b89a20" stroke-width="0.3"/><rect x="135.40" y="40.90" width="7.20" height="7.60" rx="0.5" fill="#e8e8e8"/><rect x="136.80" y="41.30" width="4.40" height="2.40" rx="0" fill="#f6f6f6"/><line x1="148.70" y1="47.70" x2="154.70" y2="41.70" stroke="#d4d4d4" stroke-width="0.7" stroke-linecap="round"/><polygon points="157.10,44.20 159.50,44.20 158.30,45.60" fill="#444"/><rect x="164.00" y="41.70" width="1.20" height="1.20" rx="0" fill="#cfcfcf"/><rect x="168.50" y="41.70" width="1.20" height="1.20" rx="0" fill="#cfcfcf"/><rect x="166.50" y="45.20" width="2.60" height="2.60" rx="0" fill="#fff" stroke="#cfcfcf" stroke-width="0.4"/><line x1="176.00" y1="47.70" x2="182.00" y2="41.70" stroke="#d4d4d4" stroke-width="0.7" stroke-linecap="round"/><polygon points="184.50,44.20 186.90,44.20 185.70,45.60" fill="#444"/><rect x="190.50" y="41.10" width="6.40" height="7.20" rx="0.5" fill="#e6e6e6"/><rect x="202.00" y="41.50" width="6.00" height="6.80" rx="0.5" fill="#f0e8e6" stroke="#e0d6d4" stroke-width="0.4"/><line x1="213.30" y1="42.70" x2="219.30" y2="46.70" stroke="#d2d2d2" stroke-width="0.6" stroke-linecap="round"/><line x1="213.30" y1="46.70" x2="219.30" y2="42.70" stroke="#d2d2d2" stroke-width="0.6" stroke-linecap="round"/><rect x="224.90" y="41.10" width="5.60" height="7.20" rx="0" fill="#fafafa" stroke="#d6d6d6" stroke-width="0.5"/><rect x="236.20" y="41.10" width="5.60" height="7.20" rx="0" fill="#fafafa" stroke="#d6d6d6" stroke-width="0.5"/><path d="M254.3,47.7 Q254.3,43.2 250.3,43.2 L248.3,43.2" fill="none" stroke="#d4d4d4" stroke-width="1"/><polygon points="247.70,43.20 250.10,41.10 250.10,45.30" fill="#d4d4d4"/><path d="M259.7,47.7 Q259.7,43.2 263.7,43.2 L265.7,43.2" fill="none" stroke="#d4d4d4" stroke-width="1"/><polygon points="266.30,43.20 263.90,41.10 263.90,45.30" fill="#d4d4d4"/><rect x="271.70" y="40.70" width="0.60" height="8.00" rx="0" fill="#e4e4e4"/><rect x="275.50" y="42.90" width="7.60" height="3.40" rx="0.8" fill="#e8c531"/><rect x="276.70" y="44.10" width="5.20" height="1.00" rx="0" fill="#6b5a10"/><circle cx="289.50" cy="42.70" r="1.8" fill="#3aa23a"/><circle cx="292.10" cy="43.90" r="1.8" fill="#d62d20"/><circle cx="290.50" cy="46.20" r="1.6" fill="#f2c12e"/><circle cx="293.70" cy="47.30" r="1.2" fill="#c22"/><rect x="298.40" y="40.70" width="0.60" height="8.00" rx="0" fill="#e4e4e4"/><rect x="301.50" y="42.70" width="6.80" height="3.60" rx="0.8" fill="#a9c4ea"/><rect x="302.50" y="43.80" width="4.60" height="1.00" rx="0" fill="#334"/><circle cx="307.70" cy="46.90" r="1.2" fill="#b22"/><rect x="312.90" y="42.70" width="7.60" height="3.80" rx="0.8" fill="#f25b5b"/><rect x="314.50" y="44.20" width="4.40" height="0.80" rx="0" fill="#fbd0d0"/><rect x="327.50" y="42.70" width="6.80" height="3.60" rx="0.8" fill="#e2e2e2"/><rect x="332.10" y="45.90" width="2.60" height="2.40" rx="0" fill="#fff" stroke="#d8d8d8" stroke-width="0.4"/><rect x="338.20" y="42.70" width="6.80" height="3.60" rx="0.8" fill="#e2e2e2"/><rect x="342.80" y="45.90" width="2.60" height="2.40" rx="0" fill="#fff" stroke="#d8d8d8" stroke-width="0.4"/><rect x="349.50" y="42.70" width="6.80" height="3.60" rx="0.8" fill="#e2e2e2"/><rect x="354.10" y="45.90" width="2.60" height="2.40" rx="0" fill="#fff" stroke="#d8d8d8" stroke-width="0.4"/><rect x="360.90" y="42.70" width="6.80" height="3.60" rx="0.8" fill="#e2e2e2"/><rect x="365.50" y="45.90" width="2.60" height="2.40" rx="0" fill="#fff" stroke="#d8d8d8" stroke-width="0.4"/><rect x="373.20" y="42.70" width="6.80" height="3.60" rx="0.8" fill="#e2e2e2"/><rect x="377.80" y="45.90" width="2.60" height="2.40" rx="0" fill="#fff" stroke="#d8d8d8" stroke-width="0.4"/><rect x="386.70" y="40.70" width="0.60" height="8.00" rx="0" fill="#e4e4e4"/><circle cx="394.30" cy="44.70" r="3.6" fill="#5a7fb0" stroke="#2b3f5a" stroke-width="0.6"/><polygon points="390.90,46.20 393.30,43.70 395.80,45.20 397.70,46.20 397.30,48.20 391.30,48.20" fill="#222"/><rect x="403.40" y="40.70" width="0.60" height="8.00" rx="0" fill="#e4e4e4"/><rect x="408.50" y="41.10" width="4.40" height="4.20" rx="1.2" fill="#3d77b8"/><rect x="410.50" y="44.10" width="4.40" height="4.20" rx="1.2" fill="#f5c93b"/><rect x="420.70" y="40.70" width="0.60" height="8.00" rx="0" fill="#e4e4e4"/><rect x="426.20" y="40.90" width="5.80" height="7.60" rx="0.5" fill="#2d5a94"/><rect x="426.20" y="40.90" width="1.20" height="7.60" rx="0" fill="#1f3f6a"/><rect x="428.40" y="42.10" width="2.60" height="1.60" rx="0" fill="#8fb2de"/><rect x="438.00" y="40.70" width="0.60" height="8.00" rx="0" fill="#e4e4e4"/><rect x="22.80" y="60.50" width="3.80" height="4.80" rx="0" fill="#f2f2f2" stroke="#a0a0a0" stroke-width="0.4"/><rect x="25.00" y="63.90" width="2.00" height="2.00" rx="0" fill="#4caf50"/><g transform="translate(33.9,63.3) scale(0.72) translate(-33.9,-63.3)"><path d="M30.9,63.3 A3,3 0 0 1 36.5,61.699999999999996" fill="none" stroke="#5a8ad0" stroke-width="1.4"/><path d="M36.9,63.3 A3,3 0 0 1 31.299999999999997,64.89999999999999" fill="none" stroke="#5a8ad0" stroke-width="1.4"/><polygon points="35.40,59.80 37.70,60.50 36.70,62.90" fill="#5a8ad0"/><polygon points="32.40,66.80 30.10,66.10 31.10,63.70" fill="#5a8ad0"/></g><polygon points="39.60,60.70 45.20,60.70 43.00,63.50 43.00,66.10 41.80,66.10 41.80,63.50" fill="#3b73c4"/><rect x="39.60" y="60.50" width="5.60" height="1.00" rx="0" fill="#e8c531"/><rect x="49.20" y="60.50" width="3.60" height="5.40" rx="0" fill="#f0d070"/><polygon points="51.60,60.30 53.40,62.50 52.20,62.50 52.20,65.90 51.00,65.90 51.00,62.50 49.80,62.50" fill="#3b73c4"/><circle cx="60.00" cy="63.30" r="2.4" fill="#4f86cc"/><rect x="59.60" y="62.20" width="0.80" height="2.20" rx="0" fill="#fff"/><rect x="110.20" y="53.00" width="3.60" height="3.20" rx="0" fill="none" stroke="#9a9a9a" stroke-width="0.5"/><line x1="117.50" y1="53.10" x2="120.50" y2="56.10" stroke="#888" stroke-width="0.5" stroke-linecap="round"/><line x1="117.50" y1="56.10" x2="120.50" y2="53.10" stroke="#888" stroke-width="0.5" stroke-linecap="round"/><rect x="110.20" y="331.00" width="3.60" height="3.20" rx="0" fill="none" stroke="#9a9a9a" stroke-width="0.5"/><line x1="117.30" y1="331.10" x2="120.30" y2="334.10" stroke="#888" stroke-width="0.5" stroke-linecap="round"/><line x1="117.30" y1="334.10" x2="120.30" y2="331.10" stroke="#888" stroke-width="0.5" stroke-linecap="round"/><rect x="868.50" y="52.90" width="3.60" height="3.20" rx="0" fill="none" stroke="#9a9a9a" stroke-width="0.5"/><line x1="875.30" y1="53.00" x2="878.30" y2="56.00" stroke="#888" stroke-width="0.5" stroke-linecap="round"/><line x1="875.30" y1="56.00" x2="878.30" y2="53.00" stroke="#888" stroke-width="0.5" stroke-linecap="round"/><polygon points="22.00,71.10 23.80,72.30 22.00,73.50" fill="#555"/><rect x="26.70" y="70.30" width="4.80" height="4.00" rx="0" fill="#f4f4f4" stroke="#9a9a9a" stroke-width="0.4"/><polygon points="29.10,75.78 29.90,77.68 31.90,77.68 30.30,78.98 30.90,81.18 29.10,79.88 27.30,81.18 27.90,78.98 26.30,77.68 28.30,77.68" fill="#f2c12e"/><polygon points="22.00,83.67 23.80,84.87 22.00,86.07" fill="#555"/><rect x="27.10" y="82.07" width="4.00" height="5.60" rx="0" fill="#e8e8e8" stroke="#999" stroke-width="0.4"/><rect x="28.60" y="82.07" width="1.20" height="1.80" rx="0" fill="#4a7cc2"/><polygon points="22.00,89.95 23.80,91.16 22.00,92.36" fill="#555"/><rect x="26.70" y="88.95" width="4.80" height="4.40" rx="0" fill="#e6e6e6" stroke="#888" stroke-width="0.4"/><polygon points="22.00,96.24 23.80,97.44 22.00,98.64" fill="#555"/><rect x="26.70" y="95.44" width="4.80" height="4.00" rx="0" fill="#f4f4f4" stroke="#9a9a9a" stroke-width="0.4"/><polygon points="26.50,103.12 29.10,101.12 31.70,103.12 29.10,104.72" fill="#5a8ad0"/><polygon points="26.50,103.12 29.10,104.72 29.10,106.52 26.50,104.92" fill="#e6b83a"/><polygon points="31.70,103.12 29.10,104.72 29.10,106.52 31.70,104.92" fill="#f4cf4f"/><path d="M26.5,112.60999999999999 Q28.6,108.50999999999999 31.700000000000003,107.41 Q30.1,110.80999999999999 26.5,112.60999999999999Z" fill="#4a7cc2"/><circle cx="29.10" cy="116.09" r="2.6" fill="#3d6da8"/><rect x="28.60" y="117.80" width="1.20" height="1.40" rx="0" fill="#3d6da8"/><circle cx="29.10" cy="122.58" r="2.4" fill="#c9d9ee" stroke="#9ab3d6" stroke-width="0.4"/><polygon points="26.50,126.47 31.70,128.87 26.50,131.27 27.90,128.87" fill="#4a76b0"/><rect x="26.50" y="133.35" width="5.20" height="3.60" rx="1.2" fill="#4a76b0"/><rect x="27.70" y="134.45" width="2.80" height="1.40" rx="0.5" fill="#c9d9ee"/><circle cx="29.10" cy="141.44" r="2.5" fill="#6f95c8" stroke="#4a6f9e" stroke-width="0.4"/><line x1="26.80" y1="141.44" x2="31.40" y2="141.44" stroke="#dfe8f4" stroke-width="0.4" stroke-linecap="round"/><circle cx="28.30" cy="148.12" r="1.5" fill="#fff" stroke="#4a76b0" stroke-width="0.5"/><circle cx="30.10" cy="148.32" r="1.3" fill="#fff" stroke="#4a76b0" stroke-width="0.5"/><circle cx="29.10" cy="154.00" r="2.5" fill="#6f95c8" stroke="#4a6f9e" stroke-width="0.4"/><line x1="26.80" y1="154.00" x2="31.40" y2="154.00" stroke="#dfe8f4" stroke-width="0.4" stroke-linecap="round"/><line x1="26.50" y1="160.29" x2="31.70" y2="160.29" stroke="#4a76b0" stroke-width="0.6" stroke-linecap="round"/><circle cx="27.10" cy="160.29" r="0.7" fill="#4a76b0"/><circle cx="31.10" cy="160.29" r="0.7" fill="#4a76b0"/><rect x="26.70" y="164.17" width="4.80" height="4.80" rx="0" fill="#7c8796"/><rect x="26.70" y="170.46" width="4.80" height="4.80" rx="0" fill="#c7d5ea" stroke="#5b7fb5" stroke-width="0.5"/><line x1="29.10" y1="170.46" x2="29.10" y2="175.26" stroke="#5b7fb5" stroke-width="0.4" stroke-linecap="round"/><line x1="26.70" y1="172.86" x2="31.50" y2="172.86" stroke="#5b7fb5" stroke-width="0.4" stroke-linecap="round"/><circle cx="29.10" cy="179.14" r="2.5" fill="#6f95c8" stroke="#4a6f9e" stroke-width="0.4"/><line x1="26.80" y1="179.14" x2="31.40" y2="179.14" stroke="#dfe8f4" stroke-width="0.4" stroke-linecap="round"/><circle cx="29.10" cy="185.43" r="2.5" fill="#6f95c8" stroke="#4a6f9e" stroke-width="0.4"/><line x1="26.80" y1="185.43" x2="31.40" y2="185.43" stroke="#dfe8f4" stroke-width="0.4" stroke-linecap="round"/><circle cx="29.10" cy="191.72" r="2.5" fill="#6f95c8" stroke="#4a6f9e" stroke-width="0.4"/><line x1="26.80" y1="191.72" x2="31.40" y2="191.72" stroke="#dfe8f4" stroke-width="0.4" stroke-linecap="round"/><line x1="23.00" y1="342.00" x2="25.60" y2="339.00" stroke="#e04a2a" stroke-width="1.0" stroke-linecap="round"/><line x1="24.00" y1="342.50" x2="27.00" y2="340.00" stroke="#f2c12e" stroke-width="0.8" stroke-linecap="round"/><rect x="31.20" y="338.00" width="4.60" height="5.80" rx="0" fill="#a9c9a9" stroke="#7a9a7a" stroke-width="0.4"/><rect x="39.60" y="339.00" width="5.00" height="3.00" rx="0" fill="#5b8ed6"/><rect x="43.50" y="342.20" width="1.50" height="1.00" rx="0" fill="#333"/><polygon points="48.60,337.80 54.20,337.80 52.00,341.00 52.00,344.00 50.80,344.00 50.80,341.00" fill="#3b73c4"/><rect x="48.60" y="337.60" width="5.60" height="1.00" rx="0" fill="#e8c531"/><rect x="57.80" y="338.00" width="4.80" height="6.00" rx="0" fill="#fff" stroke="#a58ac8" stroke-width="0.5"/><polygon points="64.80,340.50 67.20,340.50 66.00,341.90" fill="#444"/><rect x="71.00" y="337.60" width="4.40" height="6.60" rx="0" fill="#f0d070"/><rect x="72.30" y="337.40" width="1.40" height="7.00" rx="0" fill="#3b73c4"/><rect x="79.60" y="337.60" width="4.40" height="6.60" rx="0" fill="#f0d070"/><rect x="81.00" y="337.40" width="1.40" height="4.00" rx="0" fill="#3b73c4"/><rect x="87.80" y="337.40" width="5.00" height="6.60" rx="0" fill="#fff" stroke="#aaa" stroke-width="0.4"/><circle cx="92.20" cy="343.60" r="1.2" fill="#e53935"/><rect x="27.90" y="347.80" width="4.40" height="4.40" rx="0" fill="#fff" stroke="#7a7a7a" stroke-width="0.4"/><path d="M28.8,350 L29.9,351.2 L31.6,348.6" fill="none" stroke="#222" stroke-width="0.6"/><circle cx="37.60" cy="350.10" r="1.5" fill="#8bd48b"/><rect x="27.90" y="354.30" width="4.40" height="4.40" rx="0" fill="#fff" stroke="#bdbdbd" stroke-width="0.4"/><circle cx="37.60" cy="356.50" r="1.5" fill="#d27ed8"/><polygon points="22.30,361.80 24.70,361.80 23.50,363.40" fill="#555"/><rect x="27.90" y="360.50" width="4.40" height="4.40" rx="0" fill="#fff" stroke="#8a8a8a" stroke-width="0.4"/><path d="M28.8,362.7 L29.9,363.9 L31.6,361.3" fill="none" stroke="#222" stroke-width="0.6"/><rect x="35.40" y="360.30" width="4.60" height="4.60" rx="0" fill="none"/><line x1="35.60" y1="364.60" x2="39.80" y2="360.60" stroke="#2c5aa0" stroke-width="1.2" stroke-linecap="round"/><circle cx="36.50" cy="361.60" r="0.9" fill="#2c5aa0"/><polygon points="22.00,441.80 24.40,441.80 23.20,443.40" fill="#555"/><rect x="27.90" y="440.40" width="4.40" height="4.40" rx="0" fill="#fff" stroke="#bdbdbd" stroke-width="0.4"/><line x1="35.60" y1="444.60" x2="39.80" y2="440.60" stroke="#2c5aa0" stroke-width="1.2" stroke-linecap="round"/><circle cx="36.50" cy="441.60" r="0.9" fill="#2c5aa0"/><circle cx="25.60" cy="601.30" r="1.5" fill="none" stroke="#888" stroke-width="0.5"/><line x1="26.70" y1="602.40" x2="27.80" y2="603.50" stroke="#888" stroke-width="0.5" stroke-linecap="round"/><rect x="721.80" y="60.20" width="5.40" height="6.00" rx="0" fill="#c9daf0" stroke="#9db8de" stroke-width="0.4"/><rect x="729.20" y="59.20" width="0.60" height="8.00" rx="0" fill="#e4e4e4"/><rect x="733.20" y="59.80" width="4.40" height="6.60" rx="0" fill="#f0d070"/><rect x="734.60" y="59.60" width="1.40" height="7.00" rx="0" fill="#3b73c4"/><rect x="742.40" y="59.80" width="4.40" height="6.60" rx="0" fill="#f0d070"/><rect x="743.80" y="59.60" width="1.40" height="4.00" rx="0" fill="#3b73c4"/><rect x="750.80" y="59.80" width="4.40" height="6.00" rx="0" fill="#f2c12e"/><rect x="752.20" y="62.20" width="1.40" height="4.00" rx="0" fill="#3b73c4"/><rect x="758.70" y="59.20" width="0.60" height="8.00" rx="0" fill="#e4e4e4"/><circle cx="764.00" cy="62.70" r="3" fill="#f2c12e"/><circle cx="766.00" cy="65.00" r="1.4" fill="#e53935"/><rect x="769.20" y="59.20" width="0.60" height="8.00" rx="0" fill="#e4e4e4"/><rect x="773.00" y="60.20" width="4.00" height="6.00" rx="0" fill="#f4f4f4" stroke="#d6d6d6" stroke-width="0.5"/><rect x="781.40" y="62.00" width="5.00" height="2.40" rx="0" fill="#eee" stroke="#ddd" stroke-width="0.4"/><rect x="789.20" y="59.20" width="0.60" height="8.00" rx="0" fill="#e4e4e4"/><rect x="792.40" y="59.80" width="5.40" height="6.60" rx="0" fill="#5b8ed6"/><rect x="794.00" y="61.20" width="2.40" height="2.00" rx="0" fill="#fff"/><polygon points="800.40,62.70 802.80,62.70 801.60,64.10" fill="#444"/><line x1="805.80" y1="60.20" x2="810.80" y2="66.20" stroke="#d2a22a" stroke-width="1.2" stroke-linecap="round"/><circle cx="806.00" cy="60.40" r="1" fill="#999"/><rect x="814.20" y="59.20" width="0.60" height="8.00" rx="0" fill="#e4e4e4"/><rect x="816.80" y="59.40" width="5.80" height="7.60" rx="0.5" fill="#2d5a94"/><rect x="816.80" y="59.40" width="1.20" height="7.60" rx="0" fill="#1f3f6a"/><rect x="819.00" y="60.60" width="2.60" height="1.60" rx="0" fill="#8fb2de"/><polygon points="720.30,77.30 722.30,77.30 721.30,78.70" fill="#555"/><polygon points="724.20,83.00 726.20,83.00 725.20,84.40" fill="#555"/><polygon points="729.00,93.80 730.40,94.80 729.00,95.80" fill="#555"/><polygon points="874.50,579.00 876.50,579.00 875.50,580.30" fill="#444"/><polygon points="755.50,589.70 757.50,589.70 756.50,591.00" fill="#444"/><circle cx="633.00" cy="602.00" r="2.4" fill="#777"/><circle cx="632.40" cy="601.40" r="1" fill="#ddd"/><polygon points="678.80,601.50 681.20,601.50 680.00,602.90" fill="#444"/><rect x="689.20" y="601.40" width="3.00" height="2.80" rx="0" fill="#777"/><path d="M689.8,601.4 v-1 a0.9,0.9 0 0 1 1.8,0 v1" fill="none" stroke="#777" stroke-width="0.5"/><polygon points="743.80,601.20 745.40,601.20 744.60,600.20" fill="#555"/><polygon points="743.80,602.80 745.40,602.80 744.60,603.80" fill="#555"/><polygon points="798.20,601.20 799.80,601.20 799.00,600.20" fill="#555"/><polygon points="798.20,602.80 799.80,602.80 799.00,603.80" fill="#555"/><rect x="804.00" y="599.80" width="4.00" height="4.00" rx="0" fill="#fff" stroke="#999" stroke-width="0.4"/><path d="M804.7,602 L805.7,603.2 L807.6,600.2" fill="none" stroke="#222" stroke-width="0.6"/><circle cx="831.50" cy="602.00" r="2.2" fill="#666"/><line x1="829.40" y1="602.00" x2="833.60" y2="602.00" stroke="#ddd" stroke-width="0.4" stroke-linecap="round"/><circle cx="867.00" cy="601.70" r="2.6" fill="#555"/><polygon points="866.00,603.80 868.50,603.50 868.00,605.00" fill="#555"/></svg>
</body></html>
